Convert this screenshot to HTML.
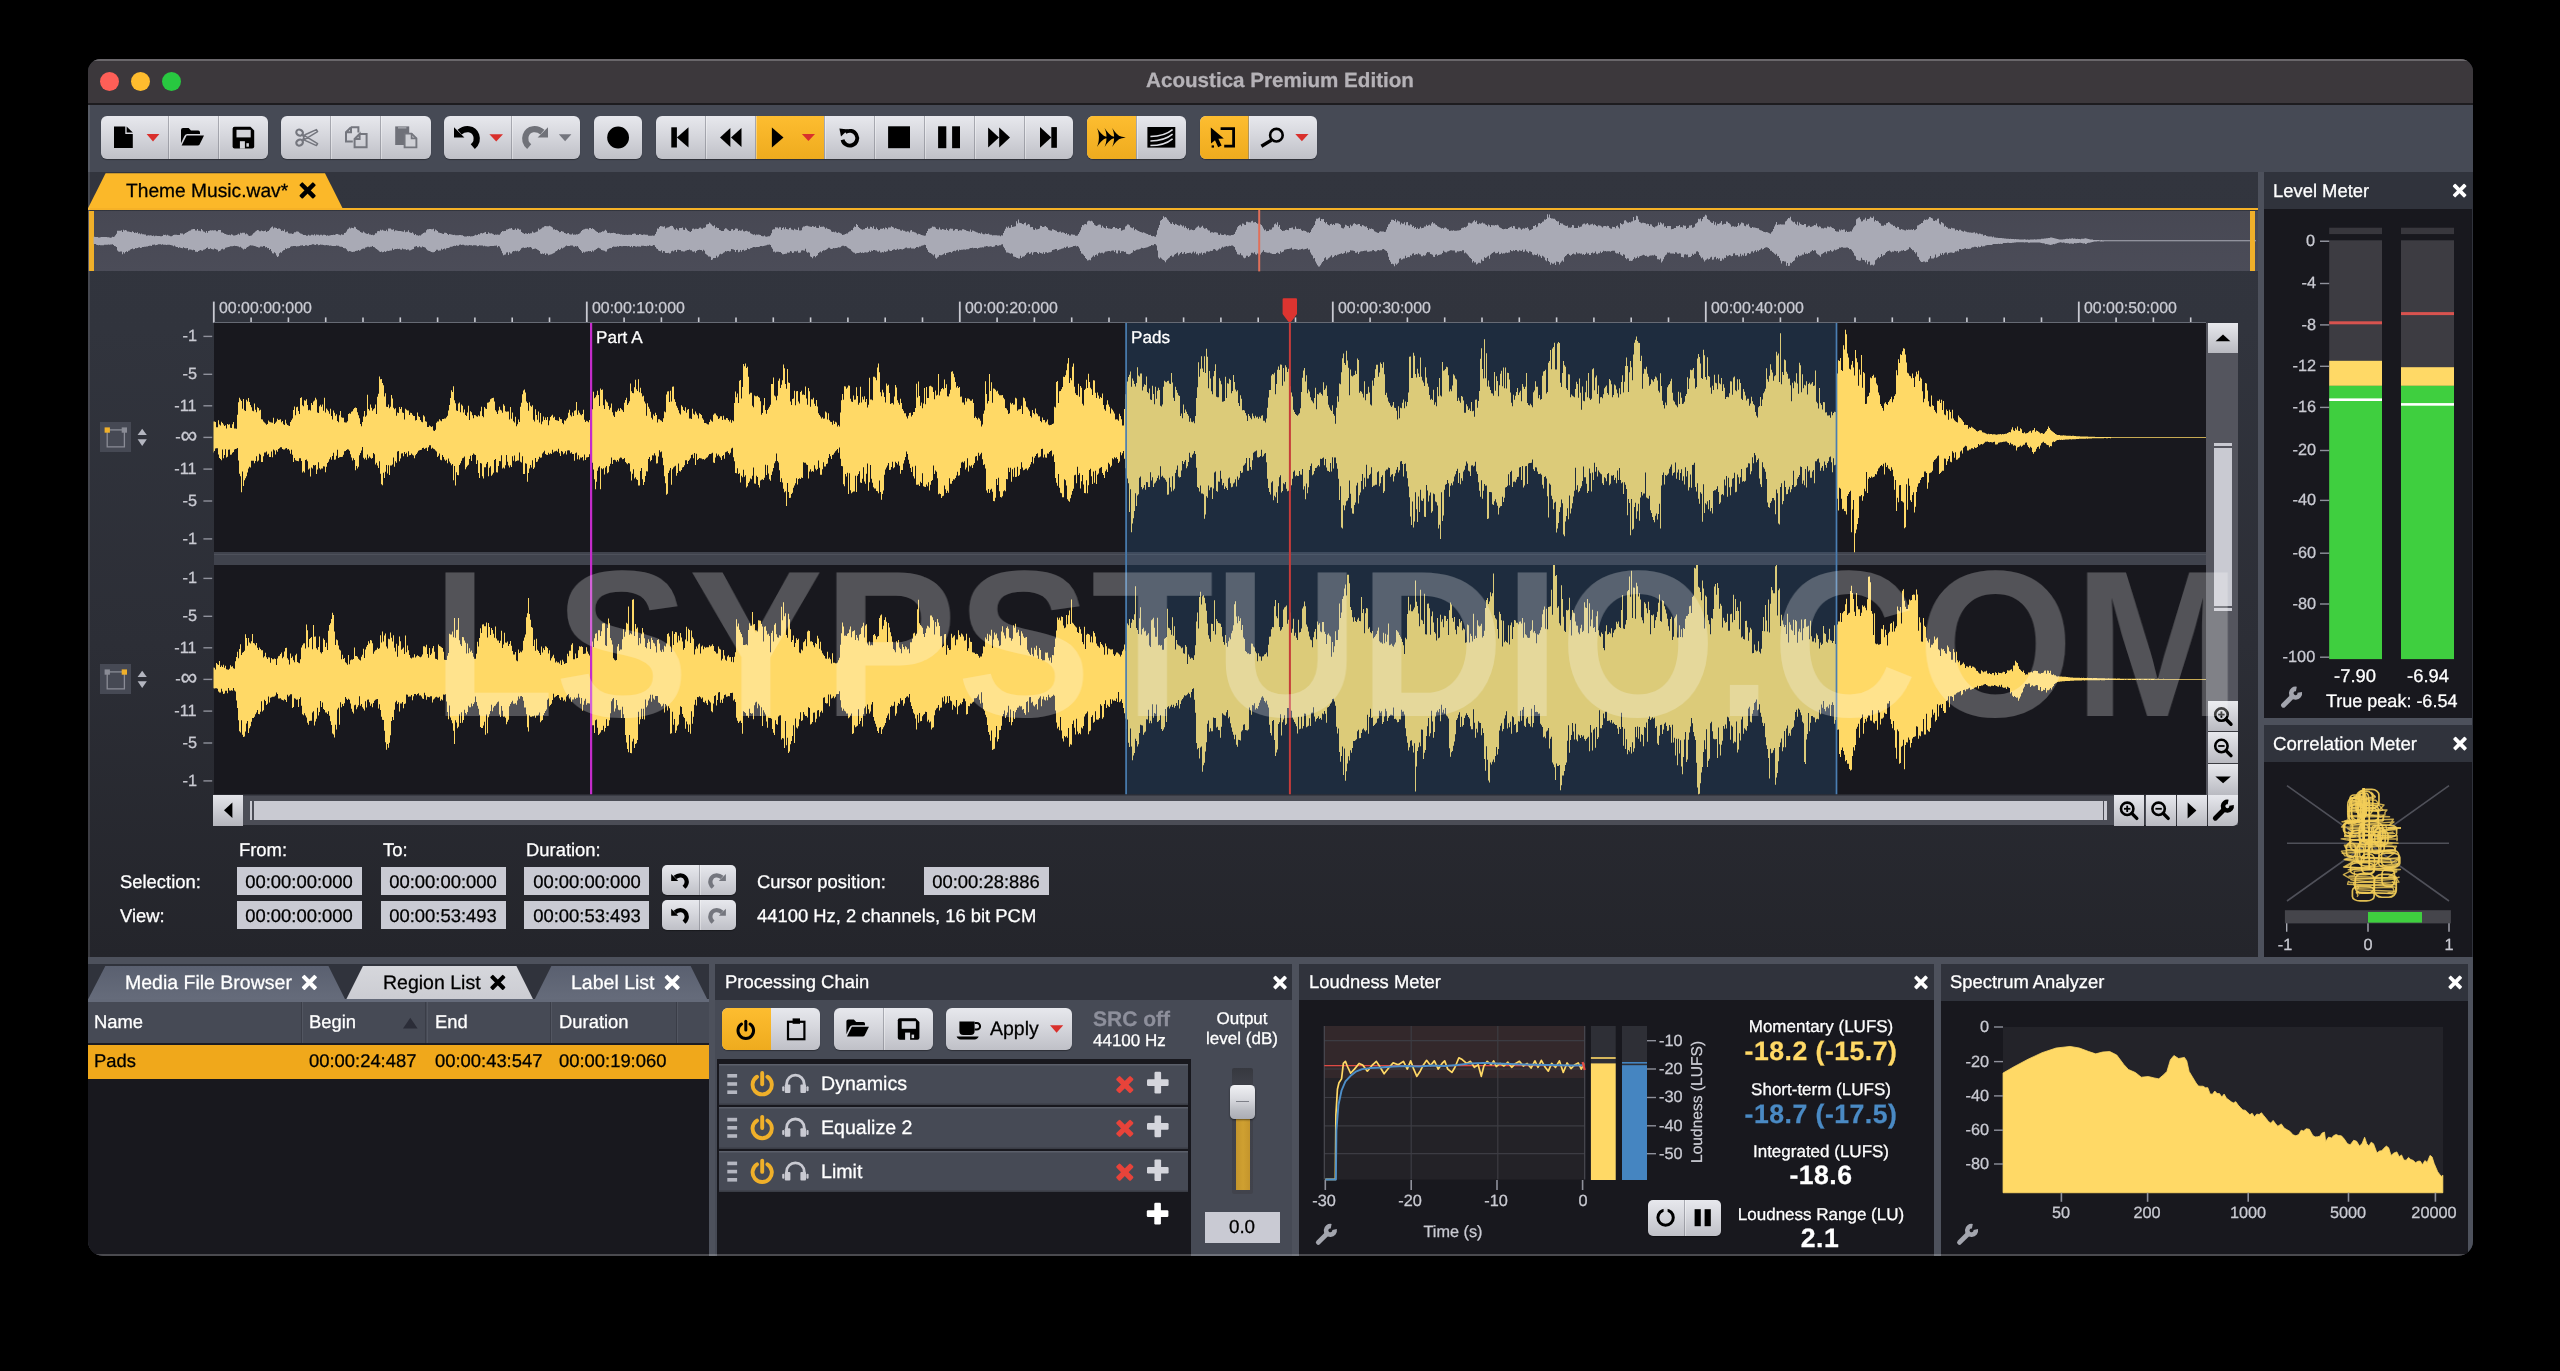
<!DOCTYPE html>
<html><head><meta charset="utf-8"><title>Acoustica Premium Edition</title>
<style>
html,body{margin:0;padding:0;background:#000;}
body{width:2560px;height:1371px;overflow:hidden;position:relative;font-family:"Liberation Sans",sans-serif;}
#win{position:absolute;left:87.8px;top:59.4px;width:2384.8px;height:1196.2px;border-radius:12.5px 12.5px 15px 15px;overflow:hidden;background:#30333c;}
#pg{position:absolute;left:-87.8px;top:-59.4px;width:2560px;height:1371px;}
#pg div{position:absolute;}
#la,#lc{left:0;top:0;width:2560px;height:1371px;}
#pg svg{position:absolute;left:0;top:0;}
.t{white-space:nowrap;-webkit-text-stroke:.55px currentColor;}
#wm{-webkit-text-stroke:0;}
body{text-rendering:geometricPrecision;}
#lc,#wm{will-change:transform;}

</style></head><body>
<div id="win"><div id="pg">
<div id="la">
<div style="left:87px;top:59px;width:2386px;height:44.5px;background:#3c383c;"></div>
<div style="left:87px;top:59.4px;width:2386px;height:1.5px;background:#6a676b;"></div>
<div style="left:87px;top:103px;width:2387px;height:1.5px;background:#1d1c1f;"></div>
<div style="left:87px;top:104.5px;width:2387px;height:67.5px;background:#464a55;"></div>
<div style="left:88px;top:172px;width:2170px;height:785px;background:linear-gradient(#32353e,#31343d 20%,#2c2e36 60%,#24252b);"></div>
<div style="left:88px;top:173.3px;width:255px;height:35px;background:#fbb829;clip-path:polygon(17.6px 0,237px 0,254.6px 100%,0 100%);"></div>
<div style="left:88px;top:207.6px;width:2170px;height:2.6px;background:#f5b127;"></div>
<div style="left:88px;top:210.5px;width:2170px;height:60.5px;background:linear-gradient(#474853,#4b4c58);"></div>
<div style="left:89px;top:211px;width:4.6px;height:60px;background:#f0b02a;"></div>
<div style="left:2250px;top:211px;width:4.6px;height:60px;background:#f0b02a;"></div>
<div style="left:2257.5px;top:172px;width:6px;height:785px;background:#4d515c;"></div>
<div style="left:88px;top:104.5px;width:1.6px;height:1150px;background:rgba(255,255,255,.10);"></div>
<div style="left:87px;top:1254.4px;width:2387px;height:1.4px;background:rgba(255,255,255,.22);z-index:3;"></div>
<div style="left:99.8px;top:71.5px;width:19.2px;height:19.2px;background:#fe5f57;border-radius:50%;"></div>
<div style="left:130.7px;top:71.5px;width:19.2px;height:19.2px;background:#febc2e;border-radius:50%;"></div>
<div style="left:161.8px;top:71.5px;width:19.2px;height:19.2px;background:#28c840;border-radius:50%;"></div>
<div style="left:100.5px;top:116px;width:167.5px;height:42.8px;background:linear-gradient(#e7e8ed,#d6d7dd 45%,#bfc0c7);border-radius:6px;box-shadow:0 1px 1px rgba(0,0,0,.35);overflow:hidden;"></div>
<div style="left:167.8px;top:116px;width:1px;height:42.8px;background:rgba(120,122,132,.55);"></div>
<div style="left:168.8px;top:116px;width:1px;height:42.8px;background:rgba(255,255,255,.35);"></div>
<div style="left:217.8px;top:116px;width:1px;height:42.8px;background:rgba(120,122,132,.55);"></div>
<div style="left:218.8px;top:116px;width:1px;height:42.8px;background:rgba(255,255,255,.35);"></div>
<div style="left:281.2px;top:116px;width:149.4px;height:42.8px;background:linear-gradient(#e7e8ed,#d6d7dd 45%,#bfc0c7);border-radius:6px;box-shadow:0 1px 1px rgba(0,0,0,.35);overflow:hidden;"></div>
<div style="left:330.3px;top:116px;width:1px;height:42.8px;background:rgba(120,122,132,.55);"></div>
<div style="left:331.3px;top:116px;width:1px;height:42.8px;background:rgba(255,255,255,.35);"></div>
<div style="left:380.1px;top:116px;width:1px;height:42.8px;background:rgba(120,122,132,.55);"></div>
<div style="left:381.1px;top:116px;width:1px;height:42.8px;background:rgba(255,255,255,.35);"></div>
<div style="left:443.8px;top:116px;width:136.5px;height:42.8px;background:linear-gradient(#e7e8ed,#d6d7dd 45%,#bfc0c7);border-radius:6px;box-shadow:0 1px 1px rgba(0,0,0,.35);overflow:hidden;"></div>
<div style="left:510.8px;top:116px;width:1px;height:42.8px;background:rgba(120,122,132,.55);"></div>
<div style="left:511.8px;top:116px;width:1px;height:42.8px;background:rgba(255,255,255,.35);"></div>
<div style="left:593.8px;top:116px;width:48.7px;height:42.8px;background:linear-gradient(#e7e8ed,#d6d7dd 45%,#bfc0c7);border-radius:6px;box-shadow:0 1px 1px rgba(0,0,0,.35);overflow:hidden;"></div>
<div style="left:656.2px;top:116px;width:416.9px;height:42.8px;background:linear-gradient(#e7e8ed,#d6d7dd 45%,#bfc0c7);border-radius:6px;box-shadow:0 1px 1px rgba(0,0,0,.35);overflow:hidden;"></div>
<div style="left:755.5px;top:116px;width:68.8px;height:42.8px;background:linear-gradient(#fdbd30,#f6b427 50%,#eeab1e);border-radius:0px 0px 0px 0px;"></div>
<div style="left:705.1px;top:116px;width:1px;height:42.8px;background:rgba(120,122,132,.55);"></div>
<div style="left:706.1px;top:116px;width:1px;height:42.8px;background:rgba(255,255,255,.35);"></div>
<div style="left:755px;top:116px;width:1px;height:42.8px;background:rgba(120,122,132,.55);"></div>
<div style="left:756px;top:116px;width:1px;height:42.8px;background:rgba(255,255,255,.35);"></div>
<div style="left:823.8px;top:116px;width:1px;height:42.8px;background:rgba(120,122,132,.55);"></div>
<div style="left:824.8px;top:116px;width:1px;height:42.8px;background:rgba(255,255,255,.35);"></div>
<div style="left:873.5px;top:116px;width:1px;height:42.8px;background:rgba(120,122,132,.55);"></div>
<div style="left:874.5px;top:116px;width:1px;height:42.8px;background:rgba(255,255,255,.35);"></div>
<div style="left:923.8px;top:116px;width:1px;height:42.8px;background:rgba(120,122,132,.55);"></div>
<div style="left:924.8px;top:116px;width:1px;height:42.8px;background:rgba(255,255,255,.35);"></div>
<div style="left:973.8px;top:116px;width:1px;height:42.8px;background:rgba(120,122,132,.55);"></div>
<div style="left:974.8px;top:116px;width:1px;height:42.8px;background:rgba(255,255,255,.35);"></div>
<div style="left:1023.8px;top:116px;width:1px;height:42.8px;background:rgba(120,122,132,.55);"></div>
<div style="left:1024.8px;top:116px;width:1px;height:42.8px;background:rgba(255,255,255,.35);"></div>
<div style="left:1086.8px;top:116px;width:99.2px;height:42.8px;background:linear-gradient(#e7e8ed,#d6d7dd 45%,#bfc0c7);border-radius:6px;box-shadow:0 1px 1px rgba(0,0,0,.35);overflow:hidden;"></div>
<div style="left:1086.8px;top:116px;width:49.5px;height:42.8px;background:linear-gradient(#fdbd30,#f6b427 50%,#eeab1e);border-radius:6px 0px 0px 6px;"></div>
<div style="left:1135.8px;top:116px;width:1px;height:42.8px;background:rgba(120,122,132,.55);"></div>
<div style="left:1136.8px;top:116px;width:1px;height:42.8px;background:rgba(255,255,255,.35);"></div>
<div style="left:1199.5px;top:116px;width:117.3px;height:42.8px;background:linear-gradient(#e7e8ed,#d6d7dd 45%,#bfc0c7);border-radius:6px;box-shadow:0 1px 1px rgba(0,0,0,.35);overflow:hidden;"></div>
<div style="left:1199.5px;top:116px;width:49.3px;height:42.8px;background:linear-gradient(#fdbd30,#f6b427 50%,#eeab1e);border-radius:6px 0px 0px 6px;"></div>
<div style="left:1248.3px;top:116px;width:1px;height:42.8px;background:rgba(120,122,132,.55);"></div>
<div style="left:1249.3px;top:116px;width:1px;height:42.8px;background:rgba(255,255,255,.35);"></div>
<div style="left:213.5px;top:323px;width:1992.5px;height:229.3px;background:#18181e;"></div>
<div style="left:213.5px;top:552.3px;width:1992.5px;height:12.7px;background:#40434d;"></div>
<div style="left:213.5px;top:553.5px;width:1992.5px;height:1.2px;background:#4e515b;"></div>
<div style="left:213.5px;top:565px;width:1992.5px;height:229.3px;background:#18181e;"></div>
<div style="left:2206px;top:323px;width:32.3px;height:472px;background:#54555e;"></div>
<div style="left:2208px;top:322.6px;width:30.3px;height:30px;background:linear-gradient(#e7e8ed,#b9bac1);"></div>
<div style="left:2213.6px;top:443px;width:18.6px;height:3.2px;background:#c9cad2;"></div>
<div style="left:2213.6px;top:447.6px;width:18.6px;height:158.6px;background:#c9cad2;"></div>
<div style="left:2213.6px;top:607.6px;width:18.6px;height:3.2px;background:#c9cad2;"></div>
<div style="left:2208px;top:700.8px;width:30.3px;height:30.6px;background:linear-gradient(#e7e8ed,#b9bac1);box-shadow:0 1px 0 rgba(0,0,0,.3);"></div>
<div style="left:2208px;top:732.4px;width:30.3px;height:30.6px;background:linear-gradient(#e7e8ed,#b9bac1);box-shadow:0 1px 0 rgba(0,0,0,.3);"></div>
<div style="left:2208px;top:764px;width:30.3px;height:30.6px;background:linear-gradient(#e7e8ed,#b9bac1);box-shadow:0 1px 0 rgba(0,0,0,.3);"></div>
<div style="left:213.5px;top:794.8px;width:2024.8px;height:30.6px;background:#4b4d56;"></div>
<div style="left:213.5px;top:794.8px;width:1992.5px;height:1.5px;background:#3a3c45;"></div>
<div style="left:213px;top:795.2px;width:30px;height:30.4px;background:linear-gradient(#e4e5ea,#b4b5bc);"></div>
<div style="left:249.8px;top:801px;width:2.6px;height:19px;background:#c9cad2;"></div>
<div style="left:253.6px;top:801px;width:1849.4px;height:19px;background:#c9cad2;"></div>
<div style="left:2104.2px;top:801px;width:2.6px;height:19px;background:#c9cad2;"></div>
<div style="left:2114px;top:795.2px;width:30.2px;height:30.4px;background:linear-gradient(#e7e8ed,#b9bac1);box-shadow:1px 0 0 rgba(0,0,0,.25);"></div>
<div style="left:2145.6px;top:795.2px;width:30.2px;height:30.4px;background:linear-gradient(#e7e8ed,#b9bac1);box-shadow:1px 0 0 rgba(0,0,0,.25);"></div>
<div style="left:2176.6px;top:795.2px;width:30.2px;height:30.4px;background:linear-gradient(#e7e8ed,#b9bac1);box-shadow:1px 0 0 rgba(0,0,0,.25);"></div>
<div style="left:2207.8px;top:795.2px;width:30.5px;height:30.4px;background:linear-gradient(#e7e8ed,#b9bac1);border-radius:0 0 5px 0;"></div>
<div style="left:100.3px;top:422.3px;width:31px;height:30px;background:#464954;"></div>
<div style="left:100.3px;top:664.3px;width:31px;height:30px;background:#464954;"></div>
<div style="left:237px;top:866.6px;width:125.2px;height:28.4px;background:#c9cad3;"></div>
<div style="left:380.9px;top:866.6px;width:125.2px;height:28.4px;background:#c9cad3;"></div>
<div style="left:524.2px;top:866.6px;width:125.2px;height:28.4px;background:#c9cad3;"></div>
<div style="left:923.7px;top:866.6px;width:125.2px;height:28.4px;background:#c9cad3;"></div>
<div style="left:237px;top:900.8px;width:125.2px;height:28.4px;background:#c9cad3;"></div>
<div style="left:380.9px;top:900.8px;width:125.2px;height:28.4px;background:#c9cad3;"></div>
<div style="left:524.2px;top:900.8px;width:125.2px;height:28.4px;background:#c9cad3;"></div>
<div style="left:662.4px;top:865px;width:74px;height:30.4px;background:linear-gradient(#e7e8ed,#d6d7dd 45%,#bfc0c7);border-radius:5px;box-shadow:0 1px 1px rgba(0,0,0,.35);overflow:hidden;"></div>
<div style="left:698.9px;top:865px;width:1px;height:30.4px;background:rgba(120,122,132,.55);"></div>
<div style="left:699.9px;top:865px;width:1px;height:30.4px;background:rgba(255,255,255,.35);"></div>
<div style="left:662.4px;top:900px;width:74px;height:30.4px;background:linear-gradient(#e7e8ed,#d6d7dd 45%,#bfc0c7);border-radius:5px;box-shadow:0 1px 1px rgba(0,0,0,.35);overflow:hidden;"></div>
<div style="left:698.9px;top:900px;width:1px;height:30.4px;background:rgba(120,122,132,.55);"></div>
<div style="left:699.9px;top:900px;width:1px;height:30.4px;background:rgba(255,255,255,.35);"></div>
<div style="left:87px;top:957px;width:2387px;height:6.8px;background:#4d515c;"></div>
<div style="left:88px;top:963.8px;width:621px;height:36px;background:#30333c;"></div>
<div style="left:88px;top:965.5px;width:257.2px;height:34px;background:linear-gradient(#5a6070,#666c7b);clip-path:polygon(17.6px 0,240.2px 0,257.2px 100%,0 100%);"></div>
<div style="left:346.2px;top:965.5px;width:187px;height:34px;background:linear-gradient(#d6d7dc,#cbccd2);clip-path:polygon(17px 0,170px 0,187px 100%,0 100%);"></div>
<div style="left:534.6px;top:965.5px;width:172.8px;height:34px;background:linear-gradient(#5a6070,#666c7b);clip-path:polygon(17px 0,155.8px 0,172.8px 100%,0 100%);"></div>
<div style="left:88px;top:999.2px;width:621px;height:2.4px;background:#646a79;"></div>
<div style="left:88px;top:1001.5px;width:621px;height:41.5px;background:#464a55;"></div>
<div style="left:300.9px;top:1001.5px;width:1.2px;height:41.5px;background:#3a3d47;"></div>
<div style="left:302.1px;top:1001.5px;width:1px;height:41.5px;background:#525661;"></div>
<div style="left:425.3px;top:1001.5px;width:1.2px;height:41.5px;background:#3a3d47;"></div>
<div style="left:426.5px;top:1001.5px;width:1px;height:41.5px;background:#525661;"></div>
<div style="left:550.2px;top:1001.5px;width:1.2px;height:41.5px;background:#3a3d47;"></div>
<div style="left:551.4px;top:1001.5px;width:1px;height:41.5px;background:#525661;"></div>
<div style="left:675.6px;top:1001.5px;width:1.2px;height:41.5px;background:#3a3d47;"></div>
<div style="left:676.8px;top:1001.5px;width:1px;height:41.5px;background:#525661;"></div>
<div style="left:88px;top:1043px;width:621px;height:1.6px;background:#1c1c22;"></div>
<div style="left:88px;top:1044.5px;width:621px;height:34.2px;background:#f0a81b;"></div>
<div style="left:88px;top:1078.7px;width:621px;height:178px;background:#18181e;"></div>
<div style="left:708.8px;top:963.8px;width:6.4px;height:293px;background:#4d515c;"></div>
<div style="left:1292.4px;top:963.8px;width:6.8px;height:293px;background:#4d515c;"></div>
<div style="left:1933.8px;top:963.8px;width:6.8px;height:293px;background:#4d515c;"></div>
<div style="left:2468px;top:963.8px;width:5px;height:293px;background:#4d515c;"></div>
<div style="left:715.2px;top:963.8px;width:577.2px;height:36.4px;background:#30333c;"></div>
<div style="left:715.2px;top:1000.2px;width:577.2px;height:256px;background:#464a55;"></div>
<div style="left:717px;top:1058.5px;width:473.8px;height:198px;background:#18181e;"></div>
<div style="left:721.6px;top:1007.6px;width:98.8px;height:42.8px;background:linear-gradient(#e7e8ed,#d6d7dd 45%,#bfc0c7);border-radius:6px;box-shadow:0 1px 1px rgba(0,0,0,.35);overflow:hidden;"></div>
<div style="left:721.6px;top:1007.6px;width:49.3px;height:42.8px;background:linear-gradient(#fdbd30,#f6b427 50%,#eeab1e);border-radius:6px 0px 0px 6px;"></div>
<div style="left:834px;top:1007.6px;width:99px;height:42.8px;background:linear-gradient(#e7e8ed,#d6d7dd 45%,#bfc0c7);border-radius:6px;box-shadow:0 1px 1px rgba(0,0,0,.35);overflow:hidden;"></div>
<div style="left:882.9px;top:1007.6px;width:1px;height:42.8px;background:rgba(120,122,132,.55);"></div>
<div style="left:883.9px;top:1007.6px;width:1px;height:42.8px;background:rgba(255,255,255,.35);"></div>
<div style="left:946.2px;top:1007.6px;width:125.7px;height:42.8px;background:linear-gradient(#e7e8ed,#d6d7dd 45%,#bfc0c7);border-radius:6px;box-shadow:0 1px 1px rgba(0,0,0,.35);overflow:hidden;"></div>
<div style="left:719.4px;top:1063.6px;width:468.6px;height:41.2px;background:#464a55;box-shadow:inset 0 1.5px 0 #5b5f6a, inset 0 -1.5px 0 #3a3d46;"></div>
<div style="left:719.4px;top:1107.4px;width:468.6px;height:41.2px;background:#464a55;box-shadow:inset 0 1.5px 0 #5b5f6a, inset 0 -1.5px 0 #3a3d46;"></div>
<div style="left:719.4px;top:1151.2px;width:468.6px;height:41.2px;background:#464a55;box-shadow:inset 0 1.5px 0 #5b5f6a, inset 0 -1.5px 0 #3a3d46;"></div>
<div style="left:1231.8px;top:1068.4px;width:21.4px;height:125.4px;background:linear-gradient(#36383f,#3e4048 12%,#41434c);border-radius:2px;"></div>
<div style="left:1235.6px;top:1112px;width:14px;height:78.2px;background:linear-gradient(90deg,#c4952c,#cfa031 50%,#c4952c);"></div>
<div style="left:1230.2px;top:1084.8px;width:24.8px;height:34.2px;background:linear-gradient(#f0f1f4,#d9dadf 40%,#b9bbc2 75%,#aaacb4);border-radius:4.5px;box-shadow:0 1px 2px rgba(0,0,0,.5);"></div>
<div style="left:1236.4px;top:1100.6px;width:12.4px;height:1.6px;background:#7d7f88;"></div>
<div style="left:1204.6px;top:1211.8px;width:75.6px;height:31.4px;background:#c9cad3;"></div>
<div style="left:1299.2px;top:963.8px;width:634.6px;height:36.4px;background:#30333c;"></div>
<div style="left:1299.2px;top:1000.2px;width:634.6px;height:256px;background:#18181e;"></div>
<div style="left:1647.6px;top:1199.6px;width:73.4px;height:36px;background:linear-gradient(#e7e8ed,#d6d7dd 45%,#bfc0c7);border-radius:5px;box-shadow:0 1px 1px rgba(0,0,0,.35);overflow:hidden;"></div>
<div style="left:1683.9px;top:1199.6px;width:1px;height:36px;background:rgba(120,122,132,.55);"></div>
<div style="left:1684.9px;top:1199.6px;width:1px;height:36px;background:rgba(255,255,255,.35);"></div>
<div style="left:1940.6px;top:963.8px;width:527.4px;height:36.8px;background:#30333c;"></div>
<div style="left:1940.6px;top:1000.6px;width:527.4px;height:256px;background:#18181e;"></div>
<div style="left:2003px;top:1026.6px;width:439.8px;height:166.2px;background:#232329;"></div>
<div style="left:2263.5px;top:172.7px;width:208.5px;height:36px;background:#30333c;"></div>
<div style="left:2263.5px;top:208.7px;width:208.5px;height:509.5px;background:#18181e;"></div>
<div style="left:2263.5px;top:718.2px;width:208.5px;height:6.8px;background:#4d515c;"></div>
<div style="left:2263.5px;top:725px;width:208.5px;height:37px;background:#30333c;"></div>
<div style="left:2263.5px;top:762px;width:208.5px;height:195px;background:#18181e;"></div>
</div>
<svg width="2560" height="1371" viewBox="0 0 2560 1371"><defs><clipPath id="c1"><rect x="213.5" y="323" width="1992.5" height="229.3"/></clipPath><clipPath id="c2"><rect x="213.5" y="565" width="1992.5" height="229.3"/></clipPath></defs>
<path d="M213,437.6V421.49H214V421.45H215V421.98H216V427.14H217V427.19H218V420.25H219V424.4H220V425.51H221V421.68H222V423.02H223V424.5H224V426.1H225V425.23H226V428.53H227V424.12H228V424.68H229V424.27H230V427.8H231V428.07H232V424.21H233V421.92H234V428.38H235V428.47H236V428.87H237V414.69H238V402.22H239V397.78H240V399.52H241V400.96H242V408.77H243V398.92H244V410.33H245V411.09H246V399.84H247V401.53H248V398.07H249V402.08H250V405H251V407.3H252V410.82H253V411.23H254V403.5H255V409.87H256V412.26H257V407.34H258V407.98H259V410.48H260V409.79H261V419.17H262V419.56H263V421.53H264V422.55H265V423.44H266V424.87H267V424.01H268V420.5H269V421.81H270V422.18H271V422.44H272V422.83H273V417.67H274V423.92H275V422.68H276V421.43H277V418.81H278V419.88H279V419.71H280V419.37H281V422.17H282V421.11H283V424.26H284V424.95H285V419.77H286V423.43H287V425.09H288V425.6H289V426.1H290V422.04H291V420.32H292V418.59H293V409.97H294V406.62H295V415.26H296V407.25H297V406.83H298V411.02H299V413.9H300V398.11H301V397.17H302V405.22H303V406.21H304V400.27H305V400.68H306V399.26H307V404.92H308V410.19H309V409.67H310V410.5H311V403.02H312V404.9H313V401.53H314V400.58H315V397.69H316V399.5H317V412.56H318V412.95H319V406.3H320V404.65H321V406.69H322V404.58H323V410.85H324V397.66H325V412.49H326V408.45H327V409.74H328V411.13H329V413.72H330V408.67H331V416.07H332V419.42H333V410.51H334V412.87H335V415.8H336V414.28H337V421.02H338V422.23H339V415.2H340V410.97H341V417.21H342V417.84H343V417.78H344V422.35H345V422.4H346V422.52H347V421.28H348V414.04H349V413.36H350V413.72H351V411.79H352V411.35H353V409.35H354V407.95H355V407.56H356V407.92H357V412.22H358V415.19H359V418.29H360V424.12H361V426.3H362V421.88H363V416.39H364V410.9H365V416.66H366V415.58H367V394.76H368V409.1H369V410.57H370V404.47H371V407.68H372V410.74H373V409.25H374V408.18H375V404.48H376V413.94H377V396.73H378V393.7H379V376.41H380V379.19H381V378.96H382V383.06H383V385.15H384V396.51H385V393.13H386V406.87H387V406.98H388V404.6H389V408.18H390V406.78H391V394.99H392V398.49H393V407.83H394V409.14H395V408.3H396V415.78H397V412.5H398V413.06H399V407.07H400V409.04H401V406.95H402V412.41H403V413.08H404V419.55H405V408.72H406V409.63H407V410.46H408V410.44H409V415.12H410V412.83H411V413.01H412V414.65H413V416.11H414V415.96H415V420.4H416V419.88H417V412.6H418V416.26H419V417.12H420V420.12H421V421.72H422V422.31H423V415.18H424V416.46H425V421.28H426V421.78H427V426.89H428V426.98H429V425.57H430V426.34H431V427.12H432V426.2H433V430.45H434V430.91H435V429.68H436V422.78H437V421.5H438V421.59H439V419.15H440V420.6H441V421.22H442V418.95H443V419.06H444V418.46H445V418.61H446V417.3H447V415.87H448V410.58H449V405H450V398.04H451V390.24H452V391.9H453V386.15H454V400.16H455V403.23H456V410.44H457V410.95H458V403.5H459V402.48H460V412.35H461V404.62H462V405.66H463V412.42H464V409.51H465V414.9H466V416.01H467V412.5H468V405.66H469V419.92H470V411.28H471V412.26H472V415.14H473V418.18H474V415.04H475V415.14H476V416.3H477V416.64H478V415.2H479V416.36H480V411.37H481V406.63H482V415.92H483V417.21H484V406.97H485V408.51H486V409.03H487V402.64H488V402.53H489V401.75H490V399.18H491V398.43H492V398.12H493V397.79H494V401.49H495V410.27H496V411.8H497V413.89H498V410.46H499V406.69H500V409.74H501V410.49H502V412.63H503V404.3H504V405.85H505V411.2H506V411.72H507V411.62H508V411.4H509V419.57H510V406.91H511V418.79H512V412.47H513V421.24H514V422.56H515V416.71H516V426.34H517V424.22H518V419.53H519V421.93H520V406.69H521V402.76H522V394.23H523V390.59H524V389.56H525V392.41H526V401.59H527V403.12H528V410.78H529V402.28H530V405.65H531V406.84H532V405.36H533V419.68H534V421.41H535V409.22H536V414.94H537V419.71H538V411.54H539V422.46H540V413H541V424.26H542V421.48H543V416.48H544V420.05H545V417.44H546V419.89H547V416.98H548V425.18H549V420.51H550V417.04H551V415.86H552V414.78H553V417.76H554V416.78H555V420.05H556V420.29H557V420.43H558V421.12H559V417.16H560V419.11H561V419.22H562V423.06H563V424.36H564V420.25H565V420.87H566V419.34H567V417.72H568V412.66H569V409.75H570V415.37H571V416.41H572V412.56H573V416.06H574V410.66H575V410.24H576V402.08H577V414.77H578V410.48H579V412.72H580V414.55H581V415.26H582V413.92H583V409.84H584V419.81H585V422.01H586V420.63H587V421.22H588V422.22H589V420.01H590V421.16H591V412.97H592V409.19H593V391.79H594V398.34H595V397.15H596V395.13H597V390.83H598V395.05H599V406.05H600V388.41H601V390.1H602V389.5H603V405.19H604V408.96H605V399.58H606V401.5H607V402.43H608V406.07H609V409.65H610V407.72H611V403.48H612V412.14H613V415.48H614V417.08H615V411.53H616V411.98H617V410.61H618V408.57H619V411.01H620V408.03H621V409.15H622V410.36H623V411.99H624V402.87H625V399.95H626V397.7H627V405.07H628V403.29H629V401.21H630V383.49H631V391.14H632V392.98H633V393.2H634V387.3H635V379.81H636V389.15H637V391.1H638V379.29H639V392.18H640V387.72H641V393.19H642V396.58H643V395.66H644V401.59H645V403.43H646V415.69H647V403.21H648V406.67H649V408.67H650V411.69H651V417.68H652V419.45H653V414.43H654V416.09H655V412.85H656V415.05H657V422.51H658V419.25H659V419.16H660V420.2H661V420.85H662V422.06H663V418.19H664V411.4H665V412.31H666V394.58H667V391.49H668V391.35H669V401.93H670V390.65H671V401.39H672V386.81H673V386.45H674V399.29H675V402.03H676V405.86H677V407.72H678V410.36H679V413.19H680V414.62H681V405.13H682V406.83H683V409.94H684V410.98H685V407.16H686V412.7H687V409.73H688V409.09H689V418.42H690V418.5H691V418.97H692V408.82H693V413.68H694V414.7H695V411.57H696V413.49H697V415.14H698V418.61H699V413.19H700V414.05H701V414.94H702V418.26H703V419.7H704V422.95H705V423.12H706V423.57H707V424.36H708V424.5H709V421.89H710V419.59H711V420.69H712V421.81H713V414.67H714V413.57H715V413.59H716V415.23H717V416.23H718V418.92H719V418.2H720V416.29H721V416.32H722V419.97H723V415.64H724V419.56H725V419.84H726V418.06H727V418.3H728V419.93H729V421.38H730V419.84H731V422.73H732V420.23H733V421.15H734V403.11H735V391.59H736V397.22H737V393.41H738V403.11H739V380.82H740V380.08H741V398.6H742V386.94H743V363.96H744V366.25H745V363.48H746V368.09H747V366.82H748V376.64H749V394.14H750V392.74H751V392.78H752V405.71H753V407.3H754V395.49H755V396.32H756V396.13H757V395.69H758V397.07H759V397.63H760V401.16H761V414.66H762V412.89H763V405.26H764V398.01H765V410.04H766V413.74H767V409.93H768V408.39H769V406.82H770V404.66H771V383.97H772V383.97H773V377.57H774V395.43H775V396.5H776V400.28H777V395.64H778V380.68H779V378.49H780V387.99H781V384.74H782V380.32H783V364.55H784V368.17H785V383.89H786V388.65H787V368.95H788V382.42H789V382.99H790V401.54H791V404.97H792V399.08H793V398.58H794V390.68H795V405.2H796V391.26H797V390.94H798V401.4H799V403.56H800V392.07H801V390.67H802V394.63H803V394.51H804V395.09H805V386.46H806V398.39H807V404.78H808V388.07H809V391.31H810V406.7H811V399.15H812V399.53H813V397.74H814V403.7H815V406.01H816V399.96H817V406.55H818V413.28H819V415.02H820V416.44H821V418.47H822V417.19H823V418.83H824V418.56H825V411.43H826V412.44H827V419.5H828V413.34H829V420.2H830V421.65H831V422.12H832V424.81H833V420.8H834V423.9H835V421.82H836V422.44H837V426.48H838V424.95H839V426.53H840V412.6H841V400.2H842V393.9H843V399.66H844V386.17H845V386.46H846V388.81H847V387.41H848V385.4H849V385.82H850V398.78H851V401.43H852V402.05H853V395.55H854V399.77H855V399.4H856V387.21H857V395.94H858V404.85H859V402.81H860V386.83H861V402.41H862V396.7H863V399.58H864V396.3H865V402.08H866V398.89H867V407.39H868V404.77H869V377.85H870V399.4H871V399.39H872V400.36H873V376.8H874V376.69H875V377.83H876V380.16H877V367.45H878V363.45H879V372.31H880V392.29H881V396.32H882V389.69H883V392.45H884V396.97H885V402.62H886V383.45H887V385.81H888V384.71H889V392.92H890V403.88H891V403.2H892V403.09H893V404.54H894V396.53H895V384.92H896V387.47H897V400.16H898V402.66H899V404.81H900V398.7H901V403.03H902V409.05H903V410.65H904V413.13H905V413.3H906V416.58H907V418.47H908V415.65H909V413.06H910V412.7H911V416.58H912V414.9H913V412.04H914V411.88H915V408.05H916V383.8H917V397.38H918V381.43H919V396.12H920V405.76H921V402.38H922V408.19H923V403.48H924V387.99H925V404.21H926V386.88H927V398.1H928V398.02H929V386.18H930V385.71H931V386.51H932V387.27H933V392.02H934V399.35H935V390.58H936V395.44H937V394.72H938V374.04H939V395.41H940V391.46H941V388.9H942V387.97H943V389.24H944V379.41H945V387.89H946V384.28H947V396.29H948V396.61H949V393.69H950V389.86H951V371.65H952V371.31H953V373.71H954V377.16H955V381.96H956V387.38H957V386.11H958V388.08H959V386.98H960V396.86H961V396.4H962V402.55H963V402.39H964V404.78H965V398.09H966V401.57H967V398.51H968V398.51H969V399.24H970V400.73H971V400.7H972V399.24H973V402.99H974V417.98H975V416.52H976V418.07H977V419.59H978V417.87H979V418.82H980V420.72H981V426.47H982V424.62H983V413.72H984V410.58H985V381.33H986V394.03H987V403.58H988V401.07H989V373.89H990V391.09H991V382.3H992V402.76H993V388.47H994V388.64H995V389.72H996V391.44H997V390.67H998V393.77H999V395.28H1000V395.37H1001V395.2H1002V395.07H1003V397.65H1004V399.3H1005V408.09H1006V408.41H1007V410.29H1008V413.96H1009V413.28H1010V402.74H1011V404.36H1012V402.88H1013V404.8H1014V404.39H1015V397.72H1016V398.46H1017V410.75H1018V409.59H1019V409.32H1020V408.99H1021V405.63H1022V413.96H1023V397.4H1024V398.27H1025V401.19H1026V406.75H1027V407.46H1028V409.47H1029V411.14H1030V416.07H1031V417.53H1032V409.93H1033V412.97H1034V414.21H1035V408.42H1036V413.17H1037V414.22H1038V416.26H1039V416.37H1040V420.95H1041V422.32H1042V417.39H1043V419.97H1044V420.09H1045V422.51H1046V421.39H1047V419.56H1048V424.46H1049V425.23H1050V424.9H1051V424.75H1052V424.12H1053V423.51H1054V406.69H1055V407.39H1056V382.11H1057V381H1058V403.08H1059V391.32H1060V391.08H1061V389.16H1062V387.04H1063V376.67H1064V377.09H1065V375.27H1066V370.13H1067V363.51H1068V357.89H1069V383.02H1070V377.95H1071V380.31H1072V366.75H1073V363.46H1074V386.65H1075V393.25H1076V394.93H1077V395.35H1078V383.69H1079V396.64H1080V386.01H1081V387.65H1082V403.83H1083V405.4H1084V390.04H1085V388.87H1086V379.83H1087V388.08H1088V373.63H1089V381.99H1090V387.69H1091V389.15H1092V395.03H1093V380.24H1094V380.53H1095V392.84H1096V397.88H1097V392.59H1098V395.54H1099V398.64H1100V397.03H1101V398.02H1102V393.48H1103V404.97H1104V409.29H1105V410.73H1106V404.66H1107V400.21H1108V404.48H1109V406.87H1110V413.62H1111V408.42H1112V409.86H1113V411.58H1114V413.46H1115V419.62H1116V419.28H1117V419.42H1118V420.73H1119V413.73H1120V415.88H1121V419.19H1122V425.46H1123V425.39H1124V409.09H1125V394.33H1126V385.61H1127V381.58H1128V377.06H1129V374.85H1130V371.44H1131V386.7H1132V378.44H1133V380.7H1134V383.89H1135V386.41H1136V383.02H1137V367.23H1138V375.51H1139V376.51H1140V373.6H1141V373.45H1142V390.45H1143V386.87H1144V384.26H1145V385.03H1146V376.59H1147V391.88H1148V393.17H1149V388.48H1150V399.61H1151V399.88H1152V385.68H1153V393.94H1154V404.17H1155V386.71H1156V398.76H1157V390.86H1158V387.77H1159V389.88H1160V405.82H1161V406.45H1162V404.46H1163V386.78H1164V380.87H1165V381.65H1166V382.23H1167V380.97H1168V380.86H1169V383.59H1170V383.94H1171V372.94H1172V382.57H1173V397.81H1174V400.9H1175V386.77H1176V390.06H1177V392.64H1178V395.17H1179V396.04H1180V416.1H1181V413.58H1182V418.27H1183V404.56H1184V412.89H1185V409.39H1186V411.75H1187V413.89H1188V415.81H1189V421.84H1190V418.35H1191V421.8H1192V422.32H1193V421.13H1194V423.37H1195V415.93H1196V398.02H1197V387.37H1198V362.32H1199V376.7H1200V368.77H1201V356.29H1202V368.4H1203V371.96H1204V356.15H1205V372.92H1206V348.65H1207V356.81H1208V388.37H1209V370.9H1210V378.48H1211V391.23H1212V394.34H1213V376.17H1214V370.98H1215V364.26H1216V396.66H1217V397.36H1218V397.36H1219V378.13H1220V380.67H1221V384.37H1222V401.72H1223V401.5H1224V401.08H1225V376.67H1226V397.93H1227V383.17H1228V383.77H1229V378.73H1230V380.12H1231V393.16H1232V390.97H1233V374.95H1234V382.06H1235V389.5H1236V391.49H1237V390.15H1238V403.11H1239V406.06H1240V395.2H1241V398.68H1242V410.24H1243V409.96H1244V410.56H1245V412.92H1246V415.44H1247V420.88H1248V413.91H1249V415.97H1250V417.65H1251V419.22H1252V413.43H1253V416.2H1254V418.36H1255V415.84H1256V417.44H1257V416.64H1258V418.84H1259V416.75H1260V418.28H1261V415.81H1262V415.26H1263V420.68H1264V420.87H1265V422.51H1266V418.56H1267V407.84H1268V397.44H1269V390.1H1270V389.99H1271V375.47H1272V373.96H1273V374.42H1274V372.71H1275V394.16H1276V384.02H1277V369.73H1278V366.57H1279V370.03H1280V364.56H1281V364.63H1282V385.78H1283V368.12H1284V381.53H1285V365.21H1286V367.29H1287V372.11H1288V368.63H1289V382.91H1290V386.34H1291V392.54H1292V396.45H1293V409.84H1294V412.07H1295V414.02H1296V415.01H1297V415.83H1298V414.55H1299V413.19H1300V408.33H1301V392.08H1302V377.67H1303V370.61H1304V367.91H1305V381.54H1306V375.19H1307V393.31H1308V389.44H1309V391.59H1310V397.34H1311V400.13H1312V401.58H1313V403.33H1314V397.95H1315V387.86H1316V409.19H1317V394.08H1318V394.48H1319V392.81H1320V392.6H1321V393.88H1322V395.6H1323V382.26H1324V389.96H1325V388.49H1326V385.59H1327V395.88H1328V404.86H1329V407.42H1330V409.82H1331V410.98H1332V405.2H1333V414.1H1334V415.8H1335V423.63H1336V407.86H1337V396.33H1338V401.86H1339V383.4H1340V384.13H1341V372.24H1342V358.3H1343V353.39H1344V362.88H1345V364.9H1346V350.76H1347V360.47H1348V367.84H1349V395.13H1350V369.43H1351V375.75H1352V376.61H1353V375.59H1354V375.12H1355V370.69H1356V373.96H1357V358.42H1358V359.93H1359V392.83H1360V391.05H1361V391.81H1362V393.71H1363V397.56H1364V381.26H1365V400.23H1366V394.03H1367V393.75H1368V386.82H1369V392.56H1370V404.59H1371V405.47H1372V380.58H1373V385.85H1374V378.04H1375V369.23H1376V364.75H1377V364.71H1378V376.8H1379V372.54H1380V362.5H1381V363.95H1382V367.84H1383V362.3H1384V374.26H1385V395.05H1386V392.77H1387V397.49H1388V401.46H1389V402.93H1390V405.52H1391V407.1H1392V405.54H1393V402.04H1394V407.86H1395V408.08H1396V410.85H1397V419.47H1398V406.24H1399V418.22H1400V407.86H1401V408.17H1402V402.85H1403V399.54H1404V408.28H1405V401.42H1406V406.29H1407V401.96H1408V392.44H1409V356.82H1410V356.57H1411V378.1H1412V377.89H1413V352.76H1414V355.69H1415V374.11H1416V377.42H1417V368.63H1418V373.59H1419V377.02H1420V357.59H1421V376.87H1422V380.49H1423V382.5H1424V385.91H1425V367.22H1426V377.42H1427V383.58H1428V386.87H1429V394.88H1430V399.77H1431V398.81H1432V399.88H1433V389.63H1434V404.63H1435V402.15H1436V406.37H1437V387.11H1438V396.21H1439V378.05H1440V395.49H1441V396.62H1442V361.95H1443V370.64H1444V370.18H1445V368.95H1446V366.84H1447V367.16H1448V375.26H1449V391.48H1450V389.19H1451V391.23H1452V385.57H1453V374.29H1454V375.47H1455V378.58H1456V379.48H1457V401.02H1458V397.84H1459V400.79H1460V402.81H1461V396.01H1462V396.74H1463V400.46H1464V412.81H1465V412.66H1466V404.32H1467V406.14H1468V409.92H1469V408.44H1470V411.07H1471V401.99H1472V411.2H1473V410.82H1474V416.81H1475V399.78H1476V399.47H1477V407.8H1478V401.04H1479V391.02H1480V358.64H1481V348.22H1482V368.96H1483V378.58H1484V339.35H1485V378.17H1486V353.29H1487V386.59H1488V380.55H1489V386.87H1490V390.05H1491V393.14H1492V393.6H1493V395.73H1494V372.12H1495V390.73H1496V376.19H1497V381.01H1498V396.31H1499V385.28H1500V373.71H1501V370.67H1502V386.25H1503V367.56H1504V388.19H1505V367.42H1506V388.54H1507V372.76H1508V372.89H1509V379.53H1510V392.41H1511V402.86H1512V406.14H1513V394.8H1514V399.65H1515V395.66H1516V391.94H1517V388.08H1518V395.03H1519V392.51H1520V390.75H1521V401.29H1522V384.06H1523V386.64H1524V388.93H1525V386.72H1526V372.95H1527V403.09H1528V405.09H1529V405.55H1530V403.78H1531V405.23H1532V407.24H1533V392.24H1534V390.44H1535V381.3H1536V386.81H1537V386.65H1538V398.3H1539V394.95H1540V399.78H1541V399.07H1542V375.67H1543V371.42H1544V371.04H1545V369.75H1546V393.39H1547V392.01H1548V362.69H1549V361.03H1550V349.89H1551V369.24H1552V348.38H1553V346.99H1554V342.86H1555V369.48H1556V369.46H1557V343.53H1558V341.91H1559V342.97H1560V382.65H1561V387.05H1562V373.09H1563V360.93H1564V365.14H1565V366.66H1566V388.32H1567V390.03H1568V374.22H1569V374.38H1570V397.22H1571V394.44H1572V395.76H1573V396.59H1574V397.21H1575V389H1576V381.64H1577V384H1578V397.79H1579V378.47H1580V392.79H1581V409.72H1582V386.38H1583V400.84H1584V401.3H1585V392.37H1586V380.78H1587V397.24H1588V373.12H1589V398.32H1590V400.11H1591V398.82H1592V369.35H1593V368.35H1594V390.23H1595V377.61H1596V375.46H1597V393.91H1598V385.42H1599V403.4H1600V397.3H1601V397.03H1602V398.33H1603V394.31H1604V388.14H1605V386.69H1606V385.48H1607V393.02H1608V394.86H1609V379.12H1610V380.45H1611V384.22H1612V397.16H1613V394.88H1614V384.42H1615V385.51H1616V389.47H1617V393.32H1618V397.46H1619V388.24H1620V394.23H1621V382.1H1622V375.26H1623V392.51H1624V381.71H1625V366.11H1626V357.38H1627V365.9H1628V391.88H1629V372.26H1630V361.06H1631V367.29H1632V380.15H1633V354.42H1634V342.69H1635V339.7H1636V336.6H1637V341.07H1638V342.86H1639V343.12H1640V361.08H1641V355.78H1642V388.67H1643V373.67H1644V368.71H1645V369.35H1646V366.63H1647V373.83H1648V376.85H1649V385.78H1650V384.25H1651V379.26H1652V380.29H1653V381.66H1654V379.12H1655V376.42H1656V377.55H1657V380.52H1658V390.71H1659V392.52H1660V373.18H1661V385.92H1662V400.67H1663V405H1664V408.61H1665V402.45H1666V405.33H1667V387.34H1668V385.32H1669V384.01H1670V381.36H1671V378.87H1672V392.8H1673V400.58H1674V401.7H1675V404.52H1676V405.51H1677V407.36H1678V391.82H1679V404.07H1680V392.41H1681V397.65H1682V403.9H1683V403.54H1684V401.87H1685V396.08H1686V393.96H1687V377.25H1688V388.89H1689V378.59H1690V369.78H1691V370.23H1692V369.73H1693V367.93H1694V378.61H1695V388.48H1696V386.92H1697V358.62H1698V353.9H1699V356.88H1700V363.46H1701V378.11H1702V378.94H1703V349.67H1704V355.3H1705V376.91H1706V379.76H1707V357.18H1708V376.03H1709V376.79H1710V387.39H1711V393.63H1712V385.81H1713V389.97H1714V374.69H1715V382.81H1716V383.3H1717V389.34H1718V374.56H1719V383.37H1720V384.21H1721V378H1722V391H1723V384.13H1724V387.84H1725V399H1726V396.93H1727V396.74H1728V397.19H1729V393.29H1730V381.33H1731V381.54H1732V394.64H1733V377.48H1734V376.53H1735V390.18H1736V391.26H1737V379.29H1738V389.73H1739V379.24H1740V382.91H1741V398.73H1742V399.98H1743V388.97H1744V391.84H1745V395.59H1746V400.56H1747V398.85H1748V398.82H1749V405.83H1750V403.56H1751V396.67H1752V401.21H1753V403.88H1754V405.2H1755V411.98H1756V415.75H1757V417.42H1758V407.35H1759V406.07H1760V396.96H1761V405.92H1762V399.58H1763V393.37H1764V391.47H1765V388.86H1766V368.21H1767V379.17H1768V381.69H1769V375.75H1770V364.33H1771V369.83H1772V372.44H1773V380.86H1774V376.2H1775V375.27H1776V351.77H1777V355.43H1778V353.53H1779V381.98H1780V333.16H1781V384.16H1782V371.99H1783V375.1H1784V359.57H1785V360.32H1786V371.79H1787V373.67H1788V378.79H1789V378.39H1790V385.17H1791V401.28H1792V382.8H1793V388.21H1794V381.35H1795V382.44H1796V373.29H1797V383.49H1798V393.77H1799V362.76H1800V365.13H1801V392.31H1802V374.27H1803V388.16H1804V384.71H1805V385.4H1806V381.31H1807V394.56H1808V383.91H1809V382.83H1810V384.45H1811V383.44H1812V382.11H1813V385.88H1814V385.4H1815V370.46H1816V401.81H1817V403.22H1818V408.57H1819V387.91H1820V403.25H1821V405.09H1822V409.58H1823V402.11H1824V402.23H1825V412.53H1826V412.3H1827V415.56H1828V415.62H1829V415.14H1830V417.66H1831V411.76H1832V415.13H1833V412.93H1834V411.74H1835V412.08H1836V396.37H1837V373.56H1838V360.24H1839V361.03H1840V358.07H1841V370.06H1842V370.98H1843V345.14H1844V349.6H1845V329.8H1846V334.19H1847V353.44H1848V357.4H1849V368.8H1850V369.61H1851V364.8H1852V361.02H1853V367.54H1854V375.43H1855V350.06H1856V358.25H1857V362.36H1858V385.66H1859V369.5H1860V374.71H1861V354.99H1862V387.74H1863V371.88H1864V373.22H1865V404.02H1866V403.72H1867V396.8H1868V395.93H1869V392.69H1870V377.55H1871V378.35H1872V376.03H1873V374.84H1874V377.75H1875V377.48H1876V383.46H1877V385.14H1878V392.39H1879V395.13H1880V403.98H1881V406.04H1882V407.88H1883V410.77H1884V403.39H1885V402.29H1886V404H1887V404.94H1888V402.02H1889V400.58H1890V399.03H1891V396.7H1892V402.35H1893V399.33H1894V396H1895V394.14H1896V370.14H1897V375.15H1898V359.32H1899V362.92H1900V354.19H1901V354.9H1902V351.26H1903V348.2H1904V348.82H1905V354.44H1906V362.6H1907V372.77H1908V373.5H1909V375.85H1910V376.33H1911V378.16H1912V373.45H1913V377.94H1914V387.06H1915V376.51H1916V371.7H1917V374.33H1918V370.74H1919V381.01H1920V377.38H1921V378.7H1922V391.28H1923V402.22H1924V398.74H1925V383.05H1926V383.58H1927V390.43H1928V401.34H1929V406.13H1930V406.67H1931V395.41H1932V405.34H1933V405.89H1934V409.9H1935V411.82H1936V413.22H1937V400.67H1938V401.08H1939V399.44H1940V403.12H1941V399.8H1942V410.03H1943V401.1H1944V414.56H1945V415.3H1946V409.42H1947V411.07H1948V419.77H1949V409.71H1950V412.09H1951V418.56H1952V409.79H1953V418.6H1954V420.19H1955V421.18H1956V421.96H1957V422.52H1958V415.58H1959V417.37H1960V417.97H1961V419.35H1962V420.54H1963V422.11H1964V424.91H1965V424.63H1966V424.96H1967V425.06H1968V428.77H1969V427.25H1970V427.9H1971V426.72H1972V427.58H1973V428.13H1974V428.98H1975V429.78H1976V431.09H1977V431.62H1978V431.06H1979V430.24H1980V430.19H1981V430.38H1982V432.14H1983V432.41H1984V432.76H1985V433.13H1986V433.84H1987V434.18H1988V433.64H1989V434.27H1990V434.02H1991V434.04H1992V434.48H1993V434.22H1994V434.29H1995V434.58H1996V434.83H1997V434.49H1998V434.35H1999V434.22H2000V434.12H2001V434.59H2002V434.01H2003V434.23H2004V433.88H2005V433.75H2006V433.65H2007V433.04H2008V432.6H2009V432.04H2010V432.29H2011V429.46H2012V427.36H2013V430.37H2014V431.12H2015V428.16H2016V429.7H2017V426.59H2018V430.67H2019V431.12H2020V428.35H2021V429.22H2022V432.96H2023V433.19H2024V432.33H2025V433.49H2026V433.29H2027V432.92H2028V432.37H2029V431.18H2030V430.68H2031V432.83H2032V430.44H2033V429.97H2034V428.04H2035V431.69H2036V430.48H2037V431.01H2038V431.7H2039V432.38H2040V433.44H2041V432.98H2042V433.21H2043V433.9H2044V433.14H2045V431.64H2046V430.81H2047V429.02H2048V426.57H2049V428.07H2050V429.76H2051V430.67H2052V431.62H2053V432.31H2054V433.09H2055V434H2056V434.57H2057V434.89H2058V435H2059V435.08H2060V435.49H2061V435.47H2062V435.54H2063V435.26H2064V435.62H2065V435.46H2066V435.7H2067V435.72H2068V435.71H2069V435.64H2070V435.86H2071V435.93H2072V435.72H2073V435.86H2074V435.98H2075V436.12H2076V436.18H2077V436.24H2078V436.3H2079V436.33H2080V436.38H2081V436.44H2082V436.46H2083V436.49H2084V436.53H2085V436.48H2086V436.51H2087V436.56H2088V436.72H2089V436.67H2090V436.65H2091V436.69H2092V436.81H2093V436.84H2094V436.87H2095V436.88H2096V436.91H2097V436.94H2098V436.94H2099V437H2100V437.01H2101V436.99H2102V437H2103V437.04H2104V437.05H2105V437.03H2106V437.07H2107V437.06H2108V437.09H2109V437.07H2110V437.11H2111V437.13H2112V437.13H2113V437.13H2114V437.17H2115V437.18H2116V437.2H2117V437.18H2118V437.17H2119V437.2H2120V437.21H2121V437.2H2122V437.22H2123V437.25H2124V437.25H2125V437.25H2126V437.25H2127V437.24H2128V437.22H2129V437.25H2130V437.25H2131V437.25H2132V437.25H2133V437.25H2134V437.25H2135V437.25H2136V437.25H2137V437.25H2138V437.25H2139V437.24H2140V437.23H2141V437.24H2142V437.25H2143V437.25H2144V437.24H2145V437.23H2146V437.23H2147V437.23H2148V437.24H2149V437.25H2150V437.25H2151V437.25H2152V437.25H2153V437.25H2154V437.25H2155V437.24H2156V437.25H2157V437.25H2158V437.25H2159V437.25H2160V437.25H2161V437.24H2162V437.25H2163V437.25H2164V437.25H2165V437.25H2166V437.23H2167V437.23H2168V437.25H2169V437.23H2170V437.22H2171V437.25H2172V437.25H2173V437.25H2174V437.25H2175V437.24H2176V437.24H2177V437.24H2178V437.24H2179V437.23H2180V437.23H2181V437.25H2182V437.25H2183V437.24H2184V437.22H2185V437.25H2186V437.25H2187V437.25H2188V437.25H2189V437.23H2190V437.25H2191V437.25H2192V437.24H2193V437.24H2194V437.25H2195V437.24H2196V437.23H2197V437.23H2198V437.24H2199V437.25H2200V437.25H2201V437.23H2202V437.25H2203V437.25H2204V437.25H2205V437.22H2206V437.24H2207V437.6V437.95H2206V437.95H2205V437.96H2204V437.96H2203V437.96H2202V437.95H2201V437.97H2200V437.96H2199V437.95H2198V437.95H2197V437.95H2196V437.95H2195V437.95H2194V437.96H2193V437.97H2192V437.97H2191V437.95H2190V437.95H2189V437.96H2188V437.95H2187V437.95H2186V437.95H2185V437.95H2184V437.95H2183V437.95H2182V437.95H2181V437.95H2180V437.95H2179V437.97H2178V437.96H2177V437.97H2176V437.97H2175V437.96H2174V437.96H2173V437.95H2172V437.95H2171V437.95H2170V437.95H2169V437.97H2168V437.97H2167V437.96H2166V437.99H2165V437.99H2164V437.97H2163V437.95H2162V437.95H2161V437.95H2160V437.95H2159V437.95H2158V437.97H2157V437.97H2156V437.97H2155V437.95H2154V437.95H2153V437.95H2152V437.96H2151V437.95H2150V437.95H2149V437.97H2148V437.95H2147V437.97H2146V437.96H2145V437.95H2144V437.95H2143V437.95H2142V437.95H2141V437.99H2140V437.95H2139V437.95H2138V437.95H2137V437.98H2136V437.95H2135V437.95H2134V437.95H2133V437.97H2132V437.95H2131V437.95H2130V437.95H2129V437.95H2128V437.95H2127V437.95H2126V437.95H2125V437.96H2124V437.95H2123V437.99H2122V438H2121V437.97H2120V437.98H2119V438.03H2118V437.99H2117V438.01H2116V438.08H2115V438.08H2114V438.08H2113V438.09H2112V438.1H2111V438.15H2110V438.07H2109V438.08H2108V438.13H2107V438.13H2106V438.12H2105V438.12H2104V438.14H2103V438.22H2102V438.17H2101V438.25H2100V438.22H2099V438.23H2098V438.29H2097V438.3H2096V438.24H2095V438.32H2094V438.32H2093V438.37H2092V438.39H2091V438.48H2090V438.45H2089V438.55H2088V438.63H2087V438.6H2086V438.78H2085V438.65H2084V438.82H2083V438.87H2082V438.81H2081V438.84H2080V438.87H2079V439H2078V439.05H2077V439.1H2076V439.16H2075V439.17H2074V439.31H2073V439.13H2072V439.5H2071V439.29H2070V439.33H2069V439.39H2068V439.4H2067V439.45H2066V439.58H2065V439.85H2064V439.71H2063V439.97H2062V439.8H2061V440.02H2060V439.86H2059V439.9H2058V439.96H2057V440.54H2056V441.3H2055V442.1H2054V441.43H2053V442.21H2052V446.22H2051V445.92H2050V447.27H2049V445.32H2048V445H2047V444.5H2046V443.36H2045V442.97H2044V441.83H2043V442.6H2042V443.25H2041V445.58H2040V448.63H2039V446.41H2038V446.97H2037V448.65H2036V451.41H2035V451.89H2034V453.65H2033V452.06H2032V447.75H2031V446.84H2030V448.19H2029V446.91H2028V445.26H2027V442.39H2026V442.67H2025V444.71H2024V444.78H2023V445.81H2022V446.71H2021V445.53H2020V446.38H2019V446.97H2018V447.59H2017V450.38H2016V445.69H2015V445.28H2014V445.85H2013V444.19H2012V444.37H2011V442.84H2010V444.78H2009V443.03H2008V442.47H2007V441.58H2006V441.5H2005V441.65H2004V441.85H2003V442.1H2002V442.13H2001V442.33H2000V442.57H1999V442.65H1998V444.15H1997V444.54H1996V444.38H1995V441.75H1994V442.1H1993V442.4H1992V442.26H1991V442.11H1990V442.19H1989V442.01H1988V441.59H1987V441.72H1986V441.83H1985V442.66H1984V443.76H1983V444.58H1982V443.95H1981V444.62H1980V445.24H1979V443.99H1978V446.97H1977V447.66H1976V448.04H1975V447.29H1974V449.04H1973V448.26H1972V448.36H1971V449.49H1970V449.41H1969V450.6H1968V450.59H1967V446.19H1966V445.68H1965V446.7H1964V447.87H1963V453.53H1962V450.5H1961V451.45H1960V457.54H1959V458.15H1958V459.41H1957V459.76H1956V452.15H1955V457.7H1954V452.66H1953V451.35H1952V462.23H1951V461.83H1950V456.01H1949V458.89H1948V461.28H1947V464.91H1946V458.65H1945V458.43H1944V470.75H1943V470.68H1942V471.82H1941V473H1940V473.99H1939V455.42H1938V456.24H1937V458.16H1936V459.33H1935V459.94H1934V461.65H1933V470.77H1932V472.13H1931V472.7H1930V473.22H1929V482.61H1928V488.72H1927V473.11H1926V471.38H1925V471.6H1924V477.03H1923V476.96H1922V477.82H1921V480.03H1920V483.06H1919V483.4H1918V486.72H1917V491.96H1916V506.85H1915V512.62H1914V492.17H1913V495.01H1912V501.97H1911V500.27H1910V485.76H1909V478.49H1908V509.71H1907V484.18H1906V527.37H1905V528.33H1904V502.43H1903V501.49H1902V501.1H1901V485.05H1900V485.24H1899V502.24H1898V497.73H1897V511.08H1896V479.91H1895V489.68H1894V476.14H1893V469.68H1892V467.27H1891V471.12H1890V469.33H1889V468.42H1888V465.36H1887V466.97H1886V462.79H1885V474.55H1884V463.83H1883V466.36H1882V464.99H1881V465.93H1880V467.49H1879V468.49H1878V471.26H1877V474.48H1876V473.99H1875V476.61H1874V477.05H1873V477.52H1872V476.58H1871V477.99H1870V477.01H1869V478.85H1868V492.89H1867V471.93H1866V491.21H1865V488.63H1864V496.29H1863V500.64H1862V494.89H1861V496.14H1860V496.33H1859V517.97H1858V523.98H1857V529.48H1856V533.15H1855V557.26H1854V499.94H1853V509.59H1852V532.21H1851V490.87H1850V492.11H1849V493.93H1848V495.99H1847V514.62H1846V511.34H1845V510.95H1844V508.7H1843V509.29H1842V498.65H1841V488.81H1840V487.72H1839V510.62H1838V498.86H1837V483.77H1836V464.69H1835V465.3H1834V458.2H1833V472.35H1832V462.14H1831V456.57H1830V457.14H1829V461.36H1828V463.05H1827V467.72H1826V465.09H1825V461.44H1824V470.72H1823V465.88H1822V467.74H1821V470.74H1820V462.38H1819V458.38H1818V459.28H1817V461.21H1816V461.33H1815V483.23H1814V470.11H1813V471.46H1812V477.63H1811V477.83H1810V470.25H1809V471.55H1808V466.15H1807V487.41H1806V469.07H1805V485.3H1804V480.6H1803V483.75H1802V466.93H1801V466.6H1800V475.09H1799V476.93H1798V478.66H1797V485.16H1796V486.48H1795V486.91H1794V470.76H1793V485.07H1792V489.15H1791V492.21H1790V486.68H1789V489.58H1788V493.88H1787V494.22H1786V486.9H1785V480.84H1784V500.99H1783V504.31H1782V483.35H1781V487H1780V524.42H1779V523.45H1778V493.26H1777V489.42H1776V514.19H1775V500.34H1774V497.99H1773V497.96H1772V501.13H1771V503.07H1770V507.83H1769V506.88H1768V502.46H1767V478.97H1766V471.81H1765V468.85H1764V467.31H1763V462.18H1762V487.1H1761V484.2H1760V478.41H1759V458.51H1758V460.09H1757V462.31H1756V455.22H1755V452.91H1754V463.15H1753V457.25H1752V471.24H1751V474.14H1750V463.51H1749V463.22H1748V467.31H1747V467.71H1746V480.65H1745V481.66H1744V481.1H1743V481.83H1742V468.98H1741V477.35H1740V483.75H1739V477.21H1738V474.61H1737V491.66H1736V492.26H1735V472.86H1734V478.07H1733V478.75H1732V486.86H1731V495.23H1730V487.19H1729V477.82H1728V496.8H1727V475.97H1726V485.42H1725V479.44H1724V495.14H1723V493.99H1722V494.76H1721V502.43H1720V503.9H1719V492.04H1718V486.34H1717V489H1716V490.16H1715V490.36H1714V490.99H1713V513.49H1712V508.02H1711V511.21H1710V500.06H1709V509.26H1708V501.14H1707V504.58H1706V503.25H1705V512.92H1704V484.27H1703V521.74H1702V493.69H1701V492.16H1700V503.69H1699V498.72H1698V483.13H1697V491.47H1696V487.09H1695V462.63H1694V464.7H1693V465.07H1692V487.79H1691V474.5H1690V487.24H1689V490.55H1688V471.04H1687V476.43H1686V467.35H1685V484.5H1684V476.35H1683V480.63H1682V469.37H1681V473.06H1680V479.94H1679V469.49H1678V472.4H1677V478.74H1676V462.55H1675V472.23H1674V473.09H1673V475.41H1672V464.57H1671V466.65H1670V468.76H1669V473.41H1668V474.85H1667V475.84H1666V475.06H1665V484.49H1664V472.57H1663V474.97H1662V485.58H1661V528.43H1660V503.79H1659V513.94H1658V519.54H1657V513.59H1656V515.74H1655V522.37H1654V519.88H1653V517.06H1652V513.02H1651V510.26H1650V495.65H1649V498.76H1648V498.27H1647V497.49H1646V472.4H1645V493.53H1644V493.43H1643V495.38H1642V491.98H1641V497.6H1640V520.67H1639V503.84H1638V511.3H1637V518.68H1636V502.73H1635V506.94H1634V528.84H1633V529.71H1632V499.04H1631V535.23H1630V502.94H1629V498.89H1628V515.18H1627V489.06H1626V484.75H1625V482.25H1624V494.12H1623V482.14H1622V483.32H1621V479.9H1620V467.95H1619V479.9H1618V470.47H1617V483.33H1616V477.81H1615V480.03H1614V474.9H1613V475.64H1612V475.58H1611V483.8H1610V485.13H1609V472.93H1608V473.99H1607V481.35H1606V478.19H1605V477.28H1604V485.01H1603V483.17H1602V474.23H1601V473.44H1600V472.35H1599V470.38H1598V476.44H1597V467.06H1596V471.8H1595V462.76H1594V480.1H1593V472.39H1592V491.6H1591V473.18H1590V468.44H1589V490.89H1588V493.06H1587V483.7H1586V477.2H1585V477.31H1584V466.59H1583V480.94H1582V486.3H1581V488.24H1580V491.05H1579V492.15H1578V485.2H1577V489.7H1576V467.63H1575V490.78H1574V496.57H1573V503.22H1572V508.4H1571V513.47H1570V495.5H1569V519.24H1568V508.29H1567V516.08H1566V521.53H1565V536.13H1564V534.58H1563V503.31H1562V499.39H1561V507.24H1560V511.98H1559V523.08H1558V528.43H1557V532.47H1556V501.72H1555V502.67H1554V509.32H1553V499.31H1552V495.79H1551V484.82H1550V483.49H1549V517.52H1548V496.29H1547V478.39H1546V476.26H1545V476.92H1544V488.41H1543V484.85H1542V474.69H1541V473.38H1540V473.98H1539V474.06H1538V471.55H1537V467.52H1536V467.22H1535V471.01H1534V469.31H1533V459.47H1532V462.83H1531V462.95H1530V463.06H1529V463.53H1528V483.93H1527V465.91H1526V466.14H1525V485.47H1524V487.59H1523V466.04H1522V479.89H1521V466.88H1520V467.4H1519V476.69H1518V477.01H1517V479.54H1516V482.13H1515V481.56H1514V481.65H1513V487.05H1512V470.7H1511V472.03H1510V485.28H1509V474.26H1508V485.87H1507V487.11H1506V487.42H1505V497.84H1504V502.03H1503V496.81H1502V506.1H1501V506.26H1500V507.78H1499V514.59H1498V505.68H1497V502.38H1496V499.21H1495V501.36H1494V505.04H1493V504.13H1492V492.18H1491V491.96H1490V491.96H1489V518.51H1488V518.88H1487V485.38H1486V485.81H1485V484.03H1484V490.82H1483V498.73H1482V480.27H1481V496.79H1480V490.69H1479V482.19H1478V473.97H1477V471.46H1476V461.85H1475V465.65H1474V466.39H1473V465.33H1472V465.49H1471V475.91H1470V471.41H1469V470.66H1468V463.43H1467V461.54H1466V465.68H1465V469.7H1464V471.42H1463V480.75H1462V478.2H1461V484.29H1460V473.05H1459V482.92H1458V468.85H1457V470.93H1456V474.34H1455V476.61H1454V481.41H1453V485.18H1452V483.36H1451V485.77H1450V496.73H1449V483.37H1448V480.11H1447V483.92H1446V484.67H1445V489.68H1444V515.38H1443V520.98H1442V492.23H1441V538.96H1440V524.72H1439V528.4H1438V505.54H1437V502.26H1436V501.48H1435V494.26H1434V493.49H1433V511.18H1432V512.82H1431V492.59H1430V495.61H1429V501.61H1428V490.43H1427V484.9H1426V517.11H1425V516.64H1424V498.41H1423V501.12H1422V500.38H1421V489.67H1420V511.93H1419V496.4H1418V521.9H1417V509.33H1416V492.2H1415V521.59H1414V527.46H1413V501.55H1412V525.05H1411V516.53H1410V497.31H1409V486.47H1408V478.32H1407V471.25H1406V463.54H1405V464.04H1404V476.4H1403V463.97H1402V461.08H1401V461.45H1400V470.37H1399V472.52H1398V467.11H1397V469.85H1396V473.14H1395V476.17H1394V481.52H1393V474.07H1392V474.78H1391V476.77H1390V468.03H1389V467.45H1388V469.44H1387V469.4H1386V470.65H1385V491.36H1384V493.11H1383V475.23H1382V477.06H1381V483.33H1380V486.16H1379V471.19H1378V472.3H1377V484.84H1376V484.76H1375V485.4H1374V485.75H1373V486.95H1372V467.27H1371V473.71H1370V474.94H1369V478.48H1368V478.6H1367V464.78H1366V486.63H1365V477.86H1364V489.31H1363V474.08H1362V480.98H1361V492.58H1360V495.16H1359V503.6H1358V482.72H1357V485.51H1356V502.46H1355V504.96H1354V513.83H1353V513.41H1352V508.26H1351V493.79H1350V480.38H1349V497.97H1348V500.44H1347V501.18H1346V505.55H1345V510.29H1344V505.19H1343V528.42H1342V527.59H1341V486.13H1340V499.9H1339V478.76H1338V468.71H1337V463.34H1336V457.4H1335V457.44H1334V468.61H1333V457.33H1332V471.46H1331V462.88H1330V471.98H1329V471.03H1328V470.73H1327V467.54H1326V458.94H1325V465.2H1324V457.48H1323V458.27H1322V459.12H1321V458.79H1320V466.38H1319V465.05H1318V466.33H1317V467.75H1316V467.97H1315V471.12H1314V474.3H1313V475.29H1312V463.47H1311V465.89H1310V470.06H1309V487.31H1308V493.17H1307V483.39H1306V499.29H1305V486.27H1304V489.52H1303V468.94H1302V474.84H1301V474.56H1300V471.12H1299V476.02H1298V476H1297V475.15H1296V476.28H1295V470.38H1294V471.79H1293V478.64H1292V485.28H1291V490.86H1290V488.72H1289V490.74H1288V491.13H1287V488.79H1286V482.08H1285V484.27H1284V483.34H1283V491.1H1282V492.49H1281V475.29H1280V477.36H1279V486.27H1278V503.09H1277V492.26H1276V497.25H1275V495.8H1274V500.37H1273V481.37H1272V482.59H1271V494.54H1270V492.1H1269V487.9H1268V478.77H1267V462.33H1266V453.12H1265V453.84H1264V455.85H1263V456.66H1262V449.84H1261V456.12H1260V456.9H1259V457.4H1258V457.18H1257V450.55H1256V451.3H1255V451.68H1254V452.73H1253V460.17H1252V469.8H1251V467.02H1250V457.92H1249V470.76H1248V470.87H1247V458.09H1246V463.35H1245V464.78H1244V465.84H1243V472.41H1242V472.93H1241V471H1240V477.81H1239V479.63H1238V476.53H1237V486.6H1236V479.14H1235V482.45H1234V483.4H1233V486.69H1232V487.16H1231V483.34H1230V477.4H1229V478.62H1228V490.12H1227V488.01H1226V486.49H1225V489.12H1224V483H1223V485.14H1222V478.63H1221V470.74H1220V481.76H1219V481.4H1218V491.87H1217V491.06H1216V471.56H1215V472.52H1214V488.53H1213V499.06H1212V487.32H1211V487.47H1210V490.22H1209V485.52H1208V497.77H1207V496.29H1206V514.5H1205V518.76H1204V494.31H1203V493.45H1202V493.45H1201V485.56H1200V491.47H1199V488.08H1198V486.92H1197V467.81H1196V453.92H1195V451.01H1194V453.46H1193V454.71H1192V457.84H1191V457.3H1190V452.71H1189V462.12H1188V466.27H1187V468.22H1186V459.98H1185V461.8H1184V463.97H1183V461.08H1182V470.48H1181V477.09H1180V477.42H1179V476.44H1178V465.58H1177V469.66H1176V472.9H1175V488.82H1174V490.58H1173V476.2H1172V491.46H1171V487.2H1170V477.76H1169V494.56H1168V494.69H1167V481.67H1166V479.66H1165V478.34H1164V477.54H1163V475.71H1162V476.84H1161V466.13H1160V479.4H1159V475.6H1158V477.99H1157V480.81H1156V482.55H1155V483.41H1154V486.92H1153V477.19H1152V480.55H1151V472.32H1150V487.01H1149V487H1148V482.33H1147V481.89H1146V489.67H1145V484.99H1144V487.8H1143V489.29H1142V487.04H1141V476.47H1140V477.78H1139V494.28H1138V495.6H1137V506.08H1136V493.17H1135V511.11H1134V518.33H1133V523.61H1132V532.16H1131V489.16H1130V512.04H1129V483.25H1128V478.42H1127V475.65H1126V468.17H1125V458.67H1124V451.07H1123V453.36H1122V455.22H1121V452.23H1120V461.4H1119V463.09H1118V459.09H1117V457.35H1116V458.14H1115V457.27H1114V459.28H1113V458.17H1112V465.73H1111V467.3H1110V464.2H1109V462.71H1108V472.07H1107V469.43H1106V471.2H1105V478.04H1104V474.93H1103V472.95H1102V466.88H1101V467.8H1100V468.5H1099V473.42H1098V474.83H1097V484.02H1096V470.79H1095V482.66H1094V471.54H1093V483.96H1092V476.26H1091V468.85H1090V470H1089V485.29H1088V493.27H1087V480.36H1086V493.2H1085V492.94H1084V484.54H1083V475.07H1082V481.35H1081V488.52H1080V473.23H1079V475.08H1078V466.66H1077V483.31H1076V474.63H1075V475.2H1074V488.71H1073V491.02H1072V494.71H1071V498.31H1070V501.82H1069V500.69H1068V499.26H1067V485.39H1066V480.23H1065V479.15H1064V497.18H1063V497.31H1062V493.37H1061V492.63H1060V487.76H1059V474.02H1058V485.85H1057V482.78H1056V478.12H1055V462.1H1054V454.54H1053V456.27H1052V450.62H1051V451.01H1050V451.98H1049V453.87H1048V453.56H1047V457.79H1046V457.57H1045V454.4H1044V457.38H1043V448.75H1042V449.11H1041V456.51H1040V457.33H1039V457.54H1038V453.28H1037V454.08H1036V456.08H1035V457.67H1034V463.43H1033V456.75H1032V462.04H1031V464.45H1030V466.95H1029V468.46H1028V470.18H1027V468.58H1026V468.8H1025V469.73H1024V470.25H1023V467.44H1022V462.25H1021V468.95H1020V474.84H1019V476.02H1018V466.76H1017V476.65H1016V477.11H1015V467.76H1014V476.68H1013V469.33H1012V481.64H1011V467.87H1010V471.98H1009V467.86H1008V479.23H1007V479.11H1006V491.17H1005V490.25H1004V491.32H1003V496.2H1002V497.42H1001V497.02H1000V491.2H999V477.76H998V485.04H997V478.91H996V497.74H995V501.14H994V501.07H993V491.8H992V488.71H991V489.87H990V493H989V489.02H988V492.67H987V490.47H986V468.47H985V464.24H984V465.06H983V459.32H982V452.82H981V454.35H980V455.69H979V452.75H978V460.46H977V456.05H976V456.38H975V463.02H974V464.79H973V467.89H972V465.34H971V466.4H970V465.44H969V471.6H968V458.14H967V467.59H966V469.39H965V461.18H964V462.77H963V461.79H962V462.55H961V468.08H960V475.25H959V475.86H958V471.72H957V475.43H956V478.11H955V479.51H954V479.21H953V481.09H952V483.63H951V483.77H950V478.33H949V492.82H948V490.74H947V492.91H946V489.18H945V485.44H944V495.66H943V496.17H942V498.11H941V493.88H940V493.54H939V494.29H938V478.27H937V471.65H936V470.45H935V474.03H934V465.44H933V480.11H932V481.12H931V484.82H930V490.42H929V482.26H928V486.14H927V484.56H926V486.97H925V486.85H924V486.22H923V473.24H922V482.94H921V481.74H920V485.92H919V484.51H918V484.81H917V484.86H916V465.77H915V478.58H914V476.23H913V466.79H912V472.09H911V468.05H910V463.73H909V459.68H908V454.03H907V451.56H906V457.06H905V460.19H904V463.51H903V470.04H902V469.95H901V473.65H900V465.78H899V461.54H898V464.57H897V463.07H896V461.81H895V467.32H894V468.13H893V461.7H892V466.9H891V469.83H890V469.94H889V462.93H888V465.52H887V467.62H886V469.4H885V474.8H884V490.52H883V494.03H882V499.67H881V492.12H880V480.62H879V493.19H878V491.23H877V491.07H876V488.62H875V488.51H874V487.27H873V482.7H872V478.78H871V464.9H870V482.34H869V490.8H868V463.61H867V473.74H866V483.73H865V481.6H864V467.15H863V478.69H862V483.07H861V482.57H860V471.36H859V473.98H858V475.72H857V491.89H856V475.8H855V491.43H854V491.54H853V492.28H852V493.16H851V490.3H850V473.3H849V493.95H848V472.81H847V476.48H846V474.01H845V486.21H844V484.25H843V466.16H842V465.88H841V458.65H840V447.61H839V452.86H838V448.98H837V450.21H836V451.24H835V452.87H834V454.56H833V454.89H832V458.99H831V456.31H830V453.98H829V457.9H828V463.53H827V464.09H826V466.45H825V466.43H824V462.34H823V469.28H822V474.81H821V474.64H820V467.79H819V460.52H818V469.04H817V470.33H816V468.77H815V465.33H814V471.65H813V471H812V471.71H811V469.37H810V471.6H809V478.42H808V465.08H807V464.62H806V462.83H805V462.69H804V462.19H803V478.12H802V477.4H801V478.91H800V478.21H799V479.1H798V484.52H797V478.2H796V483.35H795V485.44H794V487.73H793V492.64H792V493.93H791V497.79H790V497.92H789V491.9H788V482.9H787V506.02H786V491.13H785V492.13H784V488.79H783V482.48H782V478.2H781V481.92H780V470.31H779V462.6H778V461.11H777V453.4H776V461.22H775V463.37H774V468H773V471.43H772V475.01H771V480.63H770V479.17H769V473.47H768V465.21H767V474.88H766V464.68H765V477.66H764V479.88H763V479.18H762V479.77H761V480.42H760V487.41H759V485H758V476.97H757V475.8H756V483.74H755V483.4H754V467.42H753V475.82H752V479.37H751V478.56H750V481.47H749V482.95H748V486.19H747V487.55H746V475.34H745V476.82H744V469.81H743V477.2H742V475.76H741V482.56H740V473.22H739V474.03H738V468.33H737V473.37H736V472.94H735V461.24H734V457.23H733V447.71H732V448.42H731V452.84H730V454.59H729V453.06H728V451.19H727V451.85H726V452.17H725V458.77H724V455.03H723V456.06H722V460.05H721V457.53H720V456.16H719V454.41H718V455.81H717V453.59H716V457.43H715V462.95H714V462.53H713V452.7H712V453.61H711V454.06H710V453.91H709V455.56H708V457.21H707V457.79H706V458.82H705V459.67H704V458.99H703V459.36H702V458.6H701V458.15H700V458.1H699V459H698V459.96H697V453.65H696V464.91H695V453.08H694V458.2H693V454.45H692V454.97H691V458.28H690V459.65H689V460.96H688V464.09H687V460.25H686V460.31H685V465.18H684V466.88H683V467.44H682V469.97H681V471.62H680V471.02H679V463.46H678V473.03H677V475.82H676V465.63H675V466.49H674V467.55H673V469.19H672V484.74H671V468.09H670V470.46H669V473.08H668V493.74H667V494.71H666V483.19H665V476.15H664V465.3H663V457.67H662V451.59H661V452.23H660V450.29H659V456.41H658V463.14H657V463.61H656V455.49H655V453.22H654V455.58H653V455.23H652V460.11H651V461.35H650V457.07H649V459.02H648V471.47H647V471.18H646V476.04H645V481.93H644V484.88H643V479.23H642V467.92H641V470.97H640V485.51H639V485.47H638V479.93H637V479.16H636V477.27H635V478.38H634V469.32H633V473.65H632V480.49H631V471.41H630V463.44H629V462.92H628V464.27H627V463.24H626V461.98H625V457.98H624V458.92H623V459.36H622V457.76H621V457.4H620V458.39H619V461.51H618V459.99H617V461.63H616V460.15H615V459.67H614V460.08H613V463.97H612V457.43H611V463.65H610V466.17H609V472.35H608V473.15H607V465.91H606V467.45H605V474.52H604V468.35H603V469.35H602V468.34H601V489.32H600V466.26H599V467.56H598V470.68H597V481.67H596V489.27H595V479.3H594V469.49H593V462.71H592V457.95H591V458.39H590V454.2H589V456.99H588V457.16H587V457.4H586V460.02H585V454.59H584V460.44H583V456.91H582V457.75H581V457.51H580V459.38H579V455.16H578V459.19H577V452.58H576V453.17H575V460.65H574V454.06H573V453.99H572V452.26H571V453.16H570V450.4H569V450.19H568V450.49H567V454.42H566V451.32H565V453.14H564V454.21H563V451.7H562V450.88H561V456.05H560V453.27H559V448.76H558V451.63H557V450.78H556V451.13H555V451.58H554V452.61H553V449.84H552V454.09H551V453.36H550V454.37H549V452.72H548V455.09H547V454.78H546V453.99H545V450.76H544V452.28H543V453.49H542V457.43H541V457.85H540V456.73H539V459.35H538V461.43H537V461.95H536V457.92H535V467.54H534V469.01H533V460.33H532V467.52H531V464.93H530V468.56H529V473.01H528V481.87H527V463.75H526V463.29H525V474H524V473.95H523V456.33H522V462.47H521V461.71H520V452.48H519V460.52H518V460.55H517V461.06H516V461.38H515V455.56H514V460.87H513V456.32H512V466.93H511V465.18H510V467.54H509V465.55H508V461.71H507V454.97H506V465.29H505V468.49H504V467.6H503V468.6H502V455.25H501V461.2H500V461.01H499V466.02H498V472.54H497V472.28H496V459.12H495V459.93H494V472.7H493V474.58H492V475.65H491V466.28H490V467.75H489V476.33H488V462.1H487V463.64H486V467.21H485V467.33H484V478.49H483V476.13H482V463.47H481V463.05H480V477.99H479V473.02H478V460.32H477V463.96H476V455.01H475V454.43H474V453.41H473V455.1H472V461.09H471V455.72H470V459.1H469V464.87H468V465.8H467V467.34H466V469.24H465V456.6H464V457.66H463V458.24H462V460.82H461V463.3H460V464.93H459V475.31H458V475.1H457V472.24H456V485.38H455V465.91H454V480.29H453V464.01H452V465.3H451V463.2H450V461.38H449V458.55H448V463.13H447V459.71H446V460.86H445V459.54H444V457.06H443V455H442V460.29H441V459.67H440V453.53H439V455.79H438V456.88H437V451.62H436V450.57H435V449.25H434V448.66H433V447.78H432V448.64H431V445.31H430V445.24H429V447.17H428V451.08H427V447.78H426V448.2H425V448.92H424V447.85H423V447.98H422V449.73H421V449.9H420V450.13H419V450.8H418V452.61H417V453.99H416V455.35H415V458.19H414V455.62H413V454.8H412V453.44H411V454.99H410V455.26H409V451.35H408V456.64H407V452.7H406V453.88H405V451.89H404V456.19H403V453.35H402V453.38H401V458.6H400V461.21H399V450.96H398V451.38H397V462.8H396V461.24H395V466.85H394V457.41H393V464.49H392V465.47H391V465.56H390V474.9H389V465.24H388V473.59H387V465.02H386V471.66H385V478.11H384V472.68H383V485.34H382V484.27H381V473.68H380V461.17H379V468.03H378V465.55H377V462.74H376V464.39H375V454.35H374V452.97H373V457.89H372V458.79H371V457.68H370V456.45H369V458.22H368V454.6H367V459.68H366V457.76H365V459.3H364V457.83H363V447.03H362V450.56H361V453.01H360V455.34H359V466.76H358V468.55H357V466.08H356V470.3H355V460.08H354V458.36H353V460.5H352V457.52H351V454.27H350V450.74H349V449.51H348V449.28H347V450.06H346V450.98H345V451.2H344V454.69H343V456.65H342V456.91H341V456.97H340V457.34H339V457.91H338V449.64H337V455.67H336V459.47H335V459.65H334V452.86H333V456.12H332V459.67H331V457.31H330V459.27H329V461.81H328V463.12H327V466.82H326V472.32H325V466.41H324V466.15H323V468.42H322V468.58H321V469.46H320V468.3H319V462.31H318V469.59H317V473.93H316V464.91H315V465.38H314V464.96H313V468.5H312V467.59H311V476.48H310V468.4H309V469.55H308V461.26H307V459.4H306V460.06H305V472.4H304V471.27H303V472.41H302V460.88H301V458.31H300V458.24H299V461.13H298V460.98H297V460.74H296V460.31H295V458.02H294V461.97H293V454.69H292V449.69H291V453.69H290V450.61H289V448.91H288V449.54H287V448.07H286V448.49H285V449.41H284V449.53H283V449.02H282V447.27H281V447.28H280V448.28H279V449.1H278V451.84H277V450.15H276V454.39H275V450.46H274V449.44H273V457.3H272V451.55H271V457.03H270V456.91H269V453.67H268V454.81H267V451.61H266V452.38H265V452.45H264V456.35H263V461.97H262V461.91H261V454.66H260V453.77H259V460.47H258V461.42H257V456.27H256V461.07H255V463.13H254V460.84H253V460.77H252V460.79H251V467.53H250V466.77H249V468.52H248V472.53H247V476.3H246V478.35H245V480.23H244V485.92H243V471.45H242V492.3H241V476.24H240V473.77H239V460.47H238V448.12H237V448.8H236V449.08H235V449.53H234V452.11H233V452.71H232V454.52H231V454.81H230V449.52H229V449.8H228V456.82H227V457.46H226V449.27H225V455.03H224V458.35H223V449.55H222V460.23H221V459.1H220V458.09H219V454.55H218V448.23H217V448.21H216V448.48H215V450.9H214V452.53H213Z" fill="#ffd966" clip-path="url(#c1)"/>
<path d="M213,679.4V667.53H214V667.77H215V669.58H216V663.03H217V664.2H218V664.91H219V661.1H220V667.09H221V665.53H222V667.11H223V664.85H224V667.81H225V665.8H226V669.22H227V669.58H228V669.76H229V668.79H230V665.3H231V666.65H232V666.23H233V668.23H234V668.75H235V661.29H236V656.96H237V651.73H238V658.13H239V648.91H240V644.17H241V654.94H242V652.78H243V651.94H244V650.79H245V634.36H246V637.99H247V645.71H248V637.88H249V642.47H250V643.38H251V641.28H252V634.08H253V643.04H254V643.38H255V645.14H256V643H257V647.69H258V650.01H259V647.45H260V648.93H261V650.18H262V650.28H263V657.51H264V656.22H265V652.75H266V657.29H267V659.1H268V657.19H269V657.61H270V662.76H271V657.9H272V659.22H273V659.21H274V658.47H275V659.08H276V664.9H277V658.61H278V656.2H279V655.68H280V654.03H281V652.57H282V658.17H283V656.63H284V651.58H285V647.97H286V647.86H287V658.2H288V659.81H289V664.47H290V653.47H291V657.98H292V656.41H293V660.24H294V662.28H295V655.2H296V653.7H297V662H298V662.73H299V663.32H300V659.35H301V647.54H302V645.29H303V643.45H304V643.29H305V648.48H306V624.46H307V630.25H308V647.22H309V639.1H310V638.08H311V637.11H312V649.17H313V625.04H314V636.69H315V636.5H316V648.16H317V649.86H318V647.01H319V636.45H320V652.22H321V653.42H322V652.1H323V638.57H324V640.01H325V647.05H326V642.63H327V650.08H328V630.78H329V624.95H330V623.21H331V619.01H332V612.74H333V614.91H334V631.52H335V644.89H336V639.55H337V640.35H338V645.47H339V649.44H340V650.61H341V659.16H342V654.7H343V658.93H344V657.96H345V662.37H346V663.26H347V664.84H348V654.98H349V664.16H350V660.22H351V659.4H352V659.65H353V659.07H354V647.5H355V656.06H356V656.12H357V656.64H358V658.72H359V659.85H360V660.46H361V656.86H362V654.78H363V648.86H364V657.88H365V649.5H366V646.74H367V644.94H368V641.19H369V643.51H370V639.94H371V640.46H372V643.21H373V653.72H374V651.5H375V650.31H376V649.65H377V647.72H378V648.98H379V648.15H380V635.21H381V642.42H382V631.45H383V641.59H384V635.49H385V633.6H386V646.55H387V648.59H388V638.83H389V639.15H390V632.56H391V637.85H392V641.51H393V635.16H394V647.82H395V651.44H396V643.76H397V656.87H398V645.74H399V636.61H400V641.2H401V649.64H402V648.68H403V647.44H404V654H405V635.39H406V652.17H407V645.58H408V650.13H409V654.91H410V657.8H411V658.46H412V657.6H413V657.51H414V654.26H415V657.5H416V656.34H417V655.36H418V656.02H419V656.71H420V657.25H421V656.47H422V654.38H423V646.27H424V646.28H425V647.14H426V644.87H427V653.88H428V657.67H429V648.1H430V655H431V653.56H432V648.16H433V646.11H434V651.8H435V658.79H436V658.89H437V659.7H438V644.5H439V645.95H440V646.54H441V647.22H442V647.88H443V651.76H444V659.82H445V660H446V659.88H447V655.72H448V652.93H449V633.7H450V634.57H451V634.56H452V631.55H453V637.17H454V617.88H455V637.7H456V630.09H457V629.74H458V617.99H459V640.29H460V644.22H461V645.94H462V637H463V637.34H464V640.44H465V642.71H466V653.48H467V643.56H468V653.16H469V648.21H470V651.79H471V650.43H472V652.92H473V656.73H474V658.82H475V658.64H476V653.87H477V641.68H478V646.38H479V638H480V628.37H481V632.99H482V624.42H483V624.21H484V626.16H485V626.2H486V622.45H487V637.44H488V623.04H489V626.92H490V635.1H491V627.99H492V630.12H493V633.63H494V637.82H495V626.55H496V638.61H497V640.59H498V640.48H499V643.1H500V640.69H501V630.67H502V647.99H503V644.53H504V632.83H505V642.56H506V642.85H507V641.49H508V646.09H509V644.09H510V641.11H511V645.87H512V651.05H513V654.44H514V654.42H515V652.1H516V660.5H517V661.2H518V649.5H519V653H520V651.6H521V652.26H522V650.43H523V640.8H524V637.48H525V634.55H526V617.17H527V613.17H528V598.1H529V613.93H530V619.75H531V627.05H532V627.76H533V645.99H534V639.86H535V650.76H536V638.7H537V649.75H538V650.9H539V652.97H540V654.88H541V646.54H542V652.55H543V648.16H544V650.1H545V646.16H546V646.73H547V648.12H548V653.55H549V650.33H550V660.53H551V658.18H552V656.49H553V654.84H554V658.24H555V662.58H556V661.25H557V662.4H558V662.35H559V663.38H560V660.43H561V665.1H562V659.67H563V661.59H564V663.92H565V663.14H566V663.12H567V653.82H568V656.28H569V650.84H570V650.75H571V644.86H572V643.37H573V659.19H574V659.29H575V653.42H576V658.18H577V657.88H578V650.22H579V646.29H580V646.83H581V646.21H582V646.92H583V653.89H584V653.77H585V653.45H586V647.18H587V651.56H588V653.8H589V655.55H590V657.13H591V639.84H592V641.52H593V646.95H594V638.27H595V633.69H596V633.35H597V640.78H598V630.17H599V630.15H600V636.11H601V631.26H602V623.59H603V623.21H604V623.36H605V645.28H606V645.95H607V628.12H608V618.4H609V623.28H610V638.1H611V640.24H612V644.39H613V658.15H614V659.66H615V660.48H616V659.93H617V646.53H618V643.98H619V650.82H620V649.56H621V649.4H622V639.32H623V629.23H624V636.69H625V631.85H626V622.72H627V623.76H628V606.51H629V634.66H630V633.26H631V634.16H632V599.79H633V599.17H634V635.89H635V623.92H636V628.85H637V627.45H638V645.28H639V638H640V643.55H641V634.35H642V627.92H643V632.54H644V638.15H645V647.08H646V648.2H647V643.02H648V639.2H649V641.68H650V649.08H651V637.85H652V640.1H653V642.63H654V643.39H655V646.25H656V652.53H657V640.1H658V639.16H659V643.41H660V650.58H661V652.03H662V649.4H663V651.64H664V645.75H665V646.53H666V643.52H667V634.08H668V633.21H669V636.61H670V646.43H671V651.9H672V631.14H673V645.01H674V634.05H675V631.93H676V632.24H677V642.6H678V635.86H679V640.47H680V633.01H681V637.56H682V641.39H683V649.72H684V647.95H685V639.38H686V626.68H687V641.34H688V628.67H689V629.97H690V643.09H691V630.47H692V637.29H693V638.66H694V654.56H695V649.17H696V646.4H697V648.47H698V644.45H699V643.59H700V653.45H701V646.51H702V645.47H703V649.36H704V646.75H705V647.79H706V647.13H707V647.14H708V647.37H709V645.27H710V646.4H711V645.87H712V644.32H713V646.04H714V651.03H715V651.67H716V653.62H717V653.5H718V646.45H719V648.63H720V649.58H721V660.38H722V658.74H723V649.92H724V655.53H725V659.85H726V660.76H727V656.48H728V655.18H729V657.28H730V657.08H731V661.86H732V657.05H733V662.19H734V656.83H735V652.32H736V619.17H737V626.52H738V623.49H739V629.67H740V632.37H741V634.09H742V637.19H743V644.97H744V644.92H745V644.72H746V644.27H747V645.18H748V629.96H749V623.14H750V625.76H751V625.74H752V611.88H753V624.62H754V624.09H755V630.17H756V630.39H757V631.52H758V620.22H759V620.54H760V620.86H761V624.03H762V626.48H763V641.39H764V626.81H765V626.28H766V630.71H767V634.45H768V633.64H769V635.91H770V652.13H771V632.94H772V630.82H773V641.58H774V624.64H775V623.28H776V634.2H777V637.37H778V637.64H779V635.25H780V635.78H781V606.77H782V620.35H783V602.27H784V616.29H785V613.26H786V634.93H787V637.77H788V613.81H789V619.17H790V629.37H791V641.91H792V640.04H793V635.6H794V647.09H795V642.94H796V638.24H797V640.1H798V638.66H799V652.48H800V653.3H801V649.54H802V650.43H803V642.17H804V641.23H805V639.21H806V646.19H807V631.45H808V630.47H809V631H810V641.48H811V641.14H812V641.91H813V645.2H814V647.13H815V642.91H816V643.91H817V635.85H818V638.4H819V648.77H820V641.76H821V650.48H822V653.24H823V654.72H824V656.11H825V658.42H826V658.78H827V651.83H828V658.71H829V657.61H830V659.16H831V663.53H832V653.25H833V662.65H834V662.81H835V663.16H836V663.22H837V662.53H838V660.16H839V657.65H840V644.67H841V633.32H842V622.5H843V626.58H844V635.66H845V635.56H846V635.96H847V633.76H848V632.95H849V629.6H850V626.52H851V637.28H852V631.61H853V631.01H854V630.35H855V640.11H856V635.05H857V637.65H858V640.43H859V634.77H860V633.9H861V627.73H862V626.35H863V622.69H864V637.55H865V625.38H866V624.23H867V643.38H868V645.2H869V641.53H870V645.58H871V644.66H872V645.25H873V635.08H874V634.05H875V635.77H876V639.33H877V636.87H878V636.03H879V618.06H880V615.52H881V614.45H882V629.18H883V625.65H884V620.12H885V617.18H886V621.74H887V642.04H888V622.98H889V627.61H890V632.28H891V636.16H892V641.69H893V648.93H894V650.14H895V652.26H896V641.31H897V642.84H898V639.94H899V647.56H900V648.89H901V653.17H902V644.3H903V647.04H904V649.2H905V646.2H906V647.16H907V649.62H908V648.81H909V653.19H910V642.31H911V642.18H912V638.63H913V633.59H914V632.84H915V635.87H916V633.68H917V609.33H918V599.65H919V623.23H920V625.1H921V626.31H922V627.79H923V633.9H924V636.95H925V633.09H926V628.6H927V625.85H928V626.56H929V627.81H930V615.52H931V615.53H932V617.15H933V620.31H934V634.56H935V621.98H936V626.39H937V619.05H938V622.55H939V626.01H940V636.23H941V635.96H942V647.16H943V646.09H944V634.18H945V634.05H946V654.77H947V645.15H948V647.98H949V649.96H950V649.67H951V633.83H952V637.82H953V636.4H954V635.13H955V645.23H956V639.48H957V639.47H958V630.34H959V634.92H960V636.7H961V633.46H962V634.5H963V636.43H964V640.81H965V640.2H966V633.7H967V651.01H968V648.19H969V637.79H970V641.63H971V641.9H972V652.27H973V652.41H974V652.65H975V653.92H976V653.63H977V653.96H978V655.82H979V657.66H980V656.59H981V656.48H982V653.44H983V646.23H984V646.83H985V637.38H986V639.27H987V633.83H988V640.99H989V634.49H990V635.84H991V629.63H992V648.02H993V639.48H994V632.57H995V634.8H996V633.56H997V638.33H998V640.48H999V645.98H1000V645.34H1001V631.49H1002V626.31H1003V632.51H1004V635.59H1005V638.59H1006V627.91H1007V626.46H1008V628.74H1009V637.4H1010V638.01H1011V640.8H1012V638.84H1013V625.35H1014V627.72H1015V623.75H1016V632.86H1017V632.14H1018V629.71H1019V635.89H1020V645.21H1021V631.26H1022V633.52H1023V636.56H1024V638.08H1025V637.55H1026V637.06H1027V649.79H1028V651.68H1029V653.52H1030V654.95H1031V647.71H1032V654.34H1033V656.32H1034V647.64H1035V649.75H1036V645.87H1037V655.46H1038V658.64H1039V648.06H1040V649.95H1041V659.12H1042V660.29H1043V660.28H1044V660.21H1045V652.61H1046V652.85H1047V652.4H1048V657.78H1049V660.44H1050V657.49H1051V662.64H1052V654.91H1053V655.15H1054V646.95H1055V638.59H1056V630.58H1057V617.55H1058V619.85H1059V617.81H1060V620.4H1061V616.61H1062V616.88H1063V625.46H1064V628.3H1065V627.45H1066V615.11H1067V624.27H1068V615.35H1069V610.58H1070V624.08H1071V599.42H1072V622.77H1073V623.84H1074V625.36H1075V626.47H1076V627.39H1077V632.12H1078V632.88H1079V626.73H1080V629.31H1081V633.77H1082V641.92H1083V644.14H1084V626.68H1085V649.02H1086V634.65H1087V633.74H1088V634.04H1089V634.81H1090V642.18H1091V636.56H1092V642.51H1093V631.14H1094V632.88H1095V636.45H1096V643.55H1097V645.84H1098V646.58H1099V647.86H1100V642.09H1101V644.05H1102V645.25H1103V647.2H1104V654.64H1105V643.54H1106V646.17H1107V654.61H1108V648.5H1109V648.85H1110V649.46H1111V649.45H1112V649.21H1113V654.32H1114V655.94H1115V654.61H1116V652.6H1117V652.54H1118V653.45H1119V654.44H1120V656.56H1121V654.81H1122V651.13H1123V649.48H1124V644.49H1125V650.82H1126V648.24H1127V623.5H1128V625.34H1129V619.12H1130V627.98H1131V622.8H1132V619.02H1133V619.91H1134V614.21H1135V586.28H1136V628.06H1137V629.95H1138V633.91H1139V618.19H1140V607.17H1141V634.42H1142V628.96H1143V627.72H1144V631.38H1145V630.74H1146V635.85H1147V634.68H1148V633.33H1149V645.48H1150V646.99H1151V620.37H1152V619.2H1153V617.81H1154V627.7H1155V636.75H1156V636.79H1157V617.83H1158V645.22H1159V644.64H1160V645.77H1161V644.95H1162V649.86H1163V649.86H1164V638.63H1165V637.9H1166V636.89H1167V608.8H1168V627.78H1169V628.25H1170V629.94H1171V634.81H1172V617.23H1173V635.7H1174V626.21H1175V649.53H1176V640.09H1177V644.17H1178V645.32H1179V645.85H1180V646.58H1181V648.15H1182V647.39H1183V653.13H1184V653.65H1185V645.05H1186V646.64H1187V664.05H1188V654.43H1189V656.81H1190V658.65H1191V657.77H1192V658.34H1193V660.12H1194V655.36H1195V645.2H1196V621.5H1197V612.38H1198V628.49H1199V596.98H1200V591.69H1201V604.41H1202V596.33H1203V595.29H1204V597.78H1205V603.14H1206V610.67H1207V623.49H1208V635.31H1209V638.82H1210V641.74H1211V623.65H1212V624.06H1213V631.11H1214V600.21H1215V634.41H1216V618.97H1217V621.17H1218V623.04H1219V623.37H1220V623.7H1221V627.12H1222V636.59H1223V641.97H1224V644.8H1225V635.01H1226V643.08H1227V646.77H1228V641.3H1229V637.55H1230V639.33H1231V633.24H1232V630.69H1233V625.32H1234V604.22H1235V601.13H1236V616.51H1237V623.3H1238V616.18H1239V620.88H1240V618.29H1241V630.11H1242V625.1H1243V637.39H1244V639H1245V650.98H1246V651.91H1247V653.53H1248V653.2H1249V654.2H1250V654.01H1251V643.62H1252V643.74H1253V646.61H1254V647.54H1255V651.59H1256V653.31H1257V661.28H1258V653.14H1259V656.23H1260V656.55H1261V660.84H1262V656.59H1263V656.23H1264V654.39H1265V653.9H1266V652.59H1267V656.57H1268V644.64H1269V636.87H1270V636.47H1271V629.33H1272V626.89H1273V627.37H1274V606.14H1275V599.97H1276V616.14H1277V618.27H1278V603.06H1279V626.92H1280V630.64H1281V629.47H1282V626.96H1283V609.46H1284V607.55H1285V606.63H1286V605.54H1287V623.65H1288V619.77H1289V622.94H1290V612.62H1291V632.84H1292V628.79H1293V618.66H1294V635.65H1295V632.73H1296V637.68H1297V639.95H1298V619.82H1299V632.39H1300V631.98H1301V628.51H1302V608.44H1303V606.49H1304V601.49H1305V606.29H1306V624.51H1307V626.69H1308V631.51H1309V636.46H1310V639.55H1311V640.21H1312V647.2H1313V637.34H1314V631.79H1315V629.08H1316V639.31H1317V621.53H1318V624.75H1319V623.36H1320V631.39H1321V632.22H1322V622.05H1323V622.02H1324V631.87H1325V633.95H1326V644.07H1327V634.82H1328V633.61H1329V635.53H1330V636.52H1331V656.72H1332V641.9H1333V652.29H1334V646.33H1335V631.37H1336V640.01H1337V640.06H1338V629.72H1339V603.38H1340V617.88H1341V612.45H1342V598.89H1343V596.31H1344V588.61H1345V584.59H1346V595.54H1347V574.68H1348V574.7H1349V583.36H1350V607.11H1351V609.93H1352V617.26H1353V621.81H1354V617.29H1355V621.12H1356V621.9H1357V619.61H1358V617.83H1359V621.01H1360V621.17H1361V596.94H1362V612.92H1363V608.89H1364V633.33H1365V613.3H1366V607.89H1367V608.59H1368V628.73H1369V627.17H1370V632.23H1371V633.26H1372V631.08H1373V638.25H1374V637.06H1375V635.55H1376V633.99H1377V630.74H1378V627.56H1379V641.3H1380V642.51H1381V642.56H1382V643.78H1383V632.74H1384V643.13H1385V633.76H1386V641.63H1387V634.64H1388V623.62H1389V645.13H1390V644.77H1391V643.86H1392V645.74H1393V646.71H1394V644.48H1395V642.39H1396V629.91H1397V631.16H1398V632.45H1399V635.05H1400V636.81H1401V638.67H1402V642.07H1403V645.21H1404V654.07H1405V637.68H1406V639.36H1407V614.12H1408V596.63H1409V610.5H1410V604.47H1411V611.21H1412V611.23H1413V609.5H1414V607.4H1415V580.62H1416V601.83H1417V606.09H1418V613.59H1419V626.2H1420V589.65H1421V619.82H1422V620.5H1423V624.05H1424V593.8H1425V634.37H1426V634.38H1427V603.84H1428V603.5H1429V608.36H1430V634.72H1431V616.31H1432V611.6H1433V622.61H1434V632.08H1435V633.57H1436V640.55H1437V617.97H1438V638.21H1439V637.47H1440V614.7H1441V621.63H1442V619.28H1443V627.24H1444V615.7H1445V616.07H1446V621.11H1447V619.04H1448V635.06H1449V610.25H1450V602.51H1451V604.54H1452V618.06H1453V621.69H1454V617.1H1455V629.68H1456V634.27H1457V625.98H1458V626.79H1459V619.09H1460V622.39H1461V621H1462V630.25H1463V628.44H1464V629.55H1465V642.7H1466V642.37H1467V624.39H1468V625.32H1469V642.48H1470V633.72H1471V635.93H1472V641.55H1473V613.71H1474V638.88H1475V635.66H1476V637.93H1477V620.37H1478V625.48H1479V626.42H1480V625.87H1481V623.83H1482V637.44H1483V635.98H1484V630.73H1485V607.89H1486V600.08H1487V598.01H1488V604.01H1489V601.4H1490V592.22H1491V596.24H1492V593.34H1493V573.45H1494V615.17H1495V618.27H1496V619.5H1497V628.94H1498V638.56H1499V611.83H1500V614.09H1501V620.3H1502V646.41H1503V620.79H1504V642.36H1505V640.8H1506V642.01H1507V642.73H1508V625.14H1509V644.55H1510V625.26H1511V622.49H1512V639.12H1513V627.01H1514V620.05H1515V620.5H1516V622.67H1517V622.77H1518V624.37H1519V621.83H1520V621.42H1521V623.53H1522V617.9H1523V637.72H1524V622.51H1525V634.21H1526V635.28H1527V637.4H1528V637.97H1529V637.73H1530V631.11H1531V629.69H1532V620.33H1533V632.56H1534V631.1H1535V633.18H1536V643.36H1537V634.25H1538V634.74H1539V633.26H1540V630.37H1541V627.29H1542V614.14H1543V609.63H1544V606.58H1545V628.73H1546V608.81H1547V629.21H1548V606.93H1549V606.82H1550V606.37H1551V589.74H1552V614.83H1553V557.71H1554V556.37H1555V575.95H1556V574.97H1557V607.81H1558V606.27H1559V623.17H1560V625.47H1561V585.35H1562V598.92H1563V616.67H1564V630.64H1565V632.04H1566V609.97H1567V610.62H1568V609.69H1569V597.78H1570V619.93H1571V635.48H1572V609.93H1573V612.74H1574V613.18H1575V621.58H1576V625.53H1577V625.73H1578V632.62H1579V634.28H1580V628.19H1581V624.65H1582V632.05H1583V630.75H1584V602.28H1585V607.57H1586V607.97H1587V599.07H1588V633.14H1589V603.13H1590V626.27H1591V619.51H1592V609.71H1593V628.09H1594V626.88H1595V632.12H1596V616.37H1597V611.22H1598V630.3H1599V635.53H1600V636.86H1601V632.48H1602V633.97H1603V647.88H1604V650.29H1605V631.19H1606V625.28H1607V634.54H1608V633.94H1609V632.13H1610V633.51H1611V628.29H1612V637.22H1613V632.67H1614V630.17H1615V629.16H1616V621.82H1617V623.64H1618V621.45H1619V627.03H1620V628.02H1621V610.11H1622V595.05H1623V628.54H1624V629.01H1625V624.62H1626V620.1H1627V591.32H1628V590.07H1629V576.41H1630V596.69H1631V570.68H1632V617.89H1633V587.48H1634V587.65H1635V618.73H1636V582.69H1637V586.26H1638V596.61H1639V593.23H1640V599.45H1641V617.31H1642V620.34H1643V623.2H1644V602.36H1645V603.8H1646V608.22H1647V613.36H1648V601.8H1649V610.04H1650V634.15H1651V614.95H1652V615.39H1653V614.38H1654V628.03H1655V620.2H1656V616.97H1657V611.76H1658V602.77H1659V594.6H1660V620.89H1661V621.78H1662V600.16H1663V600.97H1664V606.36H1665V609.4H1666V613.61H1667V618.64H1668V626.14H1669V630.79H1670V618.89H1671V616.81H1672V640.09H1673V636.78H1674V618.29H1675V616.43H1676V614.58H1677V637.54H1678V637.56H1679V625.35H1680V637.11H1681V629.17H1682V637.37H1683V627.99H1684V628.98H1685V618.75H1686V616.06H1687V615.65H1688V613.91H1689V606.25H1690V605.65H1691V612.89H1692V596.91H1693V595.81H1694V567.77H1695V568.55H1696V562.69H1697V553.37H1698V586.71H1699V587.82H1700V591.94H1701V600.34H1702V580.62H1703V588.58H1704V628.52H1705V595.53H1706V596.87H1707V614.7H1708V620.31H1709V624.34H1710V634.3H1711V617.89H1712V618.7H1713V609.11H1714V586.48H1715V584.03H1716V594.87H1717V582.88H1718V587.94H1719V608.73H1720V603.64H1721V605.63H1722V627.57H1723V617.85H1724V620.76H1725V622.79H1726V621.96H1727V613.8H1728V630.83H1729V630.86H1730V614.27H1731V613.78H1732V622.13H1733V594.65H1734V620.12H1735V598.93H1736V610.97H1737V607.17H1738V611.03H1739V629.14H1740V601.57H1741V637.43H1742V636.56H1743V638.88H1744V639.44H1745V620.96H1746V620.67H1747V627.25H1748V640.74H1749V632.56H1750V627.74H1751V629.53H1752V653.26H1753V653.09H1754V644.51H1755V650.15H1756V651.54H1757V650.81H1758V641.2H1759V651.79H1760V653.53H1761V648.84H1762V631.07H1763V617H1764V631.13H1765V605.07H1766V620.39H1767V631.61H1768V599.45H1769V632.6H1770V603.74H1771V586.99H1772V590.35H1773V593.34H1774V593.15H1775V566.23H1776V564.59H1777V615.49H1778V590.28H1779V588.42H1780V626.01H1781V614.67H1782V620.4H1783V624.59H1784V626.99H1785V624.91H1786V634.01H1787V613.65H1788V642.53H1789V622.19H1790V624.66H1791V629.8H1792V630.67H1793V619.76H1794V634.94H1795V620.07H1796V621.23H1797V642.76H1798V631.42H1799V628.76H1800V632.31H1801V619.59H1802V640.36H1803V628.2H1804V619.55H1805V619.11H1806V626.84H1807V626.54H1808V625.71H1809V639.32H1810V620.67H1811V636.28H1812V641.43H1813V641.59H1814V638.18H1815V642.42H1816V633.41H1817V635.28H1818V638.99H1819V648.44H1820V642.45H1821V645.06H1822V643.63H1823V626.07H1824V633.22H1825V634.03H1826V641.74H1827V642.71H1828V639.43H1829V628.72H1830V640.29H1831V640.73H1832V642.89H1833V640.91H1834V625.29H1835V644.06H1836V644.05H1837V624.44H1838V621.39H1839V621.49H1840V612.95H1841V621.92H1842V613.21H1843V611.64H1844V610.94H1845V604.14H1846V598.71H1847V614.98H1848V613.53H1849V612.81H1850V590.92H1851V585.66H1852V593.05H1853V599.07H1854V611.87H1855V616.01H1856V593.02H1857V606.18H1858V609.15H1859V609.13H1860V615.92H1861V612.73H1862V605.25H1863V606.64H1864V605.64H1865V607.83H1866V610.14H1867V599.17H1868V576.77H1869V576.6H1870V582.35H1871V611.06H1872V613.74H1873V635.06H1874V613.16H1875V643.48H1876V644.17H1877V643.8H1878V644.75H1879V644.56H1880V643.99H1881V628.8H1882V629.32H1883V625H1884V637.23H1885V629.73H1886V635H1887V645.59H1888V633.2H1889V631.69H1890V623.67H1891V623.09H1892V631.79H1893V621.58H1894V631.53H1895V628.16H1896V626.34H1897V606.52H1898V610.23H1899V611.22H1900V607.05H1901V623.55H1902V590.8H1903V589.32H1904V600.76H1905V606.86H1906V609.07H1907V609.1H1908V604.7H1909V599.47H1910V600.51H1911V599.97H1912V595.03H1913V594.5H1914V594.86H1915V600.13H1916V589.53H1917V594.62H1918V630.65H1919V617.2H1920V622.4H1921V641.51H1922V641.7H1923V618.06H1924V625.68H1925V626.91H1926V637.85H1927V640.67H1928V642.38H1929V639.34H1930V647.46H1931V644.87H1932V644.86H1933V643.15H1934V636.57H1935V639.82H1936V638.59H1937V637.5H1938V649.13H1939V650.34H1940V656.04H1941V648.51H1942V649.56H1943V648.98H1944V650.98H1945V653.15H1946V653.66H1947V645.52H1948V647.17H1949V651.15H1950V651.98H1951V659.73H1952V659.71H1953V649H1954V652.15H1955V662.6H1956V651.81H1957V660.29H1958V662.25H1959V660.72H1960V665.17H1961V664.81H1962V663.76H1963V662.57H1964V664.21H1965V668.05H1966V666.27H1967V666.38H1968V667.31H1969V665.78H1970V665.82H1971V667.95H1972V666.42H1973V666.67H1974V667.54H1975V668.49H1976V670.79H1977V670.88H1978V672.5H1979V673.45H1980V673.64H1981V670.22H1982V671.26H1983V672.15H1984V671.62H1985V671.41H1986V670.73H1987V673.52H1988V673.78H1989V673.01H1990V673.93H1991V674.25H1992V673.1H1993V673.07H1994V675.23H1995V672.31H1996V672.93H1997V674.96H1998V672.41H1999V673.02H2000V672.92H2001V673.15H2002V672.51H2003V671.8H2004V671.89H2005V674.02H2006V673.01H2007V670.13H2008V670.46H2009V670.62H2010V669.85H2011V669.34H2012V671.34H2013V665.53H2014V665.5H2015V660.71H2016V662.16H2017V662.93H2018V666.17H2019V668.92H2020V669.63H2021V671H2022V671.88H2023V670.47H2024V672.97H2025V674.83H2026V674.18H2027V674.62H2028V672.58H2029V672.42H2030V672.14H2031V671.82H2032V672.53H2033V670.92H2034V670.84H2035V670.67H2036V671.03H2037V671.08H2038V673.26H2039V673.57H2040V673.79H2041V673.05H2042V673H2043V672.53H2044V670.78H2045V670.62H2046V673.65H2047V670.61H2048V670.72H2049V673.1H2050V670.63H2051V674.6H2052V674.93H2053V674.36H2054V675.16H2055V675.22H2056V676.2H2057V676.58H2058V676.28H2059V676.57H2060V676.43H2061V676.5H2062V676.7H2063V676.75H2064V676.73H2065V676.85H2066V676.97H2067V677.05H2068V677.31H2069V677.36H2070V677.44H2071V677.46H2072V677.52H2073V677.64H2074V677.74H2075V677.66H2076V677.84H2077V677.75H2078V677.63H2079V677.84H2080V677.93H2081V677.81H2082V678H2083V677.85H2084V678.01H2085V677.97H2086V677.99H2087V677.84H2088V677.98H2089V677.97H2090V678.03H2091V678.05H2092V678.19H2093V678.08H2094V678.07H2095V678.08H2096V678.12H2097V678.14H2098V678.29H2099V678.3H2100V678.22H2101V678.23H2102V678.27H2103V678.27H2104V678.36H2105V678.4H2106V678.4H2107V678.43H2108V678.37H2109V678.38H2110V678.45H2111V678.52H2112V678.51H2113V678.47H2114V678.48H2115V678.62H2116V678.64H2117V678.62H2118V678.58H2119V678.55H2120V678.65H2121V678.67H2122V678.65H2123V678.67H2124V678.71H2125V678.71H2126V678.79H2127V678.76H2128V678.76H2129V678.71H2130V678.7H2131V678.72H2132V678.73H2133V678.8H2134V678.72H2135V678.69H2136V678.77H2137V678.74H2138V678.78H2139V678.75H2140V678.79H2141V678.8H2142V678.77H2143V678.84H2144V678.81H2145V678.78H2146V678.79H2147V678.78H2148V678.79H2149V678.79H2150V678.8H2151V678.82H2152V678.82H2153V678.84H2154V678.87H2155V678.88H2156V678.89H2157V678.84H2158V678.87H2159V678.89H2160V678.9H2161V678.9H2162V678.9H2163V678.85H2164V678.9H2165V678.88H2166V678.91H2167V678.88H2168V678.89H2169V678.94H2170V678.94H2171V678.94H2172V678.92H2173V678.9H2174V678.94H2175V678.95H2176V678.93H2177V678.96H2178V678.92H2179V678.92H2180V678.92H2181V678.91H2182V678.97H2183V678.99H2184V678.92H2185V678.96H2186V678.98H2187V678.98H2188V678.96H2189V678.95H2190V678.95H2191V679.02H2192V679.02H2193V679H2194V679H2195V679.04H2196V679.05H2197V679.01H2198V679.03H2199V679.04H2200V679.05H2201V679H2202V679.05H2203V679.01H2204V679.02H2205V679.02H2206V679.01H2207V679.4V679.75H2206V679.75H2205V679.77H2204V679.75H2203V679.77H2202V679.77H2201V679.77H2200V679.78H2199V679.75H2198V679.76H2197V679.76H2196V679.75H2195V679.75H2194V679.75H2193V679.75H2192V679.77H2191V679.78H2190V679.79H2189V679.79H2188V679.76H2187V679.76H2186V679.8H2185V679.79H2184V679.76H2183V679.76H2182V679.8H2181V679.79H2180V679.79H2179V679.78H2178V679.79H2177V679.79H2176V679.8H2175V679.86H2174V679.85H2173V679.83H2172V679.77H2171V679.77H2170V679.77H2169V679.78H2168V679.81H2167V679.8H2166V679.85H2165V679.85H2164V679.81H2163V679.86H2162V679.85H2161V679.87H2160V679.83H2159V679.85H2158V679.83H2157V679.85H2156V679.86H2155V679.87H2154V679.88H2153V679.9H2152V679.88H2151V679.85H2150V679.89H2149V679.87H2148V679.87H2147V679.91H2146V679.91H2145V679.9H2144V679.84H2143V679.85H2142V679.86H2141V679.88H2140V679.89H2139V679.87H2138V679.92H2137V679.87H2136V679.92H2135V679.89H2134V679.9H2133V679.91H2132V679.86H2131V679.89H2130V679.91H2129V679.92H2128V679.87H2127V679.87H2126V679.93H2125V679.86H2124V679.89H2123V679.89H2122V679.91H2121V679.97H2120V680.01H2119V680.02H2118V680.04H2117V679.97H2116V679.98H2115V680H2114V680.04H2113V680.03H2112V680.03H2111V679.99H2110V680.02H2109V680.01H2108V680.02H2107V680.06H2106V680.07H2105V680.14H2104V680.19H2103V680.19H2102V680.14H2101V680.09H2100V680.17H2099V680.2H2098V680.17H2097V680.22H2096V680.21H2095V680.17H2094V680.18H2093V680.19H2092V680.23H2091V680.15H2090V680.23H2089V680.29H2088V680.27H2087V680.27H2086V680.35H2085V680.39H2084V680.36H2083V680.37H2082V680.4H2081V680.42H2080V680.52H2079V680.51H2078V680.56H2077V680.47H2076V680.57H2075V680.54H2074V680.63H2073V680.68H2072V680.73H2071V680.79H2070V681.05H2069V681.12H2068V680.88H2067V680.96H2066V681.09H2065V681.19H2064V681.28H2063V681.3H2062V681.62H2061V681.6H2060V681.74H2059V681.79H2058V681.88H2057V682.78H2056V683.26H2055V684.09H2054V686.05H2053V687.35H2052V689.57H2051V688H2050V689.48H2049V690.23H2048V690.15H2047V692.51H2046V687.99H2045V689.91H2044V689.67H2043V690.91H2042V691.15H2041V687.11H2040V690.37H2039V689.94H2038V685.2H2037V685.04H2036V685.59H2035V686.28H2034V686.21H2033V685.14H2032V685.65H2031V686.88H2030V683.61H2029V683.53H2028V684.16H2027V683.89H2026V683.93H2025V686.63H2024V688.41H2023V692.27H2022V693.57H2021V696.55H2020V698.53H2019V700.69H2018V697.46H2017V697.65H2016V697.02H2015V696.03H2014V696.92H2013V695.66H2012V692.36H2011V693.39H2010V687.92H2009V687.4H2008V686.64H2007V688.99H2006V687.44H2005V687.68H2004V687.71H2003V687.36H2002V684.7H2001V686.85H2000V685.15H1999V686.8H1998V686.47H1997V685.92H1996V685.42H1995V684.96H1994V686.08H1993V685.77H1992V685.71H1991V686.38H1990V686.18H1989V686.17H1988V685.45H1987V684.99H1986V684.1H1985V684.33H1984V684.76H1983V685.42H1982V685.59H1981V686.06H1980V686.01H1979V688.59H1978V685.78H1977V687.34H1976V687.31H1975V687.84H1974V688.67H1973V688.98H1972V689.59H1971V689.64H1970V687.69H1969V688.45H1968V689.32H1967V689.19H1966V691.13H1965V689.66H1964V690H1963V694.16H1962V695.35H1961V691.04H1960V691.73H1959V692.26H1958V692.6H1957V693.29H1956V694.44H1955V694.65H1954V700.8H1953V696.94H1952V696.15H1951V696.35H1950V707.28H1949V696.2H1948V700.24H1947V700.92H1946V712.71H1945V712.94H1944V711.03H1943V704.1H1942V707.97H1941V704.46H1940V705.34H1939V716.59H1938V704.19H1937V719.92H1936V721.39H1935V712.76H1934V714.71H1933V709.49H1932V717.48H1931V727.98H1930V731.74H1929V731.3H1928V729.71H1927V713.73H1926V734.48H1925V734.52H1924V719.1H1923V731.48H1922V731.27H1921V736.22H1920V735.38H1919V738.82H1918V726.85H1917V726.25H1916V736.2H1915V736.65H1914V736.93H1913V738.4H1912V742.94H1911V747.58H1910V739.65H1909V737.55H1908V742.41H1907V742.2H1906V745.06H1905V769.37H1904V739.79H1903V745.87H1902V746.73H1901V762.93H1900V763.76H1899V731.25H1898V729.46H1897V758.71H1896V747.84H1895V730.33H1894V721.01H1893V728.24H1892V724.05H1891V719.28H1890V701.07H1889V703.58H1888V703.58H1887V714.04H1886V713.76H1885V712.72H1884V717.5H1883V718.43H1882V718.68H1881V724.38H1880V712.43H1879V710.22H1878V729.73H1877V720.76H1876V721.08H1875V723.58H1874V722.59H1873V710.24H1872V720.85H1871V720.57H1870V715.62H1869V715.15H1868V717.65H1867V721.43H1866V718.94H1865V723.01H1864V733.66H1863V714.53H1862V718.12H1861V719.36H1860V737.78H1859V723.81H1858V726.79H1857V728.87H1856V744.93H1855V750.6H1854V747.34H1853V755.89H1852V769.74H1851V770.62H1850V769.04H1849V763.67H1848V763.8H1847V759.91H1846V761.18H1845V754.82H1844V751.11H1843V747.53H1842V750.07H1841V757.01H1840V754.08H1839V729.43H1838V729.69H1837V725.31H1836V720.03H1835V723.64H1834V704.93H1833V702.22H1832V705.03H1831V715.99H1830V704.39H1829V708.27H1828V706.59H1827V707.34H1826V711.26H1825V709.08H1824V701.1H1823V707.83H1822V704.43H1821V714.13H1820V709.64H1819V719.13H1818V718.7H1817V719.28H1816V722.19H1815V717.51H1814V717.22H1813V715.99H1812V716.09H1811V722.82H1810V731.36H1809V713.01H1808V734.05H1807V739.55H1806V764.02H1805V761.99H1804V723.18H1803V721.87H1802V715.32H1801V712.4H1800V709.86H1799V708.5H1798V716.77H1797V709.83H1796V712.05H1795V720.34H1794V726.68H1793V727.94H1792V729.46H1791V735.87H1790V733.36H1789V735.68H1788V725.56H1787V728.42H1786V747.24H1785V731.01H1784V747.27H1783V751.35H1782V738.45H1781V742.47H1780V747.12H1779V761.13H1778V773.04H1777V777.43H1776V784.78H1775V747.9H1774V750.17H1773V752.83H1772V753.35H1771V748.68H1770V778.5H1769V758.05H1768V749.1H1767V745.2H1766V737.33H1765V723.35H1764V726.11H1763V722.64H1762V716.85H1761V712.76H1760V704.33H1759V709.44H1758V710.27H1757V699.54H1756V701.67H1755V703.07H1754V710.01H1753V713.67H1752V722.45H1751V721.81H1750V706.7H1749V708.39H1748V725.92H1747V730.85H1746V729.56H1745V728.26H1744V733.77H1743V716.78H1742V719.54H1741V740.61H1740V733.33H1739V749.48H1738V752.61H1737V721.42H1736V742.3H1735V741.49H1734V743.15H1733V726.66H1732V725.4H1731V739.65H1730V721.15H1729V717.42H1728V716.87H1727V728.59H1726V724.53H1725V728.71H1724V726.02H1723V740.63H1722V744.64H1721V755.38H1720V744.13H1719V727.62H1718V757.91H1717V739.04H1716V739.27H1715V739.21H1714V738.73H1713V731.3H1712V721.8H1711V723.32H1710V758.71H1709V760.75H1708V766.99H1707V729.36H1706V749.16H1705V740.15H1704V751.98H1703V767.06H1702V772.38H1701V783.14H1700V793.7H1699V798.54H1698V787.58H1697V762.74H1696V740.11H1695V736.24H1694V732.06H1693V723.14H1692V717.97H1691V726.43H1690V732.39H1689V739.72H1688V759.49H1687V762.12H1686V732.04H1685V739.5H1684V756.93H1683V774.18H1682V766.38H1681V740.31H1680V753.41H1679V738.71H1678V765.19H1677V738.72H1676V755.48H1675V737.86H1674V742.5H1673V724.64H1672V742.68H1671V727.32H1670V724.91H1669V730.42H1668V730.91H1667V725.9H1666V722.56H1665V723.76H1664V729.54H1663V733.9H1662V724.68H1661V724.92H1660V735.71H1659V744.97H1658V743.41H1657V726.18H1656V728.08H1655V717.86H1654V718.63H1653V717.37H1652V718.48H1651V720.07H1650V716.32H1649V719.03H1648V741.63H1647V722.44H1646V727.71H1645V727.01H1644V746.17H1643V734.93H1642V734.31H1641V741.64H1640V726.89H1639V738.72H1638V726.5H1637V737.35H1636V727H1635V748.28H1634V751.72H1633V742.29H1632V753.44H1631V746.97H1630V751.38H1629V749.95H1628V754.37H1627V739.33H1626V748.93H1625V728.74H1624V745.68H1623V727.11H1622V712.78H1621V728.89H1620V726.9H1619V733.97H1618V728.41H1617V725.1H1616V724.95H1615V724.06H1614V722.57H1613V723.54H1612V719.99H1611V722.44H1610V720.52H1609V720.86H1608V721.03H1607V711.67H1606V711.65H1605V718.17H1604V713.48H1603V724.89H1602V728.21H1601V728.35H1600V710.35H1599V737.25H1598V738.96H1597V727.06H1596V747.83H1595V728.5H1594V729.65H1593V750.4H1592V732.48H1591V724.99H1590V751.31H1589V736.67H1588V737.65H1587V739.11H1586V740.8H1585V739.05H1584V735.49H1583V736.81H1582V735.07H1581V737.95H1580V735.45H1579V734.38H1578V741.26H1577V739.54H1576V723.87H1575V739.52H1574V731.55H1573V723.01H1572V735.08H1571V739.97H1570V752.86H1569V725.35H1568V740.7H1567V762.39H1566V765.1H1565V770.89H1564V775.4H1563V775.58H1562V785.14H1561V790.14H1560V765.03H1559V765.97H1558V765.9H1557V763.62H1556V779.88H1555V767.33H1554V764.62H1553V762.47H1552V736.73H1551V738.67H1550V748.52H1549V728.04H1548V730.59H1547V731.4H1546V738.24H1545V736.59H1544V737.28H1543V727.12H1542V725.29H1541V723.74H1540V713.57H1539V713.86H1538V712.05H1537V711.8H1536V711.88H1535V704.9H1534V722.92H1533V727.18H1532V708.77H1531V726.59H1530V723.95H1529V723.24H1528V717.08H1527V718.41H1526V726.98H1525V725.86H1524V706.9H1523V709.8H1522V720.79H1521V710.83H1520V721.85H1519V721.13H1518V732.03H1517V732.42H1516V723.97H1515V725.06H1514V717.15H1513V716.33H1512V733.64H1511V721.74H1510V727.28H1509V723.2H1508V728.6H1507V711.23H1506V715.32H1505V718.48H1504V728.98H1503V731.17H1502V723.18H1501V725.64H1500V730.53H1499V748.98H1498V754.5H1497V747.11H1496V755.96H1495V762.28H1494V759.52H1493V761.75H1492V764.61H1491V762.54H1490V782.51H1489V780.43H1488V759.69H1487V746.26H1486V770.66H1485V758.92H1484V733H1483V728.2H1482V735.15H1481V723.07H1480V722.76H1479V721.37H1478V732.57H1477V728.64H1476V737.7H1475V722.76H1474V709.26H1473V729.18H1472V729.3H1471V726.18H1470V718.38H1469V716.91H1468V715.09H1467V713.23H1466V715.59H1465V718.08H1464V724.99H1463V726.54H1462V716.87H1461V726.9H1460V712.18H1459V714.76H1458V718.14H1457V720H1456V734.29H1455V741.51H1454V745.65H1453V750.9H1452V752.26H1451V756.67H1450V748.29H1449V718.52H1448V716.43H1447V715.53H1446V707.93H1445V713.4H1444V709.71H1443V712.61H1442V704.68H1441V721.25H1440V709.05H1439V712.28H1438V710.62H1437V712.29H1436V716.58H1435V732.02H1434V737.65H1433V721.41H1432V710.86H1431V733.17H1430V736.36H1429V718.12H1428V726.22H1427V736.05H1426V750.03H1425V752.69H1424V759.09H1423V729.76H1422V729.51H1421V746.21H1420V742.53H1419V747.29H1418V750.98H1417V766.55H1416V791.41H1415V743.35H1414V752.46H1413V745.84H1412V740.37H1411V740.73H1410V747.33H1409V750.42H1408V742.75H1407V736.18H1406V728.18H1405V714.6H1404V711.62H1403V711.75H1402V709.8H1401V719.49H1400V719.37H1399V721.96H1398V722.26H1397V719.69H1396V718.66H1395V718.94H1394V707.43H1393V715.35H1392V714.77H1391V714.79H1390V716.12H1389V717.78H1388V721.05H1387V711.27H1386V708.69H1385V716.41H1384V722.12H1383V723.99H1382V711.19H1381V712.77H1380V710.83H1379V718.22H1378V718.64H1377V722.67H1376V723.73H1375V725.1H1374V726.04H1373V717.41H1372V717.9H1371V708.78H1370V717.01H1369V733.8H1368V714.82H1367V730.32H1366V731.54H1365V730.33H1364V728.54H1363V729.62H1362V733.06H1361V738.01H1360V738.3H1359V729.84H1358V731.18H1357V739.19H1356V740.2H1355V740.99H1354V740.92H1353V748.03H1352V752.82H1351V750.32H1350V760.51H1349V756.27H1348V763.58H1347V771.27H1346V780.83H1345V748.38H1344V775.06H1343V746.56H1342V756.08H1341V761.85H1340V751.88H1339V728.61H1338V733.58H1337V726.64H1336V705.74H1335V701.59H1334V698.76H1333V699.11H1332V702.52H1331V703.63H1330V705.67H1329V707.09H1328V707.48H1327V722.86H1326V713.8H1325V711.1H1324V714.16H1323V713.41H1322V719.71H1321V718.12H1320V718.99H1319V716.28H1318V717.93H1317V718.96H1316V721.5H1315V716.38H1314V707.26H1313V712.41H1312V712.77H1311V725.96H1310V718.27H1309V725.79H1308V726.46H1307V727.18H1306V713.76H1305V713.41H1304V725.99H1303V728.55H1302V716.63H1301V728.83H1300V729.32H1299V716.64H1298V733.49H1297V726.24H1296V723.63H1295V721.96H1294V719.38H1293V717.59H1292V710.84H1291V709.96H1290V706.24H1289V708.09H1288V708.02H1287V723.84H1286V724.91H1285V715.2H1284V719.54H1283V722.24H1282V735.39H1281V714.26H1280V722.29H1279V724.01H1278V749.38H1277V752.59H1276V756.04H1275V739.91H1274V720.07H1273V721.05H1272V735.4H1271V733.09H1270V724.83H1269V707.62H1268V704.59H1267V700.71H1266V702.6H1265V700.88H1264V697.63H1263V696.2H1262V697.38H1261V700.35H1260V702.77H1259V705.9H1258V708.7H1257V708.02H1256V709.53H1255V703.23H1254V705.52H1253V705.1H1252V714.87H1251V710.19H1250V707.51H1249V729.46H1248V730.58H1247V730.2H1246V729.9H1245V724.31H1244V724.78H1243V730.16H1242V731.5H1241V740.59H1240V740.06H1239V739.87H1238V746.81H1237V744.81H1236V734.79H1235V739.26H1234V734.78H1233V731.73H1232V727.62H1231V723.35H1230V716.7H1229V718.22H1228V709.94H1227V712.23H1226V715.85H1225V715.15H1224V714.56H1223V713.24H1222V726.75H1221V737.87H1220V730.19H1219V729.98H1218V726.64H1217V727.46H1216V718.03H1215V718.08H1214V717.48H1213V731.22H1212V731.29H1211V728.27H1210V731.87H1209V720.42H1208V723.67H1207V742.31H1206V751.41H1205V762.74H1204V765.36H1203V771.66H1202V746.47H1201V747.46H1200V758.62H1199V747.9H1198V749.37H1197V742.97H1196V712.8H1195V699.8H1194V688.28H1193V688.95H1192V691.96H1191V697.47H1190V693.89H1189V692.79H1188V694.32H1187V695.29H1186V695.85H1185V695.29H1184V697.48H1183V698.9H1182V700.58H1181V704.12H1180V708.55H1179V700.11H1178V705.4H1177V702.95H1176V705.99H1175V707.73H1174V704.69H1173V706.93H1172V704.83H1171V706.59H1170V708.39H1169V706.15H1168V707.37H1167V721.92H1166V708.9H1165V727.36H1164V729.44H1163V731.08H1162V729.01H1161V715.08H1160V720.08H1159V721.27H1158V721.93H1157V704.48H1156V713.85H1155V712.89H1154V717.76H1153V704.35H1152V723.14H1151V720.84H1150V723.24H1149V709.76H1148V719.62H1147V719.22H1146V731.48H1145V732.57H1144V734.66H1143V725.44H1142V725.13H1141V724.81H1140V732.92H1139V744.36H1138V746.61H1137V740.98H1136V738.73H1135V753.04H1134V755.58H1133V760.26H1132V746.38H1131V728.42H1130V747.11H1129V742.63H1128V719.52H1127V728.89H1126V718.52H1125V713.21H1124V707.88H1123V702.94H1122V699.33H1121V701.32H1120V702.14H1119V692.1H1118V702.1H1117V698.43H1116V701.07H1115V700.56H1114V700.76H1113V699.39H1112V703.85H1111V699.24H1110V707.06H1109V706.28H1108V704.68H1107V708.01H1106V700.29H1105V703.89H1104V717.25H1103V718.65H1102V705.79H1101V704.24H1100V717.93H1099V719.52H1098V719.65H1097V719.42H1096V711.18H1095V721.65H1094V722.65H1093V715.23H1092V716.9H1091V730.4H1090V731.24H1089V734.28H1088V711.41H1087V713.33H1086V714.15H1085V716.46H1084V726H1083V728.61H1082V727.61H1081V734.2H1080V733.04H1079V734.35H1078V731.39H1077V718.82H1076V734.57H1075V727.73H1074V720.51H1073V724.01H1072V744.64H1071V744.16H1070V746.75H1069V727.92H1068V737.68H1067V736.24H1066V737.26H1065V735.9H1064V741.41H1063V738.61H1062V730.41H1061V716.99H1060V730.25H1059V726.85H1058V728.38H1057V722.49H1056V710.6H1055V695.63H1054V694.87H1053V695.89H1052V696.79H1051V697.79H1050V697.34H1049V694.77H1048V700.24H1047V697.01H1046V700.56H1045V699.85H1044V696.39H1043V699.37H1042V706.3H1041V696.18H1040V697.71H1039V699.23H1038V709.44H1037V703.97H1036V704.63H1035V706.39H1034V705.54H1033V701.67H1032V702.87H1031V696.97H1030V697.15H1029V712.15H1028V701.24H1027V701.98H1026V714.78H1025V712.92H1024V708.99H1023V709.66H1022V706.34H1021V706.47H1020V705.83H1019V707.38H1018V707.78H1017V710.06H1016V712.29H1015V719.05H1014V711H1013V722.07H1012V725.17H1011V709.59H1010V721.99H1009V705.87H1008V712.43H1007V715.3H1006V718.04H1005V710.38H1004V713.94H1003V716.13H1002V725.71H1001V730.02H1000V730.37H999V739.04H998V741.39H997V725.97H996V737.27H995V748.68H994V749.22H993V750.12H992V730.54H991V740.79H990V734.75H989V732.12H988V725.06H987V717.26H986V714.86H985V710.66H984V709.35H983V702.63H982V692.21H981V703.43H980V699.72H979V694.5H978V696.57H977V697.91H976V698.16H975V698.21H974V701.84H973V702.46H972V703.83H971V703.43H970V706.2H969V705.91H968V713.99H967V714.44H966V701.23H965V698.77H964V698.61H963V701.93H962V704.32H961V703.23H960V705.17H959V706.18H958V714.25H957V699.91H956V707.14H955V705.97H954V704.84H953V709.67H952V701.25H951V700.46H950V696.09H949V702.98H948V696.35H947V702.61H946V703.83H945V696.33H944V701.49H943V697.43H942V707.5H941V707.63H940V710.48H939V705H938V707.76H937V708.54H936V710.31H935V715.16H934V727.15H933V727.8H932V729.53H931V721.62H930V722.43H929V719.63H928V721.42H927V711.99H926V711.76H925V714.11H924V714.64H923V716.18H922V721.08H921V721.28H920V712.95H919V722.86H918V714.66H917V729.54H916V718.38H915V714.2H914V712.85H913V709.05H912V706.11H911V702.25H910V693.91H909V697.4H908V696.36H907V696.78H906V698.04H905V703.54H904V705.7H903V699.96H902V700.49H901V698.14H900V704H899V703.05H898V705.78H897V713.42H896V715.74H895V701.82H894V705.67H893V706.22H892V705.51H891V706.96H890V719.79H889V713.42H888V715.6H887V718.12H886V722.93H885V725.39H884V727.27H883V729.34H882V733.91H881V727.1H880V727.86H879V733.1H878V731.09H877V726.78H876V723.73H875V720.7H874V717.07H873V701.91H872V704.4H871V711.62H870V713.43H869V709.18H868V704.61H867V713.68H866V706.59H865V708.37H864V714.17H863V726.57H862V718.05H861V721.11H860V723.89H859V709.32H858V725.79H857V726.4H856V727.19H855V725.28H854V733.15H853V733.91H852V713.59H851V715.53H850V717.32H849V718.17H848V713.39H847V713.59H846V711.51H845V710.85H844V708.68H843V710.64H842V707.54H841V700.24H840V691.22H839V693.89H838V693.91H837V694.26H836V696.83H835V698.17H834V696.37H833V697.73H832V698.49H831V694.62H830V706.19H829V694.56H828V703.37H827V703.41H826V703.07H825V697.28H824V697.7H823V712.82H822V710.82H821V712.33H820V716.54H819V710.08H818V710.42H817V718.63H816V722.29H815V712.41H814V712.79H813V722.02H812V723.8H811V724.41H810V708.11H809V707.25H808V717.47H807V716.06H806V716.03H805V714.56H804V712H803V720.19H802V721.12H801V712.34H800V719.24H799V726.14H798V728.56H797V727.61H796V718.56H795V742.96H794V725.3H793V735.99H792V740.89H791V744.24H790V751.44H789V752.96H788V737.72H787V745.32H786V720.95H785V747.96H784V738.56H783V738.1H782V739.56H781V715.27H780V715.62H779V716.38H778V724.85H777V723.89H776V720.24H775V734.88H774V732.85H773V728.94H772V718.8H771V718.11H770V717.92H769V717.81H768V727.64H767V721.39H766V714.4H765V712.48H764V710.18H763V725.94H762V707.31H761V716.06H760V705.41H759V703.79H758V708.16H757V701.64H756V702.47H755V705.26H754V719.32H753V713.23H752V713.78H751V712.97H750V708.67H749V717.69H748V715.69H747V715.83H746V712.93H745V712.02H744V711.33H743V733.81H742V722.99H741V720.75H740V721.4H739V722.93H738V720.71H737V717.67H736V701.94H735V699.17H734V700.47H733V692.79H732V693.02H731V693.03H730V696.25H729V695.92H728V696.43H727V696.72H726V694.57H725V694.95H724V698.42H723V703.11H722V699.65H721V702.77H720V692.05H719V692.38H718V699.89H717V705.57H716V695.33H715V695.99H714V703.47H713V712.16H712V711.16H711V702.6H710V701.22H709V699.8H708V705.02H707V703.24H706V700.69H705V702.41H704V701.95H703V697.57H702V698.76H701V697.36H700V696.34H699V697.15H698V696.95H697V705.47H696V699.66H695V704.65H694V716.79H693V723.75H692V711.16H691V733.76H690V724.53H689V732.12H688V724.28H687V721.61H686V728.68H685V717.96H684V716.76H683V714.12H682V706.9H681V706.31H680V714.81H679V724.5H678V725.81H677V730.4H676V732.95H675V719.08H674V724.66H673V711.85H672V733.14H671V733.76H670V708.31H669V706.25H668V710.55H667V705.52H666V703.91H665V712.42H664V703.77H663V705.71H662V706.49H661V704.19H660V703.08H659V702.48H658V695.98H657V696.05H656V696.07H655V699.82H654V698.53H653V694.72H652V701.78H651V694.66H650V698.54H649V700.57H648V705.44H647V707.16H646V699.59H645V719.38H644V708.7H643V719.09H642V708.71H641V719.3H640V724.15H639V711.72H638V740.09H637V743.35H636V744.02H635V747.92H634V738.77H633V741.43H632V753.16H631V753.05H630V735.02H629V752.17H628V749.12H627V742.58H626V734.96H625V718.12H624V714.23H623V706.76H622V718.08H621V709.77H620V710.37H619V709.73H618V705.36H617V699.88H616V708.62H615V711.59H614V697.89H613V699.22H612V701.31H611V713.31H610V720.25H609V725.78H608V725.92H607V719.19H606V727.97H605V731.5H604V725.69H603V730.08H602V730.28H601V732.5H600V733.65H599V734.89H598V727.67H597V719.55H596V720.33H595V733.08H594V725.22H593V725.22H592V710.93H591V707.64H590V703.51H589V703.34H588V703.13H587V704.8H586V698.7H585V700.63H584V704.63H583V710.8H582V697.91H581V703.78H580V697.5H579V693.76H578V697.79H577V697.76H576V698.93H575V697.39H574V699.56H573V699.39H572V701.73H571V697.25H570V698.45H569V693.95H568V695.08H567V696.49H566V701.56H565V699.65H564V700.75H563V697.49H562V697.33H561V699.9H560V698.22H559V695.08H558V694.9H557V696.05H556V696.66H555V697.38H554V693.83H553V700.01H552V703.76H551V705.11H550V706.29H549V698.45H548V699.72H547V709.59H546V710.96H545V713.04H544V715.12H543V720.1H542V720.65H541V722.17H540V712.62H539V714.85H538V715.54H537V715.39H536V717.77H535V715.5H534V716.29H533V716.29H532V716.63H531V716.73H530V715.21H529V731.48H528V727.25H527V714.13H526V707.57H525V707.52H524V700.77H523V697.07H522V696.04H521V696.21H520V698.64H519V696.6H518V700.42H517V704.85H516V703.17H515V703.87H514V703.74H513V700.75H512V702.36H511V703.95H510V706.27H509V719.68H508V721.79H507V724.2H506V717.84H505V716.46H504V716.75H503V710.68H502V706H501V716.9H500V714.57H499V701.56H498V702.16H497V703.86H496V705.48H495V706.02H494V707.39H493V711.21H492V704.85H491V711.02H490V714.13H489V717.16H488V733.2H487V714.48H486V734.68H485V721.87H484V725.4H483V728.12H482V728.11H481V727.04H480V714.73H479V708.64H478V705.74H477V701.9H476V696.59H475V702.23H474V704.12H473V706.29H472V703.54H471V707.31H470V707.3H469V705.86H468V711.91H467V714.58H466V713.11H465V709.76H464V720.09H463V722.7H462V712.37H461V723.12H460V714.37H459V726.75H458V728.29H457V722.58H456V720.23H455V743.9H454V730.86H453V723.37H452V720.22H451V717.59H450V705.58H449V719.13H448V711.95H447V701.58H446V694.27H445V694.72H444V694.56H443V700.2H442V699.26H441V700.63H440V696.84H439V697.83H438V697.45H437V696.87H436V697.31H435V698.48H434V699.44H433V702.38H432V696.3H431V696.33H430V697.28H429V696.97H428V696.84H427V699.78H426V695.21H425V692.78H424V698.98H423V698.61H422V696.61H421V695.32H420V695.62H419V693.2H418V694.03H417V695.14H416V694.1H415V694.04H414V696.31H413V700.35H412V695.04H411V696.39H410V696.41H409V696.67H408V694.74H407V694.54H406V703.39H405V703.89H404V708.22H403V702.06H402V703.43H401V703.52H400V711.58H399V702.27H398V704.09H397V700.82H396V702.28H395V709.79H394V720.03H393V717.09H392V720.94H391V735.25H390V742.71H389V747.85H388V743.94H387V749.71H386V742.16H385V730.78H384V720.04H383V719.68H382V716.83H381V710.1H380V704.22H379V708.53H378V698.96H377V699.13H376V699.79H375V700.76H374V702.97H373V707.27H372V703.82H371V705.72H370V702.17H369V699.49H368V699.82H367V707.38H366V701.16H365V710.38H364V708.72H363V707.34H362V703.93H361V705.73H360V696.25H359V705.2H358V707.2H357V709.32H356V704.69H355V705.13H354V713.61H353V711.83H352V708.67H351V703.62H350V699.72H349V698.8H348V699.92H347V698.87H346V696.98H345V703.37H344V705.88H343V704.05H342V707.33H341V702.17H340V724.84H339V707.69H338V709.54H337V729.48H336V724.64H335V737.5H334V734.61H333V733.43H332V724.91H331V721.24H330V715.74H329V711.19H328V714.12H327V712.57H326V712.54H325V710.06H324V708.92H323V702.61H322V706.95H321V700.91H320V712.05H319V715.4H318V707.69H317V718.8H316V721.55H315V725.52H314V711.22H313V712.47H312V720.84H311V720.83H310V720.9H309V724.69H308V722.86H307V717.46H306V715.56H305V713.15H304V715.16H303V714.33H302V705.74H301V697.27H300V698.89H299V706.91H298V699.47H297V699.84H296V698.68H295V698.33H294V706.9H293V708.02H292V694.22H291V694.23H290V695.61H289V696.42H288V694.78H287V701.89H286V700.09H285V699.37H284V700.56H283V699.96H282V699.42H281V698.28H280V698.46H279V698.48H278V694.07H277V692.57H276V695.45H275V696.39H274V696.66H273V696.81H272V697.34H271V697.76H270V702.44H269V696.56H268V703.71H267V704.98H266V701.02H265V699.7H264V710.36H263V711.59H262V701.23H261V711.84H260V714.36H259V714.05H258V710.09H257V712.61H256V714.19H255V716.83H254V717.9H253V717.99H252V721.81H251V726.33H250V728.27H249V733.11H248V720.91H247V723.59H246V731.54H245V736.51H244V736.92H243V734.78H242V720.32H241V732.44H240V731.22H239V720.23H238V708.03H237V700.4H236V691.49H235V690.41H234V688.04H233V690.73H232V690.28H231V690.76H230V690.54H229V688.11H228V693.35H227V690.75H226V690.81H225V693.54H224V694.08H223V691.57H222V688.64H221V692.49H220V692.48H219V691.53H218V688.86H217V688.3H216V688.17H215V688.41H214V688.23H213Z" fill="#ffd966" clip-path="url(#c2)"/>
<path d="M89,240.8V236.15H90V236.46H91V236.62H92V236.69H93V236.71H94V236.87H95V236.93H96V236.99H97V237.03H98V237.56H99V237.4H100V237.28H101V237.06H102V237.05H103V237H104V237.06H105V237.12H106V237.05H107V237.19H108V237.25H109V237.5H110V237.74H111V237.49H112V236.82H113V236.99H114V236.56H115V235.22H116V233.72H117V230.67H118V230.77H119V230.84H120V230.75H121V230.29H122V231.88H123V229.63H124V230.39H125V229.96H126V230.59H127V231.49H128V231.48H129V231.75H130V232.03H131V232.23H132V231.16H133V231.95H134V232.98H135V232.54H136V232.91H137V232.28H138V233.64H139V233.27H140V234.35H141V233.43H142V234.13H143V234.33H144V234.42H145V234.57H146V235.76H147V235.56H148V235.33H149V235.53H150V235.26H151V235.48H152V235.93H153V235.47H154V236.16H155V235.71H156V235.83H157V236.08H158V236.03H159V235.88H160V236.13H161V236.24H162V236.12H163V234.87H164V234.92H165V234.85H166V235.44H167V234.83H168V235.38H169V235.63H170V236.19H171V236.13H172V235.64H173V235.1H174V234.64H175V234.8H176V234.63H177V234.91H178V234.9H179V234.9H180V233.17H181V233.39H182V233.58H183V234.41H184V233.81H185V233.05H186V232.45H187V232.03H188V231.24H189V230.77H190V230.51H191V229.5H192V229.18H193V229.06H194V229.01H195V230.45H196V230.43H197V229.07H198V230.63H199V230.68H200V231.29H201V229.12H202V230.15H203V231.39H204V231.68H205V232.68H206V231.04H207V232.87H208V230.88H209V230.71H210V230.16H211V230.52H212V230.35H213V230.43H214V230.27H215V230.25H216V231.19H217V231.21H218V230.12H219V230.03H220V229.95H221V232.42H222V232.49H223V233.12H224V233.69H225V234.05H226V234.43H227V234.7H228V234.88H229V234.72H230V235.17H231V234.25H232V234.78H233V235.54H234V235.48H235V235.34H236V235.12H237V234.57H238V233.73H239V234.65H240V232.86H241V233.26H242V232.84H243V232.63H244V232.75H245V234.18H246V233.52H247V234.34H248V235.38H249V235.9H250V235.7H251V235.46H252V234.38H253V233.34H254V232.58H255V231.56H256V230.66H257V230.11H258V230.26H259V231.37H260V231.32H261V230.56H262V230.89H263V231.2H264V230.96H265V230.53H266V231.91H267V231.22H268V231H269V229.83H270V228.23H271V227.23H272V226.46H273V228.56H274V227.5H275V227.68H276V227.97H277V228.93H278V228.38H279V228.52H280V229.33H281V230.93H282V230.55H283V230.9H284V229.49H285V232.21H286V231.87H287V231.51H288V233.26H289V233.61H290V233.48H291V233.53H292V233.91H293V233.43H294V232.27H295V232.36H296V231.55H297V231.48H298V231.84H299V232.73H300V233.39H301V233.72H302V234.33H303V234.93H304V235.08H305V235.07H306V235.72H307V235.74H308V234.78H309V235.41H310V235.45H311V234.86H312V234.69H313V235.13H314V234.27H315V235.38H316V234.59H317V234.82H318V234.87H319V235.45H320V234.65H321V234.86H322V235.52H323V234.78H324V234.83H325V235.05H326V235.67H327V235.37H328V235.73H329V235.57H330V235.19H331V234.9H332V234.9H333V234.71H334V235.09H335V234.45H336V233.93H337V234.01H338V234.62H339V234.69H340V235.37H341V234.32H342V234.82H343V234.71H344V232.93H345V232.71H346V231.46H347V229.51H348V228.63H349V227.57H350V228.6H351V227.69H352V228.04H353V228.15H354V226.65H355V227.26H356V228.92H357V229.78H358V230.25H359V230.81H360V231.98H361V232.44H362V232.77H363V231.56H364V232.45H365V233.24H366V233.66H367V233.96H368V233.15H369V234.48H370V234.49H371V234.99H372V234.72H373V235.14H374V234.82H375V233.36H376V233.25H377V231.36H378V231H379V231.36H380V229.8H381V230.48H382V229.86H383V230.42H384V230.66H385V230.9H386V229.8H387V231.34H388V228.59H389V228.48H390V228.49H391V229.5H392V229.83H393V229.37H394V231.27H395V230.34H396V230.47H397V230.69H398V230.9H399V230.98H400V231H401V231.29H402V231.38H403V231.67H404V230.34H405V232.3H406V231.72H407V231.73H408V230.24H409V232.16H410V232.81H411V233.01H412V232.37H413V233.59H414V234.97H415V233.89H416V235.13H417V235.25H418V235.75H419V235.24H420V235.38H421V234.59H422V233.75H423V233.11H424V232.52H425V232.52H426V230.21H427V229.26H428V229.34H429V229.11H430V228.97H431V229.35H432V229.13H433V228.79H434V231.2H435V229.4H436V230.18H437V231.09H438V232.59H439V232.73H440V233.12H441V233.29H442V233.81H443V233.92H444V232.83H445V232.87H446V233.11H447V234.03H448V234.89H449V233.93H450V234.3H451V234.42H452V234.69H453V235.05H454V234.66H455V235.27H456V235.34H457V235.28H458V235.28H459V234.98H460V234.97H461V235.14H462V235.29H463V236.04H464V236.49H465V236.54H466V236.56H467V236.12H468V236.25H469V235.97H470V236.46H471V236.2H472V236.26H473V236.11H474V235.54H475V234.67H476V235.21H477V235.04H478V233.94H479V234.51H480V233.34H481V233.08H482V233.58H483V232.89H484V232.57H485V232.09H486V233.97H487V233.99H488V232.22H489V233.3H490V233.46H491V233.18H492V233.72H493V234.29H494V234.96H495V234.55H496V234.84H497V234.61H498V234.72H499V234.84H500V233.4H501V232.04H502V230.96H503V231.26H504V231.03H505V230.95H506V229.52H507V229.46H508V229.1H509V228.49H510V228.45H511V228.12H512V229.59H513V229.92H514V229.84H515V228.52H516V230.06H517V228.42H518V228.66H519V229.69H520V229.6H521V232.1H522V232.72H523V233.36H524V234.11H525V233.32H526V233.49H527V233.89H528V233.04H529V233.66H530V233.32H531V233.19H532V231.54H533V232.47H534V232.63H535V232.31H536V231.84H537V231.4H538V228.41H539V229.81H540V229.18H541V228.38H542V227.51H543V227.33H544V226.22H545V226.03H546V226.19H547V226.27H548V226.33H549V225.69H550V226.22H551V226.66H552V227.58H553V229.49H554V229.24H555V229.92H556V229.75H557V230.22H558V231.04H559V232.15H560V231.93H561V231.08H562V231.61H563V231.65H564V232.96H565V233.25H566V234.12H567V233.2H568V233.09H569V234.27H570V234.47H571V234.55H572V233.57H573V234.77H574V234.43H575V234.63H576V234.36H577V234.39H578V234.03H579V233.4H580V232.47H581V230.88H582V229.96H583V229.51H584V229.27H585V228.81H586V228.66H587V228.67H588V229.58H589V228.01H590V227.91H591V228.91H592V228.28H593V229.11H594V229.74H595V230.68H596V231.5H597V232.09H598V232.94H599V232.54H600V232.43H601V232H602V231.2H603V231.41H604V230.64H605V229.68H606V230.83H607V232.71H608V233.01H609V232.79H610V233.26H611V233.12H612V233.09H613V232.79H614V233.1H615V233.32H616V234.12H617V233.72H618V233.75H619V234.03H620V234.42H621V234.34H622V234.84H623V234.82H624V234.98H625V234.86H626V234.84H627V235.07H628V234.66H629V234.81H630V234.85H631V234.9H632V234.02H633V233.83H634V233.38H635V233.66H636V235.09H637V234.74H638V234.95H639V233.93H640V234.16H641V234.86H642V234.88H643V234.39H644V234.43H645V234.67H646V234.81H647V234.85H648V235.78H649V235.85H650V235.65H651V235.84H652V235.5H653V235.76H654V235.59H655V233.89H656V231.76H657V228.58H658V228.83H659V226.97H660V226.12H661V226.32H662V226.57H663V226.76H664V226.25H665V228.45H666V227.77H667V227.48H668V227.25H669V226.85H670V225.98H671V225.82H672V225.91H673V227.41H674V229.28H675V229.64H676V228.34H677V229.61H678V230.46H679V228.03H680V228.05H681V228.08H682V227.53H683V229.76H684V230.11H685V227.71H686V228.66H687V230.33H688V230.91H689V231.45H690V231.95H691V231H692V228.77H693V228.61H694V229.32H695V228.78H696V228.7H697V228.89H698V228.82H699V227.65H700V227.45H701V228.56H702V228.82H703V227.77H704V227.79H705V227.2H706V224.6H707V224.18H708V224.07H709V222.55H710V223.4H711V224.49H712V225.76H713V226.26H714V225.35H715V228.33H716V227.28H717V228.12H718V227.91H719V229.88H720V230.28H721V230.97H722V231.05H723V231H724V229.17H725V228.21H726V228.5H727V229.49H728V230.24H729V230.9H730V230.89H731V229.32H732V229.1H733V230.51H734V230.09H735V228.53H736V228.43H737V228.69H738V230.94H739V230.3H740V230.79H741V230.48H742V229.44H743V231.22H744V231.44H745V231.12H746V230.74H747V231.23H748V231.75H749V231.42H750V233.26H751V233.68H752V234.25H753V234.67H754V234.33H755V235.14H756V234.39H757V234.68H758V234.53H759V234.79H760V234.9H761V235.88H762V236.16H763V236.25H764V235.62H765V236.54H766V236.68H767V236.42H768V236.13H769V236.21H770V235.26H771V233.36H772V229.82H773V229.29H774V229.17H775V227.34H776V227.4H777V227.38H778V228.56H779V227.16H780V227.31H781V230.04H782V227.9H783V227.14H784V229.19H785V227.22H786V229.01H787V229.18H788V229.42H789V227.97H790V227.78H791V229.48H792V229.84H793V230.15H794V228.73H795V229.5H796V229.8H797V230H798V227.57H799V230.54H800V230.48H801V230.15H802V227.6H803V226.51H804V226.55H805V225.89H806V225.87H807V225.69H808V226.33H809V226.59H810V226.8H811V226.97H812V225.98H813V226.38H814V226.97H815V226.36H816V227.75H817V227.98H818V228.08H819V225.53H820V226.91H821V226.79H822V226.73H823V226.46H824V227.14H825V228.87H826V227.86H827V228.67H828V229H829V229.36H830V229.78H831V231.62H832V232H833V231.67H834V232.18H835V231.53H836V232.49H837V233.09H838V232.33H839V232.63H840V233.24H841V233.67H842V234.91H843V234.75H844V234.61H845V234.11H846V233.41H847V233.58H848V232.22H849V231.38H850V231.36H851V229.92H852V230.33H853V227.65H854V226.51H855V226.99H856V224.11H857V225.1H858V227.12H859V228.09H860V228.64H861V229.27H862V229.85H863V229.35H864V229.24H865V227.89H866V228.01H867V226.82H868V228.66H869V228.63H870V226.79H871V226.99H872V228.33H873V226.35H874V228.91H875V229.36H876V227.47H877V228.96H878V230.21H879V230.01H880V228.68H881V228.77H882V228.87H883V228.1H884V229.37H885V227.61H886V227.89H887V229.34H888V227.62H889V227.58H890V227.48H891V226.13H892V227.01H893V227.42H894V228.75H895V228.07H896V228.48H897V228.99H898V229.27H899V229.17H900V230.39H901V230.65H902V229.86H903V230.66H904V230.69H905V231.48H906V231.63H907V231.36H908V231.55H909V232.4H910V230.42H911V230.1H912V231.8H913V231.66H914V232.17H915V232.51H916V233.21H917V234.53H918V233.84H919V234.12H920V234.41H921V235.04H922V235.28H923V235.39H924V235.73H925V235.43H926V233.06H927V230.94H928V228.71H929V228.72H930V228.16H931V227.65H932V226.56H933V226.78H934V226.67H935V227.48H936V229.03H937V229.26H938V229.52H939V227.44H940V229.49H941V229.64H942V228.94H943V229.29H944V229.64H945V230.02H946V228.62H947V229.91H948V230.72H949V229.21H950V228.57H951V228.73H952V228.76H953V230.78H954V230.19H955V228.96H956V229.02H957V229.27H958V231.04H959V230.28H960V230.31H961V230.41H962V229.25H963V229.18H964V229.82H965V229.97H966V230.72H967V231.11H968V231.17H969V231.39H970V229.41H971V231.94H972V230.44H973V230.87H974V231.22H975V231.67H976V232.37H977V232.45H978V233.22H979V233H980V233.74H981V232.42H982V233.82H983V234.17H984V234.23H985V233.58H986V233.92H987V234H988V233.56H989V234.44H990V234.64H991V234.73H992V235.49H993V235.15H994V235.2H995V235.2H996V235.28H997V235.45H998V235.45H999V235.42H1000V236.19H1001V235.37H1002V235.54H1003V233.04H1004V230.8H1005V228.67H1006V226.84H1007V227.75H1008V226.46H1009V228.04H1010V227.76H1011V225.07H1012V227.11H1013V226.68H1014V226.46H1015V226.25H1016V221.18H1017V223.61H1018V219.49H1019V222.86H1020V222.89H1021V223.2H1022V223.89H1023V224.26H1024V222.97H1025V222.61H1026V225.52H1027V224.7H1028V223.97H1029V224.54H1030V227.16H1031V227.03H1032V226.9H1033V229.43H1034V230.05H1035V228.35H1036V229.45H1037V229.17H1038V228.89H1039V228.41H1040V225.71H1041V225.95H1042V226.88H1043V226.89H1044V226.61H1045V225.95H1046V227.03H1047V227.86H1048V229.74H1049V230.37H1050V230.56H1051V230.87H1052V229.15H1053V229.61H1054V229.97H1055V230.56H1056V230.85H1057V232.12H1058V232.15H1059V231.79H1060V231.61H1061V232.8H1062V232.27H1063V232.6H1064V233.05H1065V233.9H1066V232.98H1067V234.83H1068V234.01H1069V235.42H1070V235.6H1071V234.32H1072V234.44H1073V234.65H1074V234.82H1075V235.69H1076V235.77H1077V235.48H1078V234.01H1079V232.36H1080V230.14H1081V227.37H1082V224.97H1083V225.16H1084V224.32H1085V224.11H1086V224.44H1087V221.4H1088V220.87H1089V220.83H1090V221.16H1091V220.75H1092V221.48H1093V223.01H1094V224.76H1095V225.55H1096V226.04H1097V225.57H1098V224.72H1099V224.5H1100V224.68H1101V227.81H1102V225.79H1103V227.17H1104V227.95H1105V228.39H1106V226.11H1107V227.95H1108V228.49H1109V228.39H1110V228.74H1111V229.12H1112V228.25H1113V227.04H1114V227.09H1115V228.28H1116V228.02H1117V228.64H1118V228.98H1119V228.11H1120V228.04H1121V230.63H1122V230.25H1123V229.69H1124V229.39H1125V226.52H1126V225.65H1127V224.48H1128V224.47H1129V225.22H1130V227.27H1131V227.67H1132V228.26H1133V227.18H1134V230.32H1135V228.95H1136V229.73H1137V230.5H1138V231.08H1139V231.4H1140V232.1H1141V232.18H1142V232.85H1143V232.28H1144V232.79H1145V233.28H1146V233.76H1147V234.12H1148V234.64H1149V235.07H1150V234.75H1151V235.9H1152V236.17H1153V236.08H1154V236.48H1155V236.87H1156V234.68H1157V230.31H1158V227.77H1159V225.1H1160V220.72H1161V219.98H1162V218.99H1163V216.22H1164V217.54H1165V217.07H1166V217.81H1167V219.54H1168V220.49H1169V222.06H1170V223.47H1171V224.05H1172V222.16H1173V224.07H1174V225.06H1175V223.83H1176V224.17H1177V225.04H1178V225.42H1179V225.83H1180V224.62H1181V225.21H1182V226.5H1183V225.47H1184V227.86H1185V226.13H1186V228.12H1187V229.29H1188V227.93H1189V230.35H1190V229.69H1191V229.6H1192V229.94H1193V230.23H1194V229.88H1195V228.42H1196V227.52H1197V226.8H1198V225.83H1199V227.62H1200V227.67H1201V226.84H1202V225.87H1203V227.69H1204V228.79H1205V228.39H1206V228H1207V229.42H1208V230.47H1209V230.51H1210V232.64H1211V232.28H1212V232.34H1213V232.64H1214V232.15H1215V232.2H1216V232.41H1217V232.73H1218V234.72H1219V234.89H1220V233.61H1221V234.72H1222V235.01H1223V235.06H1224V234.25H1225V234.44H1226V235.59H1227V234.98H1228V235.23H1229V235.43H1230V235.41H1231V235.08H1232V235.01H1233V234.77H1234V233.97H1235V231.79H1236V229.81H1237V227.13H1238V225.97H1239V225.22H1240V224.81H1241V226.14H1242V223.39H1243V223.64H1244V224.72H1245V224.97H1246V221.76H1247V221.87H1248V222.34H1249V222.34H1250V222.44H1251V221.25H1252V220.8H1253V222.45H1254V222.31H1255V222.11H1256V223.1H1257V223.63H1258V223.59H1259V223.82H1260V224.19H1261V225.04H1262V226.39H1263V228.48H1264V230.22H1265V229.61H1266V231.17H1267V230.95H1268V231.1H1269V229.49H1270V229.79H1271V229.5H1272V227.51H1273V227.28H1274V224.29H1275V223.48H1276V224.77H1277V222.28H1278V226.85H1279V225.07H1280V229.06H1281V229.99H1282V230.98H1283V230.74H1284V230.7H1285V229.88H1286V229.74H1287V230.05H1288V230.35H1289V228.01H1290V227.95H1291V227.63H1292V227.59H1293V229.22H1294V229.2H1295V226.52H1296V228.81H1297V228.95H1298V228.86H1299V228.88H1300V228.77H1301V230.31H1302V230.95H1303V230.4H1304V230.77H1305V231.09H1306V231.8H1307V232.59H1308V232.3H1309V233.02H1310V231.88H1311V229.58H1312V227.94H1313V226.53H1314V225.1H1315V221.21H1316V218.78H1317V218.87H1318V218.29H1319V217.58H1320V220.93H1321V218.95H1322V219.14H1323V219.1H1324V222.03H1325V223.27H1326V221.93H1327V224.26H1328V225H1329V225.4H1330V223.93H1331V223.72H1332V225H1333V224.06H1334V225.06H1335V223.15H1336V223.31H1337V223.34H1338V223.48H1339V224.11H1340V224.72H1341V227.73H1342V228.14H1343V228.38H1344V227.19H1345V224.65H1346V225.19H1347V226.02H1348V226.21H1349V227.97H1350V224.67H1351V226.22H1352V225.4H1353V223.73H1354V223.18H1355V224.01H1356V224.63H1357V224.48H1358V223.93H1359V224.04H1360V225.97H1361V226.52H1362V225.05H1363V225.58H1364V226.13H1365V226.77H1366V226.34H1367V227.93H1368V229.98H1369V228.62H1370V228.93H1371V228.62H1372V228.9H1373V229.45H1374V231.32H1375V231.7H1376V232.22H1377V232.84H1378V232.91H1379V231.84H1380V231.14H1381V231.46H1382V231.55H1383V231.54H1384V231.96H1385V231.76H1386V229.55H1387V226.89H1388V224.55H1389V223.85H1390V222.12H1391V219.65H1392V219.84H1393V219.95H1394V220.96H1395V219.21H1396V222.16H1397V220.49H1398V221.23H1399V221.52H1400V224.38H1401V222.87H1402V223.69H1403V223.84H1404V222.36H1405V225.18H1406V222.22H1407V222.02H1408V225.21H1409V225.6H1410V224.24H1411V224.68H1412V226.93H1413V226.02H1414V228.02H1415V227.02H1416V228.9H1417V227.83H1418V228.94H1419V228.51H1420V226.66H1421V228.13H1422V227.94H1423V227.74H1424V226.51H1425V226.38H1426V224.63H1427V225.97H1428V225.37H1429V224.8H1430V225.8H1431V223.57H1432V221.99H1433V223.54H1434V223.35H1435V224.42H1436V224.92H1437V226.25H1438V226.79H1439V227.27H1440V227.87H1441V228.38H1442V227.91H1443V228.7H1444V227.78H1445V227.59H1446V228.24H1447V229.21H1448V229.43H1449V231.09H1450V230.87H1451V230.48H1452V230.64H1453V230.3H1454V230.77H1455V230.78H1456V230.71H1457V230.56H1458V230.41H1459V230.31H1460V230.08H1461V228.16H1462V227.83H1463V227.86H1464V226.92H1465V227.45H1466V226.86H1467V225.75H1468V222.79H1469V222.82H1470V223.17H1471V223.43H1472V222.5H1473V221.18H1474V220.21H1475V221.95H1476V220.76H1477V224.02H1478V224.16H1479V223.35H1480V223.67H1481V223.34H1482V222.46H1483V223.43H1484V223.45H1485V224.4H1486V224.91H1487V226.17H1488V224.45H1489V225.16H1490V227.03H1491V224.95H1492V225.32H1493V225.19H1494V225.42H1495V225.05H1496V225.32H1497V224.77H1498V225.6H1499V227.19H1500V227.87H1501V228.19H1502V229.04H1503V229.17H1504V229.01H1505V228.66H1506V229.1H1507V229.02H1508V228H1509V227.52H1510V227.09H1511V226.41H1512V228.01H1513V225.89H1514V226.23H1515V228.67H1516V228.93H1517V229.26H1518V227.38H1519V227.55H1520V228.56H1521V229.68H1522V228.81H1523V228.36H1524V228.75H1525V227.8H1526V227.89H1527V227.13H1528V228.8H1529V230.47H1530V229.95H1531V229.58H1532V229.01H1533V226.06H1534V225.93H1535V225.06H1536V227.15H1537V226.49H1538V223.19H1539V223H1540V223.85H1541V222.91H1542V221.86H1543V221.44H1544V219.61H1545V219.7H1546V218.99H1547V214.24H1548V217.38H1549V214.53H1550V218.03H1551V218.46H1552V218.38H1553V218.87H1554V218.86H1555V219.71H1556V220.98H1557V221.5H1558V221.21H1559V224.95H1560V223.04H1561V223.61H1562V223.54H1563V224.82H1564V225.23H1565V225.7H1566V225.92H1567V225.54H1568V227.77H1569V227.44H1570V227.72H1571V227.37H1572V225.09H1573V225.37H1574V227.99H1575V228.08H1576V227.9H1577V227.89H1578V225.69H1579V227.16H1580V226.7H1581V226.53H1582V224.6H1583V223.71H1584V223.4H1585V224.46H1586V223.66H1587V223.05H1588V224.61H1589V225.13H1590V224.51H1591V224.34H1592V223.83H1593V225.22H1594V224.32H1595V224.92H1596V226.11H1597V226.5H1598V225.33H1599V225.44H1600V225.7H1601V226.42H1602V227.41H1603V226.3H1604V225.94H1605V226.03H1606V226.47H1607V225.82H1608V226.05H1609V227.74H1610V228.58H1611V228.68H1612V226.84H1613V226.92H1614V227.01H1615V228.25H1616V226H1617V225.51H1618V227.28H1619V228.48H1620V222.98H1621V223.95H1622V224.47H1623V223.63H1624V220.38H1625V220.2H1626V221.5H1627V222.6H1628V222.73H1629V222H1630V222.49H1631V221.48H1632V221.22H1633V216.94H1634V220.56H1635V219.96H1636V215.71H1637V216.27H1638V219.61H1639V222.06H1640V222.44H1641V223.3H1642V222.67H1643V222.75H1644V223.01H1645V223.29H1646V224.26H1647V223.81H1648V223.99H1649V226.05H1650V224.22H1651V224.5H1652V226.17H1653V226.92H1654V227.55H1655V226.53H1656V226.31H1657V225.45H1658V222.6H1659V225.05H1660V222.32H1661V223.19H1662V224.52H1663V223.37H1664V226.73H1665V226.26H1666V228.03H1667V225.96H1668V226.11H1669V225.95H1670V226.01H1671V229.21H1672V228.94H1673V228.76H1674V227.95H1675V228.03H1676V226.01H1677V226.35H1678V225.92H1679V224.93H1680V227.16H1681V227.09H1682V227.46H1683V225.23H1684V225.64H1685V225.73H1686V229.04H1687V227.98H1688V227.82H1689V225.56H1690V225.49H1691V225H1692V227.68H1693V227.42H1694V226.84H1695V223.86H1696V223.19H1697V222.33H1698V218.72H1699V219.23H1700V218.52H1701V221.22H1702V218.94H1703V217.09H1704V216.59H1705V214.86H1706V215.41H1707V218.94H1708V219.66H1709V220.24H1710V221.84H1711V222.86H1712V223.09H1713V221.18H1714V224.79H1715V222.26H1716V225.6H1717V223.76H1718V223.96H1719V223.6H1720V222.68H1721V221.03H1722V224.69H1723V224.15H1724V223.77H1725V224.12H1726V221.43H1727V221.85H1728V223.02H1729V223.56H1730V224.5H1731V226.71H1732V226.35H1733V226.17H1734V226.77H1735V226.39H1736V227.08H1737V225.98H1738V223.06H1739V225.41H1740V224.32H1741V222.46H1742V222.68H1743V223.27H1744V225.87H1745V226.18H1746V224.51H1747V224.66H1748V223.76H1749V226.53H1750V227.76H1751V227.9H1752V227.07H1753V227.42H1754V227.56H1755V227.76H1756V227.88H1757V228.36H1758V228.13H1759V229.73H1760V230.19H1761V230.59H1762V230.95H1763V231.74H1764V232.01H1765V232.21H1766V232H1767V232.23H1768V232.82H1769V233.3H1770V233.68H1771V232.31H1772V231.21H1773V229.09H1774V226.49H1775V224.61H1776V221.88H1777V224.93H1778V224.57H1779V224.48H1780V224.17H1781V224.57H1782V224.51H1783V224.59H1784V224.54H1785V221.55H1786V220.67H1787V219.23H1788V218.04H1789V218.22H1790V216.83H1791V220.57H1792V221.49H1793V222.22H1794V221.78H1795V223.78H1796V224.78H1797V221.65H1798V225.44H1799V222.52H1800V223.9H1801V224.47H1802V224.91H1803V224.93H1804V223.9H1805V224H1806V227.2H1807V226.67H1808V225.85H1809V225.72H1810V226.99H1811V226.73H1812V226.27H1813V225.65H1814V225.07H1815V225.17H1816V223.61H1817V226.2H1818V227.24H1819V226.37H1820V226.66H1821V228.17H1822V228.35H1823V228.39H1824V227.83H1825V227.68H1826V228.36H1827V226.43H1828V226.83H1829V227.26H1830V226.56H1831V227.35H1832V228.02H1833V228.24H1834V228.94H1835V231.1H1836V231.38H1837V231.58H1838V231.73H1839V229.49H1840V230.6H1841V229.45H1842V229.89H1843V229.43H1844V229.48H1845V232.12H1846V230.67H1847V231.98H1848V231.72H1849V231.71H1850V231.32H1851V231.49H1852V229.57H1853V227.41H1854V226.19H1855V225.2H1856V219.17H1857V218.52H1858V217.76H1859V217.33H1860V219.19H1861V221.39H1862V221.24H1863V219.83H1864V219.6H1865V217.71H1866V220.72H1867V219.01H1868V218.99H1869V218.51H1870V216.63H1871V217.72H1872V217.94H1873V216.41H1874V221.39H1875V220.01H1876V220.92H1877V220.81H1878V221.56H1879V223.06H1880V223.62H1881V225.64H1882V225.77H1883V225.8H1884V224.64H1885V225.26H1886V223.21H1887V222.97H1888V221.96H1889V222.57H1890V223.66H1891V224.39H1892V224.87H1893V225.95H1894V225.73H1895V227.23H1896V228.1H1897V226.79H1898V227.1H1899V229.43H1900V229.74H1901V229.03H1902V229.44H1903V229.87H1904V230.27H1905V230.53H1906V229.48H1907V230.05H1908V229.4H1909V229.66H1910V229.69H1911V229.6H1912V229.99H1913V228.96H1914V230.25H1915V229.66H1916V229.02H1917V225.56H1918V225.18H1919V224.41H1920V223.98H1921V223.12H1922V223.01H1923V220.71H1924V219.52H1925V219.97H1926V219.57H1927V219.66H1928V218.84H1929V216.89H1930V217.28H1931V217.99H1932V218.5H1933V220.82H1934V220.89H1935V220.36H1936V220.61H1937V218.86H1938V218.44H1939V223.47H1940V224.56H1941V222.04H1942V222.84H1943V223.56H1944V226.68H1945V225.85H1946V227H1947V227.4H1948V228.73H1949V228.51H1950V228.97H1951V227.83H1952V228.28H1953V228.26H1954V228.54H1955V230.48H1956V229.65H1957V230.02H1958V231.03H1959V229.64H1960V229.7H1961V230.82H1962V231.14H1963V231.85H1964V230.75H1965V231.51H1966V231.72H1967V232.19H1968V232.24H1969V232.39H1970V232.5H1971V232.69H1972V232.86H1973V232.4H1974V232.31H1975V233.6H1976V232.74H1977V233.51H1978V234.27H1979V233.6H1980V233.73H1981V234.28H1982V234.23H1983V235.75H1984V235.36H1985V234.89H1986V236.06H1987V236.34H1988V236.59H1989V236.44H1990V236.61H1991V236.45H1992V237.23H1993V236.58H1994V237.52H1995V237.6H1996V237.69H1997V237.77H1998V237.88H1999V237.99H2000V238.04H2001V238.11H2002V238.17H2003V238.21H2004V238.49H2005V238.54H2006V238.73H2007V238.84H2008V238.69H2009V238.97H2010V238.68H2011V238.89H2012V239.06H2013V239.03H2014V239.26H2015V239.04H2016V239.14H2017V239.18H2018V239.21H2019V239.51H2020V239.53H2021V239.4H2022V239.44H2023V239.47H2024V239.37H2025V239.62H2026V239.64H2027V239.46H2028V239.63H2029V239.71H2030V239.57H2031V239.57H2032V239.54H2033V239.42H2034V239.34H2035V239.51H2036V239.51H2037V239.25H2038V239.21H2039V239.32H2040V239.17H2041V238.73H2042V238.84H2043V238.68H2044V238.56H2045V238.44H2046V238.21H2047V238.24H2048V238.09H2049V237.99H2050V237.61H2051V237.59H2052V237.76H2053V237.94H2054V238.25H2055V238.47H2056V238.7H2057V238.98H2058V239.23H2059V239.46H2060V239.6H2061V239.53H2062V239.45H2063V239.2H2064V239.24H2065V239.05H2066V238.78H2067V238.66H2068V238.92H2069V238.59H2070V238.77H2071V238.42H2072V238.3H2073V238.68H2074V238.62H2075V238.78H2076V238.89H2077V238.86H2078V238.94H2079V239.06H2080V239.29H2081V238.79H2082V238.7H2083V238.84H2084V238.39H2085V238.21H2086V238.44H2087V238.86H2088V239.01H2089V239.21H2090V239.38H2091V239.42H2092V239.59H2093V239.91H2094V239.98H2095V239.98H2096V239.99H2097V240.03H2098V240.02H2099V240.15H2100V240.18H2101V240.11H2102V240.2H2103V240.21H2104V240.15H2105V240.14H2106V240.17H2107V240.24H2108V240.27H2109V240.24H2110V240.27H2111V240.28H2112V240.3H2113V240.3H2114V240.3H2115V240.3H2116V240.3H2117V240.3H2118V240.3H2119V240.3H2120V240.3H2121V240.3H2122V240.3H2123V240.3H2124V240.3H2125V240.3H2126V240.3H2127V240.3H2128V240.3H2129V240.3H2130V240.3H2131V240.3H2132V240.3H2133V240.3H2134V240.3H2135V240.3H2136V240.3H2137V240.3H2138V240.3H2139V240.3H2140V240.3H2141V240.3H2142V240.3H2143V240.3H2144V240.3H2145V240.3H2146V240.3H2147V240.3H2148V240.3H2149V240.3H2150V240.3H2151V240.3H2152V240.3H2153V240.3H2154V240.3H2155V240.3H2156V240.3H2157V240.3H2158V240.3H2159V240.3H2160V240.3H2161V240.3H2162V240.3H2163V240.3H2164V240.3H2165V240.3H2166V240.3H2167V240.3H2168V240.3H2169V240.3H2170V240.3H2171V240.3H2172V240.3H2173V240.3H2174V240.3H2175V240.3H2176V240.3H2177V240.3H2178V240.3H2179V240.3H2180V240.3H2181V240.3H2182V240.3H2183V240.3H2184V240.3H2185V240.3H2186V240.3H2187V240.3H2188V240.3H2189V240.3H2190V240.3H2191V240.3H2192V240.3H2193V240.3H2194V240.3H2195V240.3H2196V240.3H2197V240.3H2198V240.3H2199V240.3H2200V240.3H2201V240.3H2202V240.3H2203V240.3H2204V240.3H2205V240.3H2206V240.3H2207V240.3H2208V240.3H2209V240.3H2210V240.3H2211V240.3H2212V240.3H2213V240.3H2214V240.3H2215V240.3H2216V240.3H2217V240.3H2218V240.3H2219V240.3H2220V240.3H2221V240.3H2222V240.3H2223V240.3H2224V240.3H2225V240.3H2226V240.3H2227V240.3H2228V240.3H2229V240.3H2230V240.3H2231V240.3H2232V240.3H2233V240.3H2234V240.3H2235V240.3H2236V240.3H2237V240.3H2238V240.3H2239V240.3H2240V240.3H2241V240.3H2242V240.3H2243V240.3H2244V240.3H2245V240.3H2246V240.3H2247V240.3H2248V240.3H2249V240.3H2250V240.3H2251V240.3H2252V240.3H2253V240.3H2254V240.3H2255V240.3H2256V240.8V241.3H2255V241.3H2254V241.3H2253V241.3H2252V241.3H2251V241.3H2250V241.3H2249V241.3H2248V241.3H2247V241.3H2246V241.3H2245V241.3H2244V241.3H2243V241.3H2242V241.3H2241V241.3H2240V241.3H2239V241.3H2238V241.3H2237V241.3H2236V241.3H2235V241.3H2234V241.3H2233V241.3H2232V241.3H2231V241.3H2230V241.3H2229V241.3H2228V241.3H2227V241.3H2226V241.3H2225V241.3H2224V241.3H2223V241.3H2222V241.3H2221V241.3H2220V241.3H2219V241.3H2218V241.3H2217V241.3H2216V241.3H2215V241.3H2214V241.3H2213V241.3H2212V241.3H2211V241.3H2210V241.3H2209V241.3H2208V241.3H2207V241.3H2206V241.3H2205V241.3H2204V241.3H2203V241.3H2202V241.3H2201V241.3H2200V241.3H2199V241.3H2198V241.3H2197V241.3H2196V241.3H2195V241.3H2194V241.3H2193V241.3H2192V241.3H2191V241.3H2190V241.3H2189V241.3H2188V241.3H2187V241.3H2186V241.3H2185V241.3H2184V241.3H2183V241.3H2182V241.3H2181V241.3H2180V241.3H2179V241.3H2178V241.3H2177V241.3H2176V241.3H2175V241.3H2174V241.3H2173V241.3H2172V241.3H2171V241.3H2170V241.3H2169V241.3H2168V241.3H2167V241.3H2166V241.3H2165V241.3H2164V241.3H2163V241.3H2162V241.3H2161V241.3H2160V241.3H2159V241.3H2158V241.3H2157V241.3H2156V241.3H2155V241.3H2154V241.3H2153V241.3H2152V241.3H2151V241.3H2150V241.3H2149V241.3H2148V241.3H2147V241.3H2146V241.3H2145V241.3H2144V241.3H2143V241.3H2142V241.3H2141V241.3H2140V241.3H2139V241.3H2138V241.3H2137V241.3H2136V241.3H2135V241.3H2134V241.3H2133V241.3H2132V241.3H2131V241.3H2130V241.3H2129V241.3H2128V241.3H2127V241.3H2126V241.3H2125V241.3H2124V241.3H2123V241.3H2122V241.3H2121V241.3H2120V241.3H2119V241.3H2118V241.3H2117V241.3H2116V241.3H2115V241.3H2114V241.3H2113V241.3H2112V241.3H2111V241.3H2110V241.3H2109V241.3H2108V241.3H2107V241.3H2106V241.35H2105V241.33H2104V241.4H2103V241.42H2102V241.43H2101V241.49H2100V241.34H2099V241.35H2098V241.36H2097V241.5H2096V241.5H2095V241.51H2094V241.72H2093V241.99H2092V242.23H2091V242.46H2090V242.84H2089V242.75H2088V243.03H2087V243.74H2086V244.05H2085V243.36H2084V243.41H2083V243.3H2082V243H2081V242.67H2080V242.78H2079V242.99H2078V243.12H2077V243.22H2076V243.31H2075V243.07H2074V243.69H2073V243.83H2072V243.51H2071V243.51H2070V243.7H2069V243.33H2068V243.2H2067V243.08H2066V243.22H2065V242.8H2064V242.62H2063V242.7H2062V242.49H2061V242.32H2060V242.48H2059V242.81H2058V243.11H2057V243.43H2056V243.7H2055V244.15H2054V243.98H2053V244.39H2052V244.73H2051V245.04H2050V244.81H2049V244.55H2048V244.15H2047V243.96H2046V244.3H2045V243.52H2044V243.36H2043V243.17H2042V242.96H2041V242.76H2040V242.55H2039V242.43H2038V242.47H2037V242.48H2036V242.47H2035V242.48H2034V242.49H2033V242.55H2032V242.6H2031V242.44H2030V242.69H2029V242.75H2028V242.37H2027V242.34H2026V242.29H2025V242.43H2024V242.28H2023V242.21H2022V242.27H2021V242.26H2020V242.26H2019V242.26H2018V242.35H2017V242.22H2016V242.42H2015V242.51H2014V242.68H2013V242.77H2012V242.92H2011V243.03H2010V243.08H2009V242.81H2008V242.86H2007V243.06H2006V242.89H2005V242.94H2004V243.01H2003V243.8H2002V243.91H2001V243.63H2000V244.03H1999V243.85H1998V243.99H1997V243.99H1996V244.01H1995V244.1H1994V243.94H1993V244.46H1992V244.91H1991V245.09H1990V244.93H1989V245.1H1988V244.94H1987V245.15H1986V245.39H1985V246.32H1984V246.25H1983V246.42H1982V245.66H1981V247.01H1980V247.27H1979V246.58H1978V247.74H1977V247.08H1976V246.71H1975V246.84H1974V247.15H1973V247.24H1972V247.7H1971V248.84H1970V248.67H1969V249.04H1968V248.69H1967V248.9H1966V248.35H1965V248.47H1964V248.89H1963V249.36H1962V249.64H1961V248.92H1960V249.08H1959V251.53H1958V250.82H1957V251.42H1956V251.31H1955V252.56H1954V253.08H1953V252.85H1952V252.57H1951V252.6H1950V252.86H1949V253.06H1948V254.48H1947V252.52H1946V252.51H1945V253.31H1944V254.86H1943V253.01H1942V255.09H1941V253.6H1940V255.96H1939V256.56H1938V257.32H1937V257.84H1936V254.59H1935V257.51H1934V258.49H1933V258.43H1932V258.47H1931V255.93H1930V258.41H1929V259.48H1928V261.99H1927V261.79H1926V262.27H1925V261.62H1924V261.54H1923V261.99H1922V262.01H1921V261.32H1920V259.85H1919V256.91H1918V256.52H1917V252.21H1916V253.6H1915V251.95H1914V250.36H1913V250.14H1912V248.95H1911V247.86H1910V247.35H1909V249.17H1908V249.73H1907V250.27H1906V250.89H1905V251.02H1904V250.06H1903V250.8H1902V250.47H1901V251.32H1900V251.61H1899V252.78H1898V251.05H1897V251.44H1896V250.91H1895V250.87H1894V251.64H1893V251.39H1892V252.28H1891V251.52H1890V250.49H1889V250.98H1888V251.24H1887V252.07H1886V253.2H1885V255.07H1884V255.18H1883V256.18H1882V253.94H1881V257.12H1880V258.25H1879V256.88H1878V258.26H1877V259.59H1876V260.21H1875V264.45H1874V265.47H1873V264.69H1872V264.86H1871V265.22H1870V261.52H1869V261.73H1868V264.34H1867V260.27H1866V262.29H1865V260.17H1864V259.88H1863V259.84H1862V257.72H1861V260.55H1860V260.69H1859V260.42H1858V260.12H1857V259.63H1856V256.24H1855V255.48H1854V252.76H1853V251.35H1852V249.72H1851V248.96H1850V249.14H1849V248.03H1848V247.41H1847V247.46H1846V247.75H1845V247.73H1844V247.82H1843V247.31H1842V247.15H1841V247.87H1840V247.42H1839V248.97H1838V249.36H1837V249.74H1836V250.21H1835V249.56H1834V250.82H1833V251.85H1832V251.2H1831V250.12H1830V251.19H1829V251.21H1828V251.27H1827V253.51H1826V251.83H1825V252.31H1824V253.01H1823V253.84H1822V254.22H1821V256.66H1820V255.53H1819V254.84H1818V254.2H1817V253.17H1816V250.58H1815V250.31H1814V251.02H1813V249.93H1812V251.23H1811V251.8H1810V253.34H1809V253.09H1808V254.09H1807V253.46H1806V253.9H1805V252.6H1804V254.75H1803V254.45H1802V255.57H1801V255.87H1800V256.18H1799V254.95H1798V257.45H1797V256.2H1796V257.4H1795V260.52H1794V260.94H1793V261.98H1792V263.34H1791V262.76H1790V265.79H1789V265.91H1788V262.91H1787V265.68H1786V261.48H1785V261.42H1784V261.01H1783V261.3H1782V263.58H1781V260.58H1780V258.01H1779V256.1H1778V256.27H1777V253.63H1776V254.81H1775V253.86H1774V252.8H1773V251.92H1772V250.77H1771V250.84H1770V249.06H1769V247.99H1768V247.54H1767V247.27H1766V247.55H1765V248.03H1764V248.91H1763V249.58H1762V248.3H1761V249.56H1760V250.05H1759V251.36H1758V250.31H1757V252.01H1756V250.32H1755V251.18H1754V252.71H1753V251.34H1752V251.6H1751V253.38H1750V253.96H1749V253.06H1748V253.17H1747V255.52H1746V256.04H1745V253.37H1744V255.77H1743V254.71H1742V256.33H1741V253.66H1740V256.53H1739V256.54H1738V255.09H1737V255.14H1736V255.35H1735V253.28H1734V253.47H1733V256.11H1732V256.35H1731V255.57H1730V255.04H1729V255.65H1728V256.22H1727V255.25H1726V257.92H1725V257.72H1724V259.62H1723V258.48H1722V260.66H1721V260.93H1720V258.18H1719V259.28H1718V258.09H1717V259.15H1716V256.81H1715V257.28H1714V259.53H1713V259.72H1712V256.74H1711V257.39H1710V259.05H1709V259.58H1708V258.38H1707V259.47H1706V260.25H1705V261.39H1704V259.38H1703V257.43H1702V258.28H1701V256.42H1700V254.93H1699V252.13H1698V251.16H1697V251.41H1696V253.72H1695V253.83H1694V255.11H1693V253.78H1692V255.94H1691V256.88H1690V257.04H1689V257.32H1688V254.61H1687V254.76H1686V254.24H1685V254.39H1684V257.38H1683V257.05H1682V256.96H1681V253.41H1680V253.32H1679V253.66H1678V253.83H1677V252.54H1676V252.15H1675V253.97H1674V253.62H1673V253.41H1672V253.39H1671V253.53H1670V252.41H1669V252.78H1668V252.62H1667V254.47H1666V255.17H1665V256.84H1664V259.28H1663V261.21H1662V262.4H1661V258.49H1660V259.74H1659V259.33H1658V259.13H1657V256.07H1656V255.68H1655V254.74H1654V255.42H1653V255.22H1652V255.54H1651V255.54H1650V255.71H1649V256.7H1648V256.75H1647V255.82H1646V256.1H1645V255.23H1644V254.64H1643V255.36H1642V255.67H1641V256H1640V256.62H1639V258.06H1638V256.56H1637V257.88H1636V258.57H1635V257.35H1634V258.98H1633V260.45H1632V260.93H1631V260.69H1630V260.98H1629V258.56H1628V258.37H1627V259.14H1626V258.06H1625V254.64H1624V254.31H1623V255.89H1622V255.35H1621V254.55H1620V252.09H1619V253.65H1618V253.3H1617V253.45H1616V252.73H1615V250.86H1614V250.84H1613V250.75H1612V251.08H1611V251.84H1610V251.2H1609V251.17H1608V251.16H1607V251.55H1606V251.04H1605V251.28H1604V250.66H1603V252.08H1602V252.96H1601V251.48H1600V253.25H1599V253.3H1598V254.16H1597V253.81H1596V251.38H1595V253.11H1594V253.46H1593V252.62H1592V253.04H1591V254.98H1590V255.01H1589V253.21H1588V253.7H1587V252.59H1586V253.92H1585V254.98H1584V254.07H1583V254.66H1582V253.61H1581V253.63H1580V253.21H1579V253.44H1578V253.42H1577V252.27H1576V254.61H1575V254.13H1574V253.48H1573V253.96H1572V255H1571V255.65H1570V255.05H1569V253.66H1568V253.91H1567V255.23H1566V255.91H1565V257.17H1564V261.77H1563V260.43H1562V261.5H1561V262.8H1560V264.48H1559V262.01H1558V261.74H1557V261.52H1556V265.01H1555V262.78H1554V263.79H1553V263.83H1552V262.65H1551V264.86H1550V262.04H1549V260.99H1548V258.03H1547V261.16H1546V260.36H1545V257.52H1544V256.52H1543V255.76H1542V257.98H1541V256.24H1540V254.7H1539V256.61H1538V253.76H1537V254.97H1536V254.97H1535V254.6H1534V255.19H1533V254.43H1532V252.09H1531V251.58H1530V251.25H1529V253H1528V251.77H1527V251.14H1526V249.54H1525V251.57H1524V252.07H1523V249.76H1522V250.89H1521V250.77H1520V250.16H1519V251.41H1518V251.2H1517V249.93H1516V249.98H1515V251.12H1514V250.21H1513V251.21H1512V250.97H1511V249.97H1510V252.41H1509V252.55H1508V253.12H1507V252.57H1506V252.66H1505V253.61H1504V253.35H1503V253.63H1502V252.71H1501V254.07H1500V254.34H1499V251.66H1498V252.92H1497V253.23H1496V253.28H1495V251.86H1494V252.3H1493V253.02H1492V253.86H1491V254.63H1490V258.78H1489V255.67H1488V256.47H1487V257.51H1486V257.92H1485V257.35H1484V261.04H1483V260.63H1482V259.57H1481V263.33H1480V262.75H1479V262.63H1478V263.7H1477V264.51H1476V262.3H1475V262.44H1474V261.09H1473V262.48H1472V259.01H1471V257.95H1470V257.23H1469V255.69H1468V254.59H1467V253.48H1466V252.54H1465V253.16H1464V250.33H1463V250.32H1462V251.31H1461V251.08H1460V251.15H1459V251.49H1458V251.3H1457V252.62H1456V252.39H1455V250.42H1454V250.59H1453V250.42H1452V250.16H1451V250.25H1450V250.7H1449V251.15H1448V251.51H1447V252.5H1446V252.18H1445V251.65H1444V250.87H1443V253.08H1442V254.15H1441V254.43H1440V254.75H1439V255.07H1438V255.78H1437V254.35H1436V254.77H1435V257.05H1434V256.87H1433V254.84H1432V254.23H1431V254.07H1430V252.28H1429V252.18H1428V252.09H1427V253.25H1426V255.14H1425V255.67H1424V255.36H1423V256.28H1422V256.32H1421V254.57H1420V254.32H1419V253.18H1418V254.44H1417V254.03H1416V254.44H1415V255.08H1414V253.26H1413V253.76H1412V255.69H1411V255.34H1410V257.24H1409V256.92H1408V257.3H1407V258.09H1406V255.86H1405V258.46H1404V258.47H1403V259.15H1402V259.66H1401V258.16H1400V258.86H1399V262.78H1398V263.77H1397V264.68H1396V263.41H1395V266.29H1394V264.25H1393V263.73H1392V263.95H1391V261.75H1390V260.06H1389V256.75H1388V252.79H1387V251.09H1386V250.45H1385V249.78H1384V249.06H1383V249.23H1382V250.23H1381V250.28H1380V250.38H1379V249.95H1378V250.17H1377V251.32H1376V251.47H1375V250.95H1374V249.97H1373V250.21H1372V251.36H1371V251.17H1370V251.45H1369V251.64H1368V251.64H1367V250.48H1366V250.63H1365V250.83H1364V251.06H1363V251.13H1362V251.32H1361V251.43H1360V252.26H1359V254.01H1358V251.68H1357V252.67H1356V252.79H1355V251.01H1354V250.69H1353V250.55H1352V250.54H1351V250.32H1350V252.11H1349V252.5H1348V252.28H1347V253.58H1346V251.37H1345V253.12H1344V253.47H1343V253.9H1342V253.17H1341V253.71H1340V254.11H1339V254.39H1338V254.7H1337V255.81H1336V255.05H1335V255.66H1334V257.06H1333V257.5H1332V255.26H1331V256.56H1330V257.5H1329V258.27H1328V259.45H1327V259.66H1326V257.13H1325V258.25H1324V260.99H1323V261.94H1322V263.56H1321V265.16H1320V266.61H1319V266.61H1318V265.22H1317V263.53H1316V261.5H1315V257.88H1314V258.62H1313V255.46H1312V254.38H1311V252.52H1310V249.43H1309V249.75H1308V248.2H1307V248.74H1306V249.12H1305V249.31H1304V249.43H1303V248.87H1302V249.03H1301V249.48H1300V249.61H1299V249.88H1298V249.4H1297V249.17H1296V249.07H1295V249.09H1294V249.44H1293V249.4H1292V247.76H1291V248.44H1290V248.7H1289V248.88H1288V249.07H1287V249.23H1286V249.47H1285V249.76H1284V251.61H1283V251.91H1282V252.47H1281V251.31H1280V254H1279V253.17H1278V252.44H1277V252.88H1276V253.88H1275V254.09H1274V254.12H1273V254.09H1272V253.56H1271V253.2H1270V252.56H1269V252.73H1268V252.65H1267V252.39H1266V252.14H1265V251.88H1264V250.26H1263V251.85H1262V252.63H1261V254.47H1260V254.37H1259V253.67H1258V253.51H1257V254.64H1256V254.31H1255V252.35H1254V253.59H1253V252.77H1252V252.85H1251V255.29H1250V256.19H1249V257.02H1248V255.68H1247V255.64H1246V257.74H1245V258.32H1244V257.62H1243V255.56H1242V255.28H1241V253.3H1240V254.75H1239V254.41H1238V254.22H1237V251.73H1236V249.78H1235V247.07H1234V246.3H1233V245.59H1232V245.39H1231V245.95H1230V245.87H1229V246.29H1228V246.48H1227V246.06H1226V246.4H1225V246.87H1224V247.46H1223V246.79H1222V247.86H1221V249.27H1220V248.41H1219V249.51H1218V250.49H1217V250.67H1216V249.79H1215V249.02H1214V249.37H1213V250.67H1212V250.99H1211V250.7H1210V251.56H1209V251.86H1208V251.18H1207V251.52H1206V253.38H1205V252.74H1204V253.07H1203V254.75H1202V252.62H1201V253.5H1200V253.33H1199V255.28H1198V253.38H1197V254.23H1196V251.79H1195V253.32H1194V251.39H1193V252.58H1192V253.83H1191V252.73H1190V252.68H1189V252.91H1188V252.93H1187V253.47H1186V253.9H1185V252.09H1184V253.61H1183V253.99H1182V252.09H1181V252.96H1180V254.29H1179V255.52H1178V252.47H1177V253.26H1176V253.92H1175V254.86H1174V256.62H1173V256.86H1172V255.62H1171V255.88H1170V257.39H1169V258.17H1168V259.24H1167V260.16H1166V262.14H1165V260.68H1164V260.03H1163V259.45H1162V258.54H1161V257.4H1160V258.63H1159V257.42H1158V250.46H1157V245.56H1156V244.17H1155V244.11H1154V245.25H1153V245.32H1152V244.95H1151V246.09H1150V246.19H1149V246.63H1148V247.28H1147V247.5H1146V247.75H1145V247.96H1144V248.31H1143V247.98H1142V247.84H1141V248.69H1140V249.15H1139V249.51H1138V249.49H1137V249.67H1136V250.44H1135V250.96H1134V250.22H1133V252.59H1132V253.02H1131V253.63H1130V254.15H1129V254.16H1128V254.01H1127V253.81H1126V251.81H1125V252.12H1124V251.2H1123V251.21H1122V251.19H1121V253.05H1120V250.42H1119V250.52H1118V253.44H1117V253.28H1116V250.31H1115V252.01H1114V250.54H1113V250.58H1112V250.79H1111V251.6H1110V251.04H1109V251.07H1108V251.34H1107V251.43H1106V251.62H1105V252.42H1104V253.47H1103V252.64H1102V252.8H1101V253.28H1100V252.57H1099V253.14H1098V255.76H1097V254.44H1096V255.01H1095V256.74H1094V255.47H1093V256.71H1092V257.66H1091V260.24H1090V259.8H1089V260.21H1088V260.54H1087V259.06H1086V257.97H1085V256.02H1084V254.74H1083V253.79H1082V253.39H1081V251H1080V248.61H1079V246.65H1078V245.98H1077V246.41H1076V245.72H1075V245.94H1074V246.1H1073V246.83H1072V247.03H1071V247.28H1070V247.46H1069V248.06H1068V246.5H1067V246.73H1066V247.91H1065V247.28H1064V248.33H1063V248.53H1062V248.82H1061V249.24H1060V249.55H1059V249.93H1058V250.38H1057V249.07H1056V249.08H1055V249.47H1054V249.72H1053V250.02H1052V251.73H1051V252.28H1050V252.34H1049V252.4H1048V253.12H1047V252.17H1046V252.35H1045V253.99H1044V252.36H1043V253.76H1042V253.25H1041V252.97H1040V252.21H1039V254.1H1038V252.89H1037V251.91H1036V251.89H1035V251.93H1034V252.39H1033V254.85H1032V252.2H1031V253.6H1030V254.07H1029V252.17H1028V252.86H1027V253.53H1026V255.04H1025V256.21H1024V256.47H1023V256.8H1022V257.96H1021V255.71H1020V258.57H1019V258.57H1018V257.93H1017V257.76H1016V256.98H1015V256.83H1014V256.53H1013V253.77H1012V253.31H1011V253.84H1010V253.34H1009V252.81H1008V252.43H1007V252.53H1006V250.36H1005V248.3H1004V246.7H1003V244.18H1002V244.38H1001V245.16H1000V245.31H999V245.65H998V245.65H997V245.02H996V245.21H995V246.39H994V246.75H993V246.92H992V246.56H991V246.13H990V246.52H989V246.64H988V246.17H987V245.99H986V246.49H985V246.46H984V247.5H983V247.2H982V247.42H981V247.59H980V247.69H979V247.88H978V248.8H977V248.01H976V247.99H975V248.06H974V248.15H973V247.86H972V247.98H971V248.02H970V248.56H969V249.33H968V249.29H967V249.37H966V249.69H965V249.61H964V249.58H963V249.65H962V249.87H961V250.04H960V249.85H959V251.21H958V249.73H957V250.14H956V251.32H955V250.85H954V251.03H953V251.75H952V252.85H951V251.89H950V251.96H949V252.45H948V252.64H947V253H946V254.89H945V253.27H944V254.14H943V254.79H942V255.27H941V255.33H940V255.02H939V256.85H938V257.47H937V258.78H936V257.75H935V254.33H934V255.61H933V254.58H932V253.72H931V253.09H930V252.87H929V252.12H928V249.64H927V247.96H926V245.07H925V244.71H924V245.23H923V245.46H922V245.78H921V246.39H920V246.56H919V247.45H918V246.9H917V247.07H916V248.12H915V248.81H914V248.48H913V248.59H912V248.51H911V247.53H910V248.25H909V248.24H908V248.36H907V247.49H906V247.64H905V248.43H904V248.95H903V249.46H902V249.19H901V248.94H900V249.37H899V249.63H898V248.64H897V249.76H896V250.01H895V249.3H894V249.58H893V249.94H892V250.98H891V250.92H890V250.44H889V249.4H888V251.19H887V251.42H886V252.01H885V251.2H884V252.49H883V252.08H882V252.48H881V252.41H880V250.66H879V251.74H878V251.62H877V250.49H876V250.53H875V250.07H874V250.06H873V250.9H872V250.51H871V252.1H870V250.85H869V252H868V252.56H867V252.57H866V252.18H865V252.42H864V253.02H863V252.52H862V253.01H861V252.25H860V252.79H859V253H858V252.9H857V253.23H856V253.67H855V252.67H854V252.43H853V251.87H852V250.77H851V249.31H850V248.75H849V248.16H848V247.4H847V246.61H846V245.93H845V246.29H844V245.77H843V245.86H842V246.23H841V247.14H840V247.51H839V247.34H838V247.82H837V247.96H836V248.08H835V248.19H834V247.99H833V248.76H832V249.08H831V248.77H830V247.7H829V247.74H828V248.77H827V249.57H826V250.04H825V250.51H824V250.28H823V250.89H822V252.5H821V251.59H820V252.31H819V253.1H818V255.17H817V255.95H816V257.26H815V256.09H814V256.56H813V258.33H812V257H811V256.46H810V252.8H809V252.33H808V252.73H807V251.76H806V248.77H805V250.75H804V250.58H803V250.34H802V250.61H801V252.51H800V252.76H799V252.76H798V250.83H797V251.55H796V251.26H795V251.33H794V252.82H793V252.92H792V251.58H791V250.98H790V252.51H789V252.73H788V252.38H787V253.66H786V253.72H785V254.06H784V254.37H783V254.21H782V253.04H781V252.02H780V252.04H779V251.72H778V251.74H777V251.72H776V252.56H775V251.41H774V251.64H773V248.73H772V247.31H771V245.03H770V244.39H769V244.84H768V244.74H767V245.23H766V245.47H765V245.63H764V245.92H763V246.16H762V245.92H761V246.11H760V246.82H759V246.95H758V247.1H757V246.98H756V247.37H755V247.1H754V246.95H753V247.46H752V248.08H751V248.17H750V249.19H749V248.93H748V248.36H747V249.88H746V250.28H745V250.76H744V249.7H743V250.06H742V251.8H741V250.06H740V251.86H739V252.13H738V249.76H737V250.04H736V251.96H735V250.11H734V249.55H733V249.27H732V249.08H731V251.36H730V251.52H729V250.99H728V250.94H727V251.5H726V250.98H725V252.31H724V252.64H723V253.76H722V254.29H721V253.74H720V254.47H719V256.5H718V257.4H717V255.71H716V257.9H715V258.11H714V258.03H713V259.46H712V259.91H711V256.82H710V256.51H709V256.48H708V255.29H707V254.45H706V253.81H705V250.78H704V249.86H703V251.34H702V249.89H701V250.07H700V249.84H699V250.11H698V250.33H697V251.09H696V252.66H695V251.22H694V251.65H693V251.41H692V250.35H691V250.23H690V249.5H689V249.9H688V250.11H687V250.44H686V250.79H685V251.49H684V251.5H683V251.28H682V251.23H681V249.94H680V249.92H679V249.87H678V249.69H677V251.89H676V250H675V250.48H674V251.56H673V250.68H672V251.15H671V253.36H670V253.62H669V252.72H668V252.88H667V252.9H666V253.04H665V251.22H664V250.99H663V252.72H662V250.33H661V251.21H660V250.9H659V250.45H658V249.05H657V248.58H656V247.06H655V245.14H654V244.98H653V245.76H652V245.88H651V245.84H650V245.16H649V246.07H648V245.65H647V246.32H646V245.91H645V246.03H644V245.71H643V245.71H642V245.76H641V246.74H640V246.62H639V246.39H638V246.31H637V246.66H636V246.61H635V245.92H634V246.02H633V247.18H632V246.04H631V247.08H630V246.16H629V246.11H628V246.2H627V246.04H626V246.08H625V246.04H624V246.12H623V246.23H622V246.28H621V245.98H620V246.09H619V246.76H618V246.15H617V246.8H616V246.65H615V246.64H614V246.42H613V247.07H612V248.13H611V248.09H610V248.14H609V248.71H608V249.37H607V251.59H606V251.44H605V250.81H604V250.55H603V250.24H602V250H601V248.83H600V248.37H599V247.86H598V248.32H597V249.12H596V249.83H595V250.26H594V251.46H593V250.55H592V252H591V251.12H590V251.23H589V251.07H588V251.52H587V251.59H586V251.73H585V252.38H584V251.81H583V252.89H582V251.32H581V249.92H580V249.09H579V247.39H578V245.91H577V246.45H576V246.11H575V246.76H574V246.43H573V245.58H572V245.59H571V245.54H570V245.94H569V245.89H568V245.91H567V245.5H566V246.14H565V247.15H564V247.7H563V248.55H562V247.73H561V249.27H560V249.95H559V248.91H558V250.28H557V250.95H556V251.42H555V252.68H554V253.17H553V253.82H552V254.35H551V254.6H550V254.8H549V255.37H548V253.73H547V253.54H546V254.97H545V253.19H544V254.03H543V253.49H542V254.06H541V253.59H540V251.08H539V250.33H538V249.81H537V249.06H536V248.46H535V248.63H534V249.1H533V249.16H532V247.65H531V247.05H530V247.13H529V247.6H528V246.95H527V247.66H526V247.65H525V248.09H524V247.46H523V247.84H522V248.24H521V249.83H520V250.89H519V251.54H518V250.7H517V251.23H516V250.64H515V251.24H514V250.97H513V251.82H512V253.4H511V253.61H510V252.35H509V254.92H508V252.21H507V252.61H506V254.47H505V254.67H504V255.18H503V253.25H502V250.79H501V248.62H500V246.44H499V245.92H498V247.15H497V245.61H496V245.76H495V245.83H494V245.96H493V245.97H492V245.92H491V246.01H490V246.28H489V246.46H488V246.45H487V246.24H486V246.22H485V245.7H484V246.19H483V245.56H482V245.41H481V245.4H480V245.21H479V246.12H478V246.15H477V245.47H476V245.18H475V245.29H474V245.32H473V245.85H472V245.24H471V245.17H470V245.07H469V245.45H468V245.47H467V245.37H466V245.42H465V245.16H464V244.78H463V244.75H462V244.94H461V244.62H460V244.83H459V245.7H458V245.65H457V245.28H456V245.91H455V245.86H454V246.05H453V246.55H452V246.65H451V246.81H450V247.44H449V247.88H448V248.11H447V248.18H446V249.48H445V248.54H444V249H443V249.86H442V248.74H441V250.56H440V250.57H439V250.68H438V249.65H437V249.73H436V251.04H435V251.88H434V252.21H433V252.27H432V252.09H431V251.61H430V251.07H429V250.84H428V250.27H427V249.31H426V247.65H425V247.22H424V246.94H423V246.58H422V247.62H421V247.35H420V246.18H419V247.22H418V247.23H417V246.11H416V246.56H415V246.8H414V248.88H413V249.17H412V249.74H411V250.19H410V250.5H409V249.42H408V249.4H407V249.88H406V249.13H405V249.33H404V249.3H403V248.56H402V249.68H401V249.57H400V248.76H399V248.93H398V248.81H397V248.96H396V249.11H395V249.15H394V250.03H393V248.55H392V250.5H391V250.49H390V250.68H389V250.98H388V250.65H387V251.21H386V252.05H385V251.36H384V251.92H383V252.34H382V251.58H381V251.93H380V251.55H379V250.44H378V249.84H377V248.98H376V248.21H375V247.31H374V246.95H373V245.92H372V246.77H371V246.87H370V247.36H369V246.8H368V246.87H367V247.27H366V247.44H365V248.64H364V248.56H363V248.72H362V249.15H361V250.17H360V250.63H359V250.01H358V250.63H357V250.65H356V251H355V251.65H354V251.65H353V251.91H352V251.77H351V251.17H350V250.98H349V251.43H348V250.66H347V249.31H346V248.36H345V248.23H344V247.9H343V247.11H342V246.82H341V246.83H340V246.55H339V245.78H338V245.68H337V245.62H336V246.02H335V245.99H334V245.89H333V245.96H332V245.72H331V245.55H330V245.82H329V245.37H328V245.37H327V244.93H326V245.15H325V245.14H324V245.01H323V244.65H322V244.66H321V244.57H320V245.09H319V245.14H318V244.36H317V244.36H316V244.96H315V244.64H314V244.18H313V244.25H312V244.84H311V245H310V245.08H309V245.64H308V245.75H307V245.32H306V245.37H305V245.9H304V245.94H303V245.22H302V245.41H301V245.5H300V246.1H299V246.18H298V246.28H297V246.39H296V245.88H295V246.07H294V246.1H293V246.14H292V246.28H291V246.78H290V248.01H289V248.24H288V248.37H287V248.9H286V248.36H285V249.89H284V250.37H283V251.29H282V252.82H281V252.19H280V253.36H279V256.22H278V257.1H277V255.48H276V253.17H275V252.32H274V253.4H273V253.32H272V251.26H271V249.02H270V249.97H269V248.09H268V248.25H267V247.09H266V247.6H265V245.94H264V245.89H263V246.84H262V246.38H261V246.53H260V247.39H259V247.42H258V246.9H257V246.77H256V246.24H255V245.89H254V245.66H253V245.61H252V245.39H251V245.14H250V245.66H249V246.62H248V247.08H247V247.83H246V248.99H245V248.81H244V249.51H243V248.43H242V247.86H241V246.86H240V247.17H239V246.59H238V246.28H237V246.07H236V246H235V245.87H234V246.01H233V246.31H232V246.21H231V246.27H230V246.67H229V246.97H228V247.27H227V247.53H226V247.79H225V249.29H224V249.52H223V248.75H222V249.19H221V250.45H220V250.92H219V251.44H218V249.85H217V249.44H216V249.08H215V248.52H214V249.55H213V249.14H212V249H211V248.19H210V248.97H209V248.89H208V247.47H207V248.03H206V249.01H205V249.46H204V249.72H203V250.75H202V250.5H201V249.92H200V250.48H199V250.97H198V251.98H197V251.7H196V251.73H195V249.91H194V249.86H193V250.13H192V249.78H191V249.47H190V249.41H189V250.22H188V248.12H187V248.37H186V248.18H185V247.94H184V247.25H183V248.21H182V248.09H181V247.81H180V247.3H179V247.9H178V247.11H177V247.04H176V246.6H175V245.6H174V246.26H173V245.62H172V245.25H171V245.08H170V244.67H169V244.81H168V244.79H167V244.96H166V244.73H165V244.7H164V244.65H163V244.34H162V244.66H161V244.37H160V244.33H159V244.28H158V244.7H157V244.97H156V245.14H155V244.57H154V244.66H153V244.81H152V246.11H151V245.69H150V245.77H149V245.88H148V246.52H147V246.4H146V246.69H145V246.82H144V246.9H143V247H142V247.7H141V247.88H140V247.31H139V247.51H138V247.99H137V248.26H136V248.07H135V248.94H134V249.15H133V248.45H132V249.04H131V249.44H130V250.42H129V250.84H128V251.88H127V251.35H126V251.9H125V253.41H124V252.28H123V254.28H122V251.53H121V251.57H120V251.87H119V251.5H118V250.38H117V247.03H116V246.2H115V245.96H114V244.95H113V244.33H112V244.6H111V244.49H110V244.68H109V244.5H108V244.69H107V244.83H106V244.63H105V244.65H104V245.32H103V245.31H102V245.23H101V245.25H100V245.09H99V245.24H98V244.89H97V244.83H96V243.94H95V244.05H94V244.27H93V244.21H92V244.14H91V243.93H90V243.84H89Z" fill="#a9aab5" />
<rect x="89" y="211" width="4.6" height="60" fill="#f0b02a" />
<rect x="2250" y="211" width="4.6" height="60" fill="#f0b02a" />
<line x1="1259.2" y1="210" x2="1259.2" y2="271.4" stroke="#e0705a" stroke-width="2" />
<rect x="1125.8" y="323" width="710.8" height="229.3" fill="rgba(62,139,211,0.182)" />
<rect x="1125.8" y="565" width="710.8" height="229.3" fill="rgba(62,139,211,0.182)" />
<rect x="1125.8" y="552.3" width="710.8" height="12.7" fill="rgba(62,139,211,0.12)" />
<line x1="1126.1" y1="323" x2="1126.1" y2="794.3" stroke="#4a7eb2" stroke-width="1.7" />
<line x1="1836.5" y1="323" x2="1836.5" y2="794.3" stroke="#4a7eb2" stroke-width="1.7" />
<line x1="591.1" y1="323" x2="591.1" y2="794.3" stroke="#c42ccb" stroke-width="2.2" />
<line x1="1289.9" y1="318" x2="1289.9" y2="794.3" stroke="#c63c3a" stroke-width="2" />
<path d="M1282.2,298.3 h13.8 q1,0 1,1 v14.6 l-5.6,7.6 q-1.6,1.6 -3.2,0 l-5.6,-7.6 v-14.6 q0,-1 1,-1 Z" fill="#dc3430" />
<line x1="213.8" y1="301.6" x2="213.8" y2="323" stroke="#c9cad2" stroke-width="1.8" />
<line x1="251.1" y1="317.4" x2="251.1" y2="323" stroke="#c9cad2" stroke-width="1.6" />
<line x1="288.4" y1="317.4" x2="288.4" y2="323" stroke="#c9cad2" stroke-width="1.6" />
<line x1="325.7" y1="317.4" x2="325.7" y2="323" stroke="#c9cad2" stroke-width="1.6" />
<line x1="363" y1="317.4" x2="363" y2="323" stroke="#c9cad2" stroke-width="1.6" />
<line x1="400.3" y1="317.4" x2="400.3" y2="323" stroke="#c9cad2" stroke-width="1.6" />
<line x1="437.6" y1="317.4" x2="437.6" y2="323" stroke="#c9cad2" stroke-width="1.6" />
<line x1="474.9" y1="317.4" x2="474.9" y2="323" stroke="#c9cad2" stroke-width="1.6" />
<line x1="512.2" y1="317.4" x2="512.2" y2="323" stroke="#c9cad2" stroke-width="1.6" />
<line x1="549.5" y1="317.4" x2="549.5" y2="323" stroke="#c9cad2" stroke-width="1.6" />
<line x1="586.8" y1="301.6" x2="586.8" y2="323" stroke="#c9cad2" stroke-width="1.8" />
<line x1="624.1" y1="317.4" x2="624.1" y2="323" stroke="#c9cad2" stroke-width="1.6" />
<line x1="661.4" y1="317.4" x2="661.4" y2="323" stroke="#c9cad2" stroke-width="1.6" />
<line x1="698.7" y1="317.4" x2="698.7" y2="323" stroke="#c9cad2" stroke-width="1.6" />
<line x1="736" y1="317.4" x2="736" y2="323" stroke="#c9cad2" stroke-width="1.6" />
<line x1="773.3" y1="317.4" x2="773.3" y2="323" stroke="#c9cad2" stroke-width="1.6" />
<line x1="810.6" y1="317.4" x2="810.6" y2="323" stroke="#c9cad2" stroke-width="1.6" />
<line x1="847.9" y1="317.4" x2="847.9" y2="323" stroke="#c9cad2" stroke-width="1.6" />
<line x1="885.2" y1="317.4" x2="885.2" y2="323" stroke="#c9cad2" stroke-width="1.6" />
<line x1="922.5" y1="317.4" x2="922.5" y2="323" stroke="#c9cad2" stroke-width="1.6" />
<line x1="959.8" y1="301.6" x2="959.8" y2="323" stroke="#c9cad2" stroke-width="1.8" />
<line x1="997.1" y1="317.4" x2="997.1" y2="323" stroke="#c9cad2" stroke-width="1.6" />
<line x1="1034.4" y1="317.4" x2="1034.4" y2="323" stroke="#c9cad2" stroke-width="1.6" />
<line x1="1071.7" y1="317.4" x2="1071.7" y2="323" stroke="#c9cad2" stroke-width="1.6" />
<line x1="1109" y1="317.4" x2="1109" y2="323" stroke="#c9cad2" stroke-width="1.6" />
<line x1="1146.3" y1="317.4" x2="1146.3" y2="323" stroke="#c9cad2" stroke-width="1.6" />
<line x1="1183.6" y1="317.4" x2="1183.6" y2="323" stroke="#c9cad2" stroke-width="1.6" />
<line x1="1220.9" y1="317.4" x2="1220.9" y2="323" stroke="#c9cad2" stroke-width="1.6" />
<line x1="1258.2" y1="317.4" x2="1258.2" y2="323" stroke="#c9cad2" stroke-width="1.6" />
<line x1="1295.5" y1="317.4" x2="1295.5" y2="323" stroke="#c9cad2" stroke-width="1.6" />
<line x1="1332.8" y1="301.6" x2="1332.8" y2="323" stroke="#c9cad2" stroke-width="1.8" />
<line x1="1370.1" y1="317.4" x2="1370.1" y2="323" stroke="#c9cad2" stroke-width="1.6" />
<line x1="1407.4" y1="317.4" x2="1407.4" y2="323" stroke="#c9cad2" stroke-width="1.6" />
<line x1="1444.7" y1="317.4" x2="1444.7" y2="323" stroke="#c9cad2" stroke-width="1.6" />
<line x1="1482" y1="317.4" x2="1482" y2="323" stroke="#c9cad2" stroke-width="1.6" />
<line x1="1519.3" y1="317.4" x2="1519.3" y2="323" stroke="#c9cad2" stroke-width="1.6" />
<line x1="1556.6" y1="317.4" x2="1556.6" y2="323" stroke="#c9cad2" stroke-width="1.6" />
<line x1="1593.9" y1="317.4" x2="1593.9" y2="323" stroke="#c9cad2" stroke-width="1.6" />
<line x1="1631.2" y1="317.4" x2="1631.2" y2="323" stroke="#c9cad2" stroke-width="1.6" />
<line x1="1668.5" y1="317.4" x2="1668.5" y2="323" stroke="#c9cad2" stroke-width="1.6" />
<line x1="1705.8" y1="301.6" x2="1705.8" y2="323" stroke="#c9cad2" stroke-width="1.8" />
<line x1="1743.1" y1="317.4" x2="1743.1" y2="323" stroke="#c9cad2" stroke-width="1.6" />
<line x1="1780.4" y1="317.4" x2="1780.4" y2="323" stroke="#c9cad2" stroke-width="1.6" />
<line x1="1817.7" y1="317.4" x2="1817.7" y2="323" stroke="#c9cad2" stroke-width="1.6" />
<line x1="1855" y1="317.4" x2="1855" y2="323" stroke="#c9cad2" stroke-width="1.6" />
<line x1="1892.3" y1="317.4" x2="1892.3" y2="323" stroke="#c9cad2" stroke-width="1.6" />
<line x1="1929.6" y1="317.4" x2="1929.6" y2="323" stroke="#c9cad2" stroke-width="1.6" />
<line x1="1966.9" y1="317.4" x2="1966.9" y2="323" stroke="#c9cad2" stroke-width="1.6" />
<line x1="2004.2" y1="317.4" x2="2004.2" y2="323" stroke="#c9cad2" stroke-width="1.6" />
<line x1="2041.5" y1="317.4" x2="2041.5" y2="323" stroke="#c9cad2" stroke-width="1.6" />
<line x1="2078.8" y1="301.6" x2="2078.8" y2="323" stroke="#c9cad2" stroke-width="1.8" />
<line x1="2116.1" y1="317.4" x2="2116.1" y2="323" stroke="#c9cad2" stroke-width="1.6" />
<line x1="2153.4" y1="317.4" x2="2153.4" y2="323" stroke="#c9cad2" stroke-width="1.6" />
<line x1="2190.7" y1="317.4" x2="2190.7" y2="323" stroke="#c9cad2" stroke-width="1.6" />
<line x1="213.5" y1="322.5" x2="2206" y2="322.5" stroke="#666a74" stroke-width="1.2" />
<line x1="203.4" y1="336.4" x2="212.2" y2="336.4" stroke="#8f919b" stroke-width="1.4" />
<line x1="203.4" y1="374.3" x2="212.2" y2="374.3" stroke="#8f919b" stroke-width="1.4" />
<line x1="203.4" y1="405.8" x2="212.2" y2="405.8" stroke="#8f919b" stroke-width="1.4" />
<line x1="203.4" y1="437.4" x2="212.2" y2="437.4" stroke="#8f919b" stroke-width="1.4" />
<line x1="203.4" y1="469.1" x2="212.2" y2="469.1" stroke="#8f919b" stroke-width="1.4" />
<line x1="203.4" y1="501" x2="212.2" y2="501" stroke="#8f919b" stroke-width="1.4" />
<line x1="203.4" y1="538.9" x2="212.2" y2="538.9" stroke="#8f919b" stroke-width="1.4" />
<line x1="203.4" y1="578.4" x2="212.2" y2="578.4" stroke="#8f919b" stroke-width="1.4" />
<line x1="203.4" y1="616.3" x2="212.2" y2="616.3" stroke="#8f919b" stroke-width="1.4" />
<line x1="203.4" y1="647.8" x2="212.2" y2="647.8" stroke="#8f919b" stroke-width="1.4" />
<line x1="203.4" y1="679.4" x2="212.2" y2="679.4" stroke="#8f919b" stroke-width="1.4" />
<line x1="203.4" y1="711.1" x2="212.2" y2="711.1" stroke="#8f919b" stroke-width="1.4" />
<line x1="203.4" y1="743" x2="212.2" y2="743" stroke="#8f919b" stroke-width="1.4" />
<line x1="203.4" y1="780.9" x2="212.2" y2="780.9" stroke="#8f919b" stroke-width="1.4" />
<path d="M107.2,429.9 V446.9 H124.4 V429.9" fill="none" stroke="#8a8c96" stroke-width="1.3"/>
<line x1="107.2" y1="429.9" x2="124.4" y2="429.9" stroke="#8a8c96" stroke-width="1.3" />
<rect x="104.6" y="427.4" width="5.3" height="5.3" fill="#f0b02a" />
<rect x="121.7" y="427.4" width="5.3" height="5.3" fill="#8a8c96" />
<polygon points="137.6,435.1 146.8,435.1 142.2,428.7" fill="#b4b6c0" />
<polygon points="137.6,439.3 146.8,439.3 142.2,445.9" fill="#b4b6c0" />
<path d="M107.2,671.9 V688.9 H124.4 V671.9" fill="none" stroke="#8a8c96" stroke-width="1.3"/>
<line x1="107.2" y1="671.9" x2="124.4" y2="671.9" stroke="#8a8c96" stroke-width="1.3" />
<rect x="104.6" y="669.4" width="5.3" height="5.3" fill="#8a8c96" />
<rect x="121.7" y="669.4" width="5.3" height="5.3" fill="#f0b02a" />
<polygon points="137.6,677.1 146.8,677.1 142.2,670.7" fill="#b4b6c0" />
<polygon points="137.6,681.3 146.8,681.3 142.2,687.9" fill="#b4b6c0" />
<rect x="2329.2" y="227.7" width="52.8" height="6.4" fill="#38373d" />
<rect x="2329.2" y="240.3" width="52.8" height="418.8" fill="#3d3c42" />
<rect x="2329.2" y="385.4" width="52.8" height="273.7" fill="#3fcf3f" />
<rect x="2329.2" y="360.8" width="52.8" height="24.9" fill="#ffd966" />
<rect x="2329.2" y="321.3" width="52.8" height="3" fill="#d9534f" />
<rect x="2329.2" y="398.4" width="52.8" height="2.6" fill="#fff" />
<rect x="2401" y="227.7" width="53" height="6.4" fill="#38373d" />
<rect x="2401" y="240.3" width="53" height="418.8" fill="#3d3c42" />
<rect x="2401" y="385.4" width="53" height="273.7" fill="#3fcf3f" />
<rect x="2401" y="367.2" width="53" height="18.5" fill="#ffd966" />
<rect x="2401" y="312.1" width="53" height="3" fill="#d9534f" />
<rect x="2401" y="403.1" width="53" height="2.6" fill="#fff" />
<line x1="2320" y1="241.2" x2="2329.2" y2="241.2" stroke="#8f919b" stroke-width="1.4" />
<line x1="2320" y1="283.5" x2="2329.2" y2="283.5" stroke="#8f919b" stroke-width="1.4" />
<line x1="2320" y1="324.9" x2="2329.2" y2="324.9" stroke="#8f919b" stroke-width="1.4" />
<line x1="2320" y1="366.3" x2="2329.2" y2="366.3" stroke="#8f919b" stroke-width="1.4" />
<line x1="2320" y1="407.4" x2="2329.2" y2="407.4" stroke="#8f919b" stroke-width="1.4" />
<line x1="2320" y1="450.5" x2="2329.2" y2="450.5" stroke="#8f919b" stroke-width="1.4" />
<line x1="2320" y1="500.4" x2="2329.2" y2="500.4" stroke="#8f919b" stroke-width="1.4" />
<line x1="2320" y1="553.2" x2="2329.2" y2="553.2" stroke="#8f919b" stroke-width="1.4" />
<line x1="2320" y1="604" x2="2329.2" y2="604" stroke="#8f919b" stroke-width="1.4" />
<line x1="2320" y1="657.2" x2="2329.2" y2="657.2" stroke="#8f919b" stroke-width="1.4" />
<line x1="2287" y1="785.7" x2="2449" y2="901" stroke="#4f5059" stroke-width="1.6" />
<line x1="2287" y1="901" x2="2449" y2="785.7" stroke="#4f5059" stroke-width="1.6" />
<line x1="2287" y1="843.3" x2="2449" y2="843.3" stroke="#4f5059" stroke-width="1.6" />
<rect x="2343.52" y="822.13" width="18.41" height="11.16" rx="6.45" ry="3.35" fill="none" stroke="#f2cd58" stroke-width="1.7" stroke-opacity="0.92"/>
<rect x="2359.52" y="840.06" width="8.93" height="18.12" rx="3.12" ry="5.44" fill="none" stroke="#f2cd58" stroke-width="1.7" stroke-opacity="0.92"/>
<rect x="2359.42" y="793.06" width="9.12" height="11.45" rx="3.19" ry="3.44" fill="none" stroke="#f2cd58" stroke-width="1.7" stroke-opacity="0.92"/>
<rect x="2378.05" y="831.09" width="9.98" height="13.57" rx="3.49" ry="4.07" fill="none" stroke="#f2cd58" stroke-width="1.7" stroke-opacity="0.92"/>
<rect x="2381.51" y="850.2" width="17.23" height="16.35" rx="6.03" ry="4.9" fill="none" stroke="#f2cd58" stroke-width="1.7" stroke-opacity="0.92"/>
<rect x="2352.41" y="886.28" width="21.74" height="14.63" rx="7.61" ry="4.39" fill="none" stroke="#f2cd58" stroke-width="1.7" stroke-opacity="0.92"/>
<rect x="2347.8" y="798.04" width="12.94" height="23.06" rx="4.53" ry="6.92" fill="none" stroke="#f2cd58" stroke-width="1.7" stroke-opacity="0.92"/>
<rect x="2360.33" y="805.27" width="18.22" height="15.96" rx="6.38" ry="4.79" fill="none" stroke="#f2cd58" stroke-width="1.7" stroke-opacity="0.92"/>
<rect x="2346.43" y="843.67" width="8.95" height="13.3" rx="3.13" ry="3.99" fill="none" stroke="#f2cd58" stroke-width="1.7" stroke-opacity="0.92"/>
<rect x="2361.46" y="854.04" width="13.03" height="19.37" rx="4.56" ry="5.81" fill="none" stroke="#f2cd58" stroke-width="1.7" stroke-opacity="0.92"/>
<rect x="2350.01" y="830.18" width="20.71" height="21.18" rx="7.25" ry="6.36" fill="none" stroke="#f2cd58" stroke-width="1.7" stroke-opacity="0.92"/>
<rect x="2361.93" y="807.65" width="16.4" height="24" rx="5.74" ry="7.2" fill="none" stroke="#f2cd58" stroke-width="1.7" stroke-opacity="0.92"/>
<rect x="2350.5" y="862.73" width="23.68" height="11.89" rx="8.29" ry="3.57" fill="none" stroke="#f2cd58" stroke-width="1.7" stroke-opacity="0.92"/>
<rect x="2374.73" y="828.32" width="10.43" height="17.82" rx="3.65" ry="5.35" fill="none" stroke="#f2cd58" stroke-width="1.7" stroke-opacity="0.92"/>
<rect x="2358.72" y="789.38" width="20.23" height="19.17" rx="7.08" ry="5.75" fill="none" stroke="#f2cd58" stroke-width="1.7" stroke-opacity="0.92"/>
<rect x="2355.21" y="873.67" width="19.12" height="19.51" rx="6.69" ry="5.85" fill="none" stroke="#f2cd58" stroke-width="1.7" stroke-opacity="0.92"/>
<rect x="2357.59" y="841.01" width="21.44" height="25.11" rx="7.5" ry="7.53" fill="none" stroke="#f2cd58" stroke-width="1.7" stroke-opacity="0.92"/>
<rect x="2371.92" y="832.27" width="8.97" height="21.22" rx="3.14" ry="6.37" fill="none" stroke="#f2cd58" stroke-width="1.7" stroke-opacity="0.92"/>
<rect x="2378.67" y="853.08" width="21.15" height="14.55" rx="7.4" ry="4.37" fill="none" stroke="#f2cd58" stroke-width="1.7" stroke-opacity="0.92"/>
<rect x="2371.63" y="825.27" width="8.36" height="17.39" rx="2.93" ry="5.22" fill="none" stroke="#f2cd58" stroke-width="1.7" stroke-opacity="0.92"/>
<rect x="2349.22" y="800.83" width="8.94" height="22.29" rx="3.13" ry="6.69" fill="none" stroke="#f2cd58" stroke-width="1.7" stroke-opacity="0.92"/>
<rect x="2351.43" y="796.09" width="14.26" height="23.94" rx="4.99" ry="7.18" fill="none" stroke="#f2cd58" stroke-width="1.7" stroke-opacity="0.92"/>
<rect x="2356.04" y="791.07" width="16.79" height="24.13" rx="5.88" ry="7.24" fill="none" stroke="#f2cd58" stroke-width="1.7" stroke-opacity="0.92"/>
<rect x="2381.98" y="869.42" width="12.45" height="16.64" rx="4.36" ry="4.99" fill="none" stroke="#f2cd58" stroke-width="1.7" stroke-opacity="0.92"/>
<rect x="2373.28" y="825.03" width="23.32" height="12.41" rx="8.16" ry="3.72" fill="none" stroke="#f2cd58" stroke-width="1.7" stroke-opacity="0.92"/>
<rect x="2351.56" y="803.92" width="11.73" height="17.76" rx="4.11" ry="5.33" fill="none" stroke="#f2cd58" stroke-width="1.7" stroke-opacity="0.92"/>
<rect x="2355.95" y="846.15" width="8.07" height="16.7" rx="2.82" ry="5.01" fill="none" stroke="#f2cd58" stroke-width="1.7" stroke-opacity="0.92"/>
<rect x="2359.58" y="821.77" width="23.25" height="21.05" rx="8.14" ry="6.31" fill="none" stroke="#f2cd58" stroke-width="1.7" stroke-opacity="0.92"/>
<rect x="2365.35" y="841.63" width="18.82" height="10.86" rx="6.59" ry="3.26" fill="none" stroke="#f2cd58" stroke-width="1.7" stroke-opacity="0.92"/>
<rect x="2374.28" y="874.47" width="21.99" height="22.77" rx="7.7" ry="6.83" fill="none" stroke="#f2cd58" stroke-width="1.7" stroke-opacity="0.92"/>
<rect x="2359.31" y="824.56" width="9.66" height="20.15" rx="3.38" ry="6.04" fill="none" stroke="#f2cd58" stroke-width="1.7" stroke-opacity="0.92"/>
<rect x="2349.91" y="794.99" width="11.34" height="12.6" rx="3.97" ry="3.78" fill="none" stroke="#f2cd58" stroke-width="1.7" stroke-opacity="0.92"/>
<rect x="2344.6" y="823.14" width="8" height="12.42" rx="2.8" ry="3.73" fill="none" stroke="#f2cd58" stroke-width="1.7" stroke-opacity="0.92"/>
<rect x="2357.95" y="793.25" width="8.41" height="23.99" rx="2.94" ry="7.2" fill="none" stroke="#f2cd58" stroke-width="1.7" stroke-opacity="0.92"/>
<path d="M2372.44,792.89 L2372.9,795.8 L2374.83,796.16 L2351.69,803.09 L2353.41,801.75 L2355.61,801.17 L2378.86,803.86 L2384.02,804.95 L2377.69,811.4 L2349.47,808.29 L2348.72,809.28 L2348.3,816.7 L2389.58,816.72 L2383.75,816.45 L2383.37,820.6 L2346.12,822.35 L2348.14,820.73 L2341.56,827.01 L2394.82,827.65 L2394.53,828.96 L2386.96,829.34 L2347.61,828.12 L2352.04,831.34 L2349.18,835.53 L2397.09,835.77 L2396.99,840.72 L2397.38,838.7 L2350.29,839.58 L2350.75,841.16 L2345.33,847.05 L2396.49,846.23 L2394.2,849.87 L2386.94,850.74 L2342.21,853.19 L2344.45,853.07 L2352.06,856.65 L2390.78,858.43 L2399.27,857.71 L2391.98,862.73 L2345.54,859.78 L2353.49,861.38 L2343.5,867.03 L2389.26,868.86 L2400.3,869.55 L2392.23,870.61 L2354.21,869.12 L2343.4,874.64 L2349.35,878.06 L2393.93,879.4 L2399.21,877.15 L2391.86,879.35 L2353.69,882.82 L2353.6,883.53 L2355.42,888.19 L2392.72,887.19 L2394.34,891.58 L2391.35,893.37 L2356.33,892.77 L2357.59,891.4 L2359.79,894.1" fill="none" stroke="#f2cd58" stroke-width="1.4" stroke-opacity="0.8" stroke-linejoin="round"/>
<path d="M2360.03,796.8 L2357.83,796.55 L2353.61,798.76 L2375.75,800.25 L2378.46,803.55 L2376.08,803.92 L2353.75,803.93 L2348.61,807.03 L2349.79,810.25 L2386.99,810.07 L2385.03,812.15 L2384.89,814.99 L2348.57,815.74 L2347.77,819.9 L2344.68,821.23 L2393.4,819.24 L2389.6,825.05 L2393.99,821.92 L2350.21,825.47 L2351,825.97 L2351.15,830.25 L2394.38,833.33 L2386.32,833.96 L2393.07,832.23 L2341.19,838.89 L2350,840.51 L2347.82,839.43 L2397.99,843.22 L2387.33,842.52 L2392.1,843.68 L2351.07,845.27 L2344.35,845.18 L2346.7,849.42 L2386.22,850.48 L2394.28,853.28 L2387.13,857.83 L2344.25,859.46 L2353.33,856.93 L2354.33,861.72 L2390.43,859.54 L2392.56,865.94 L2397.89,863.74 L2353.51,869.41 L2348.16,869.81 L2354.59,867.67 L2396.8,871.59 L2388.91,876.38 L2396.4,877.27 L2355.28,879.31 L2355.66,881.06 L2350.76,879.63 L2395.95,884.87 L2392.38,881.79 L2395.91,884.16 L2356.77,885.41 L2358.63,887.36 L2356.91,889.69 L2393.66,891.32 L2389.89,892.36 L2387.42,893.11" fill="none" stroke="#f2cd58" stroke-width="1.4" stroke-opacity="0.8" stroke-linejoin="round"/>
<path d="M2370.96,792.09 L2375.43,797.02 L2373.78,798.27 L2351.12,797.77 L2350.86,801.44 L2352.43,805.57 L2379.27,805.31 L2382.78,809.88 L2380.64,810.69 L2347.75,811.22 L2350.12,811.2 L2353.27,811.61 L2380.93,816.99 L2383.68,815.23 L2382.41,821.01 L2342.04,821.7 L2348.74,820.84 L2348.2,823.86 L2385.75,825.49 L2387.28,830.3 L2396.69,829.52 L2349.06,833.74 L2348.37,831.8 L2352.54,833.66 L2390.81,836.1 L2387.39,837.83 L2384.98,838.09 L2352,840.62 L2352.78,840.07 L2349.5,843.04 L2393.17,846.53 L2395.47,849.01 L2395.18,852.05 L2349,850.45 L2341.39,851.1 L2344.94,855.77 L2387.01,858.64 L2398.23,859.1 L2396.32,861.92 L2353.18,861.91 L2348.57,865.48 L2344.8,867.14 L2394.98,869.26 L2396.42,869.77 L2390.66,867.51 L2354.18,871.2 L2354.7,875.76 L2348.93,876.22 L2396.44,878.25 L2394.81,875.9 L2398.99,882.08 L2350.27,882.52 L2348.38,881.41 L2347.52,884.24 L2389.27,886.03 L2396.03,887.38 L2394.81,893.72 L2356.4,891.87 L2358,895.39 L2356.99,896.7" fill="none" stroke="#f2cd58" stroke-width="1.4" stroke-opacity="0.8" stroke-linejoin="round"/>
<line x1="2363.6" y1="788" x2="2363.6" y2="842" stroke="#f2cd58" stroke-width="2.8" />
<line x1="2369.2" y1="800" x2="2369.2" y2="870" stroke="#f2cd58" stroke-width="1.8" />
<line x1="2344" y1="836" x2="2356" y2="836" stroke="#f2cd58" stroke-width="1.8" />
<line x1="2388" y1="828" x2="2401" y2="828" stroke="#f2cd58" stroke-width="1.8" />
<rect x="2284.9" y="910.2" width="166" height="13.2" fill="#45454b" />
<rect x="2368" y="912" width="54" height="10.6" fill="#3fcf3f" />
<line x1="2286.7" y1="923.3" x2="2286.7" y2="931.8" stroke="#a8aab3" stroke-width="1.4" />
<line x1="2368" y1="923.3" x2="2368" y2="931.8" stroke="#a8aab3" stroke-width="1.4" />
<line x1="2449" y1="923.3" x2="2449" y2="931.8" stroke="#a8aab3" stroke-width="1.4" />
<rect x="1324.3" y="1026" width="260.4" height="153.6" fill="#232227" />
<rect x="1324.3" y="1026" width="260.4" height="52" fill="#33282b" />
<line x1="1411.2" y1="1026" x2="1411.2" y2="1179.6" stroke="#3c3c43" stroke-width="1.2" />
<line x1="1497.8" y1="1026" x2="1497.8" y2="1179.6" stroke="#3c3c43" stroke-width="1.2" />
<line x1="1324.3" y1="1040.7" x2="1584.7" y2="1040.7" stroke="#3c3c43" stroke-width="1.2" />
<line x1="1324.3" y1="1069" x2="1584.7" y2="1069" stroke="#3c3c43" stroke-width="1.2" />
<line x1="1324.3" y1="1097.5" x2="1584.7" y2="1097.5" stroke="#3c3c43" stroke-width="1.2" />
<line x1="1324.3" y1="1125.8" x2="1584.7" y2="1125.8" stroke="#3c3c43" stroke-width="1.2" />
<line x1="1324.3" y1="1153.7" x2="1584.7" y2="1153.7" stroke="#3c3c43" stroke-width="1.2" />
<line x1="1324.3" y1="1026" x2="1324.3" y2="1179.6" stroke="#4a4a52" stroke-width="1.2" />
<line x1="1584.7" y1="1026" x2="1584.7" y2="1179.6" stroke="#4a4a52" stroke-width="1.2" />
<line x1="1324.3" y1="1065.6" x2="1584.7" y2="1065.6" stroke="#e04a44" stroke-width="1.4" />
<path d="M1325.32,1179.44 L1335.37,1179.44 L1335.89,1114.99 L1337.43,1089.21 L1338.98,1082.77 L1341.56,1078.9 L1343.36,1063.43 L1345.43,1061.37 L1347.23,1066.01 L1350.58,1073.23 L1354.45,1069.1 L1359.09,1063.43 L1362.7,1064.98 L1367.34,1071.17 L1371.98,1065.49 L1376.36,1061.37 L1380.23,1067.3 L1384.1,1073.74 L1389.25,1067.3 L1393.12,1062.92 L1398.28,1064.72 L1403.43,1061.37 L1407.3,1069.1 L1410.65,1060.85 L1413.74,1069.1 L1416.84,1076.32 L1420.19,1071.17 L1423.54,1064.72 L1426.63,1060.34 L1430.5,1065.49 L1434.37,1060.85 L1438.23,1069.1 L1442.1,1063.43 L1444.68,1060.85 L1447.77,1069.1 L1451.9,1072.45 L1454.99,1067.3 L1458.86,1057.76 L1462.21,1059.56 L1466.59,1063.43 L1470.46,1061.37 L1474.33,1067.3 L1478.19,1064.72 L1481.29,1076.32 L1483.86,1066.01 L1487.22,1061.37 L1491.08,1064.72 L1493.66,1060.85 L1496.24,1066.52 L1500.11,1063.43 L1503.97,1066.01 L1507.84,1062.14 L1511.71,1067.3 L1515.57,1063.43 L1519.44,1061.37 L1523.31,1066.01 L1527.17,1063.43 L1531.04,1068.07 L1534.91,1060.85 L1538,1067.3 L1541.35,1060.34 L1545.22,1067.3 L1548.31,1071.17 L1551.67,1063.43 L1555.53,1067.3 L1559.4,1060.85 L1563.27,1072.45 L1567.13,1062.92 L1571,1068.59 L1574.87,1064.72 L1578.22,1062.92 L1581.31,1069.1 L1583.89,1063.43" fill="none" stroke="#ffd966" stroke-width="1.7" stroke-linejoin="round"/>
<path d="M1325.32,1179.44 L1335.89,1179.44 L1336.4,1130.46 L1338.47,1104.68 L1341.56,1090.5 L1345.43,1081.48 L1350.58,1075.81 L1355.74,1071.68 L1362.18,1069.1 L1369.92,1068.07 L1380.23,1067.56 L1393.12,1066.52 L1406.01,1066.01 L1418.9,1066.52 L1431.79,1065.49 L1444.68,1066.01 L1457.57,1064.98 L1470.46,1063.43 L1483.35,1062.92 L1496.24,1063.43 L1509.13,1063.95 L1522.02,1064.46 L1534.91,1064.72 L1547.8,1064.98 L1560.69,1065.24 L1573.58,1065.49 L1583.89,1065.24" fill="none" stroke="#4e8fc9" stroke-width="1.9" stroke-linejoin="round"/>
<line x1="1582.6" y1="1062" x2="1584.6" y2="1070" stroke="#e04a44" stroke-width="2.2" />
<rect x="1590.9" y="1026" width="24.8" height="154" fill="#2e2f36" />
<rect x="1622" y="1026" width="25" height="154" fill="#2e2f36" />
<rect x="1590.9" y="1063.4" width="24.8" height="116.6" fill="#ffd966" />
<rect x="1590.9" y="1057.2" width="24.8" height="1.6" fill="#ffd966" />
<rect x="1622" y="1065.2" width="25" height="114.8" fill="#4585c1" />
<rect x="1622" y="1062" width="25" height="1.6" fill="#4585c1" />
<line x1="1647" y1="1040.7" x2="1656" y2="1040.7" stroke="#8f919b" stroke-width="1.4" />
<line x1="1647" y1="1069" x2="1656" y2="1069" stroke="#8f919b" stroke-width="1.4" />
<line x1="1647" y1="1097.5" x2="1656" y2="1097.5" stroke="#8f919b" stroke-width="1.4" />
<line x1="1647" y1="1125.8" x2="1656" y2="1125.8" stroke="#8f919b" stroke-width="1.4" />
<line x1="1647" y1="1153.7" x2="1656" y2="1153.7" stroke="#8f919b" stroke-width="1.4" />
<line x1="1325.3" y1="1180" x2="1325.3" y2="1190" stroke="#8f919b" stroke-width="1.6" />
<line x1="1411.2" y1="1180" x2="1411.2" y2="1190" stroke="#8f919b" stroke-width="1.6" />
<line x1="1497" y1="1180" x2="1497" y2="1190" stroke="#8f919b" stroke-width="1.6" />
<line x1="1582.6" y1="1180" x2="1582.6" y2="1190" stroke="#8f919b" stroke-width="1.6" />
<circle cx="1665.6" cy="1217.6" r="7.7" fill="none" stroke="#000" stroke-width="3"/>
<rect x="1663.6" y="1207.4" width="4" height="5.2" fill="#d6d7dc" />
<rect x="1694.6" y="1209.2" width="6.2" height="17" fill="#000" />
<rect x="1704.6" y="1209.2" width="6.2" height="17" fill="#000" />
<path d="M2003.06,1192.76 L2003.06,1073.02 L2014.03,1066.71 L2028.04,1059.24 L2042.04,1052.71 L2056.05,1048.04 L2070.06,1046.41 L2079.39,1048.04 L2088.73,1051.54 L2095.73,1053.87 L2102.74,1052.01 L2109.74,1051.54 L2116.74,1055.04 L2123.74,1064.38 L2128.41,1069.51 L2135.42,1072.55 L2141.25,1077.22 L2148.25,1076.52 L2154.09,1077.92 L2158.76,1078.85 L2163.43,1074.88 L2166.93,1071.38 L2170.43,1059.71 L2173.93,1055.51 L2178.6,1058.54 L2184.44,1057.38 L2186.77,1060.88 L2189.1,1071.38 L2196.11,1083.05 L2198.44,1086.09 L2200.77,1086.19 L2203.11,1086.23 L2205.44,1087.72 L2207.78,1087.64 L2210.11,1093.9 L2212.45,1094.26 L2214.78,1091.03 L2217.11,1093.57 L2219.45,1093.56 L2221.78,1097.11 L2224.12,1094.09 L2226.45,1098.23 L2228.79,1099.85 L2231.12,1101.76 L2233.45,1102.89 L2235.79,1101.65 L2238.12,1105.1 L2240.46,1107.56 L2242.79,1110.03 L2245.13,1110.17 L2247.46,1112.23 L2249.79,1114.82 L2252.13,1113.19 L2254.46,1116.9 L2256.8,1114.03 L2259.13,1114.57 L2261.47,1112.74 L2263.8,1115.73 L2266.13,1118.45 L2268.47,1121.57 L2270.8,1123.13 L2273.14,1120.4 L2275.47,1123.59 L2277.81,1126.24 L2281.31,1123.9 L2284.23,1128.12 L2287.14,1129.74 L2290.06,1131.42 L2292.98,1134.87 L2295.9,1135.79 L2298.81,1134.41 L2301.15,1130.19 L2303.48,1130.91 L2306.4,1128.69 L2309.32,1129.27 L2312.82,1135.57 L2315.15,1136.9 L2317.49,1136.74 L2319.82,1136.22 L2322.16,1132.96 L2324.49,1132.07 L2325.66,1141.41 L2328.58,1137.12 L2331.49,1137.91 L2333.83,1135.59 L2336.16,1134.49 L2338.5,1135.57 L2341.41,1135.87 L2344.33,1139.08 L2347.25,1143.49 L2350.17,1144.91 L2353.67,1140.24 L2356.59,1141.24 L2359.51,1146.08 L2362.07,1143.57 L2364.64,1137.21 L2366.74,1143.54 L2368.84,1146.08 L2371.18,1142.18 L2373.51,1143.74 L2377.01,1153.08 L2379.35,1151 L2381.68,1150.75 L2384.01,1148.13 L2386.35,1146.08 L2388.68,1147.84 L2391.02,1155.42 L2393.94,1153.01 L2396.85,1151.91 L2399.19,1156.68 L2401.52,1154.95 L2403.86,1160.08 L2406.19,1160.24 L2408.52,1157.42 L2410.86,1159.62 L2413.19,1160.37 L2415.53,1162.69 L2417.86,1161.25 L2420.2,1161.1 L2422.53,1164.75 L2424.86,1160.6 L2427.2,1162.42 L2430,1155.42 L2432.1,1156.93 L2434.2,1163.59 L2437.7,1171.76 L2441.2,1176.42 L2442.84,1175.26 L2442.84,1192.76 Z" fill="#ffd966" stroke="#ffd966" stroke-width="0.8" stroke-linejoin="round"/>
<line x1="1994" y1="1027" x2="2003" y2="1027" stroke="#8f919b" stroke-width="1.4" />
<line x1="1994" y1="1061.6" x2="2003" y2="1061.6" stroke="#8f919b" stroke-width="1.4" />
<line x1="1994" y1="1095.9" x2="2003" y2="1095.9" stroke="#8f919b" stroke-width="1.4" />
<line x1="1994" y1="1130.2" x2="2003" y2="1130.2" stroke="#8f919b" stroke-width="1.4" />
<line x1="1994" y1="1164" x2="2003" y2="1164" stroke="#8f919b" stroke-width="1.4" />
<line x1="2061.4" y1="1192.8" x2="2061.4" y2="1201.8" stroke="#8f919b" stroke-width="1.6" />
<line x1="2147.6" y1="1192.8" x2="2147.6" y2="1201.8" stroke="#8f919b" stroke-width="1.6" />
<line x1="2248.2" y1="1192.8" x2="2248.2" y2="1201.8" stroke="#8f919b" stroke-width="1.6" />
<line x1="2348.5" y1="1192.8" x2="2348.5" y2="1201.8" stroke="#8f919b" stroke-width="1.6" />
<line x1="2435.4" y1="1192.8" x2="2435.4" y2="1201.8" stroke="#8f919b" stroke-width="1.6" />
<path d="M750.05,1024.06 A7.8,7.8 0 1 1 741.55,1024.06" fill="none" stroke="#000" stroke-width="3" stroke-linecap="round"/>
<line x1="745.8" y1="1021.15" x2="745.8" y2="1030.1" stroke="#000" stroke-width="3" stroke-linecap="round"/>
<rect x="788" y="1021.8" width="16.4" height="17.4" fill="none" stroke="#000" stroke-width="2.2"/>
<rect x="792.6" y="1018.4" width="7.4" height="5.4" fill="#000" />
<path d="M846.4,1021.36 Q846.4,1019.4 848.36,1019.4 L853.85,1019.4 L856.2,1021.95 L863.26,1021.95 Q865.02,1021.95 865.02,1023.71 L865.02,1025.28 L852.67,1025.28 Q850.71,1025.28 849.73,1027.24 L846.4,1034.3 Z" fill="#000" />
<path d="M851.89,1026.85 L868.94,1026.85 L864.63,1035.47 Q864.04,1036.55 862.67,1036.55 L846.99,1036.55 Z" fill="#000" />
<path d="M897.8,1020.2 q0,-2 2,-2 h15.8 l3.8,3.8 v15.8 q0,2 -2,2 h-17.6 q-2,0 -2,-2 Z" fill="#000" />
<rect x="901.7" y="1021.2" width="14.2" height="7.6" fill="#d3d4da" />
<rect x="905.1" y="1032.6" width="5" height="7.4" fill="#d3d4da" />
<rect x="911.6" y="1034.6" width="2.5" height="3.5" fill="#d3d4da" />
<path d="M959.4,1021.4 h15.2 v9.6 q0,4 -4,4 h-7.2 q-4,0 -4,-4 Z" fill="#000" />
<path d="M974.6,1023 h2.2 a3.2,3.2 0 0 1 0,6.6 h-2.2" fill="none" stroke="#000" stroke-width="2"/>
<path d="M956.6,1036.6 h22 q-1,2.8 -4,2.8 h-14 q-3,0 -4,-2.8 Z" fill="#000" />
<polygon points="1050,1025.2 1063.2,1025.2 1056.6,1032.8" fill="#d9302c" />
<rect x="727.3" y="1074" width="9.8" height="3.6" fill="#b4b6c0" />
<rect x="727.3" y="1082.2" width="9.8" height="3.6" fill="#b4b6c0" />
<rect x="727.3" y="1090.4" width="9.8" height="3.6" fill="#b4b6c0" />
<path d="M767.43,1076.75 A9.6,9.6 0 1 1 756.97,1076.75" fill="none" stroke="#f0b02a" stroke-width="3.9" stroke-linecap="round"/>
<line x1="762.2" y1="1073.05" x2="762.2" y2="1084.3" stroke="#f0b02a" stroke-width="3.9" stroke-linecap="round"/>
<g transform="translate(782.2,1073.6)"><path d="M4.4,13 V10.4 A8.8,8.8 0 0 1 22,10.4 V13" fill="none" stroke="#c9cad2" stroke-width="2.8"/><rect x="2.6" y="10.8" width="5.6" height="8.6" rx="1" fill="#c9cad2"/><rect x="18.2" y="10.8" width="5.6" height="8.6" rx="1" fill="#c9cad2"/><rect x="0" y="12.6" width="2.2" height="5" rx="1" fill="#c9cad2"/><rect x="24.2" y="12.6" width="2.2" height="5" rx="1" fill="#c9cad2"/></g>
<rect x="1114.69" y="1081.9" width="20.22" height="5.4" rx="1.19" fill="#e8433a" transform="rotate(45 1124.8 1084.6)"/>
<rect x="1114.69" y="1081.9" width="20.22" height="5.4" rx="1.19" fill="#e8433a" transform="rotate(-45 1124.8 1084.6)"/>
<rect x="1147" y="1079.3" width="21.6" height="6.6" fill="#d4d5dc" rx="1.2"/>
<rect x="1154.5" y="1071.8" width="6.6" height="21.6" fill="#d4d5dc" rx="1.2"/>
<rect x="727.3" y="1117.8" width="9.8" height="3.6" fill="#b4b6c0" />
<rect x="727.3" y="1126" width="9.8" height="3.6" fill="#b4b6c0" />
<rect x="727.3" y="1134.2" width="9.8" height="3.6" fill="#b4b6c0" />
<path d="M767.43,1120.55 A9.6,9.6 0 1 1 756.97,1120.55" fill="none" stroke="#f0b02a" stroke-width="3.9" stroke-linecap="round"/>
<line x1="762.2" y1="1116.86" x2="762.2" y2="1128.1" stroke="#f0b02a" stroke-width="3.9" stroke-linecap="round"/>
<g transform="translate(782.2,1117.4)"><path d="M4.4,13 V10.4 A8.8,8.8 0 0 1 22,10.4 V13" fill="none" stroke="#c9cad2" stroke-width="2.8"/><rect x="2.6" y="10.8" width="5.6" height="8.6" rx="1" fill="#c9cad2"/><rect x="18.2" y="10.8" width="5.6" height="8.6" rx="1" fill="#c9cad2"/><rect x="0" y="12.6" width="2.2" height="5" rx="1" fill="#c9cad2"/><rect x="24.2" y="12.6" width="2.2" height="5" rx="1" fill="#c9cad2"/></g>
<rect x="1114.69" y="1125.7" width="20.22" height="5.4" rx="1.19" fill="#e8433a" transform="rotate(45 1124.8 1128.4)"/>
<rect x="1114.69" y="1125.7" width="20.22" height="5.4" rx="1.19" fill="#e8433a" transform="rotate(-45 1124.8 1128.4)"/>
<rect x="1147" y="1123.1" width="21.6" height="6.6" fill="#d4d5dc" rx="1.2"/>
<rect x="1154.5" y="1115.6" width="6.6" height="21.6" fill="#d4d5dc" rx="1.2"/>
<rect x="727.3" y="1161.6" width="9.8" height="3.6" fill="#b4b6c0" />
<rect x="727.3" y="1169.8" width="9.8" height="3.6" fill="#b4b6c0" />
<rect x="727.3" y="1178" width="9.8" height="3.6" fill="#b4b6c0" />
<path d="M767.43,1164.35 A9.6,9.6 0 1 1 756.97,1164.35" fill="none" stroke="#f0b02a" stroke-width="3.9" stroke-linecap="round"/>
<line x1="762.2" y1="1160.65" x2="762.2" y2="1171.9" stroke="#f0b02a" stroke-width="3.9" stroke-linecap="round"/>
<g transform="translate(782.2,1161.2)"><path d="M4.4,13 V10.4 A8.8,8.8 0 0 1 22,10.4 V13" fill="none" stroke="#c9cad2" stroke-width="2.8"/><rect x="2.6" y="10.8" width="5.6" height="8.6" rx="1" fill="#c9cad2"/><rect x="18.2" y="10.8" width="5.6" height="8.6" rx="1" fill="#c9cad2"/><rect x="0" y="12.6" width="2.2" height="5" rx="1" fill="#c9cad2"/><rect x="24.2" y="12.6" width="2.2" height="5" rx="1" fill="#c9cad2"/></g>
<rect x="1114.69" y="1169.5" width="20.22" height="5.4" rx="1.19" fill="#e8433a" transform="rotate(45 1124.8 1172.2)"/>
<rect x="1114.69" y="1169.5" width="20.22" height="5.4" rx="1.19" fill="#e8433a" transform="rotate(-45 1124.8 1172.2)"/>
<rect x="1147" y="1166.9" width="21.6" height="6.6" fill="#d4d5dc" rx="1.2"/>
<rect x="1154.5" y="1159.4" width="6.6" height="21.6" fill="#d4d5dc" rx="1.2"/>
<rect x="1146.8" y="1210.3" width="21.6" height="6.6" fill="#fff" rx="1.2"/>
<rect x="1154.3" y="1202.8" width="6.6" height="21.6" fill="#fff" rx="1.2"/>
<path d="M114,126.4 h11.3 v7.5 h7.5 v14.1 h-18.8 Z" fill="#000" />
<polygon points="126.6,126.4 132.8,132.6 126.6,132.6" fill="#000" />
<polygon points="146.6,134 159.4,134 153,141.4" fill="#d9302c" />
<path d="M181,130 Q181,128 183,128 L188.6,128 L191,130.6 L198.2,130.6 Q200,130.6 200,132.4 L200,134 L187.4,134 Q185.4,134 184.4,136 L181,143.2 Z" fill="#000" />
<path d="M186.6,135.6 L204,135.6 L199.6,144.4 Q199,145.5 197.6,145.5 L181.6,145.5 Z" fill="#000" />
<path d="M232.6,128.8 q0,-2 2,-2 h15.8 l3.8,3.8 v15.8 q0,2 -2,2 h-17.6 q-2,0 -2,-2 Z" fill="#000" />
<rect x="236.5" y="129.8" width="14.2" height="7.6" fill="#d3d4da" />
<rect x="239.9" y="141.2" width="5" height="7.4" fill="#d3d4da" />
<rect x="246.4" y="143.2" width="2.5" height="3.5" fill="#d3d4da" />
<g fill="none" stroke="#74767e" stroke-width="2.1"><ellipse cx="299.6" cy="132.6" rx="3.4" ry="2.9" transform="rotate(25 299.6 132.6)"/><ellipse cx="299.6" cy="142.6" rx="3.4" ry="2.9" transform="rotate(-25 299.6 142.6)"/></g>
<path d="M302.4,134.4 L317.6,143.6 L316.4,145.6 L305,140.4 Z M302.4,140.8 L317.6,131.6 L316.4,129.6 L305,134.8 Z" fill="none" stroke="#74767e" stroke-width="1.5" stroke-linejoin="round"/>
<g fill="none" stroke="#74767e" stroke-width="2"><path d="M351,127.2 h7.4 v5.4 M351,127.2 l-5,5 v9.4 h6.8 M346,132.2 h5 v-5"/><path d="M359.6,134 h7 v13.2 h-12 v-8.2 l5,-5 v5 h-5"/></g>
<rect x="395.2" y="126.4" width="14" height="18.6" fill="#6f7179" />
<rect x="398" y="126.4" width="8.4" height="2.2" fill="#9fa1a8" />
<path d="M404.6,133.6 h7 l4.8,4.8 v9 h-11.8 Z" fill="#cfd0d6" stroke="#74767e" stroke-width="1.9"/><path d="M411.6,133.6 v4.8 h4.8" fill="none" stroke="#74767e" stroke-width="1.7"/>
<g transform="translate(454,126.8) scale(1,1)"><polygon points="0,0.4 0,10.6 10.4,10.6" fill="#000"/><path d="M5.6,5.4 C11,0.8 19.6,1.2 22.2,8.4 C23.6,12.6 22,17 18.8,19.8" fill="none" stroke="#000" stroke-width="6.2"/></g>
<polygon points="489.4,134.2 503,134.2 496.2,141.4" fill="#d9302c" />
<g transform="translate(548,126.8) scale(-1,1)"><polygon points="0,0.4 0,10.6 10.4,10.6" fill="#707279"/><path d="M5.6,5.4 C11,0.8 19.6,1.2 22.2,8.4 C23.6,12.6 22,17 18.8,19.8" fill="none" stroke="#707279" stroke-width="6.2"/></g>
<polygon points="558.8,134.2 571.4,134.2 565.1,141.2" fill="#74767e" />
<circle cx="618.1" cy="137.5" r="10.9" fill="#000" />
<rect x="671.3" y="127.3" width="5.6" height="20.2" fill="#000" />
<polygon points="688.5,127.3 688.5,147.5 676.9,137.4" fill="#000" />
<polygon points="730.4,128 730.4,147 720,137.5" fill="#000" />
<polygon points="741.5,128 741.5,147 731,137.5" fill="#000" />
<polygon points="771.9,127.5 771.9,147.5 783.5,137.5" fill="#000" />
<polygon points="801.9,134.1 815,134.1 808.45,141.1" fill="#d9302c" />
<path d="M845.24,132.37 A7.4,7.4 0 1 1 842.56,139.74" fill="none" stroke="#000" stroke-width="3.8"/>
<polygon points="839.4,128.4 848.2,129.6 841,136.6" fill="#000" />
<rect x="888.1" y="126.3" width="21.9" height="21.9" fill="#000" />
<rect x="938.1" y="126.3" width="8.2" height="21.9" fill="#000" />
<rect x="952.1" y="126.3" width="7.9" height="21.9" fill="#000" />
<polygon points="988.1,127.5 988.1,147.5 999,137.5" fill="#000" />
<polygon points="999.2,127.5 999.2,147.5 1010,137.5" fill="#000" />
<polygon points="1040,127.1 1040,147.8 1051.3,137.5" fill="#000" />
<rect x="1051.3" y="127.1" width="5.6" height="20.7" fill="#000" />
<path d="M1097,128 C1099.6,133.5 1099.6,141.5 1097,147 C1099.4,143 1102,140 1106.6,137.5 C1102,135 1099.4,132 1097,128 Z" fill="#000" />
<path d="M1104.6,128 C1107.2,133.5 1107.2,141.5 1104.6,147 C1107,143 1109.6,140 1114.2,137.5 C1109.6,135 1107,132 1104.6,128 Z" fill="#000" />
<path d="M1112.2,128 C1114.8,133.5 1114.8,141.5 1112.2,147 C1114.6,143 1117.2,140 1121.8,137.5 C1117.2,135 1114.6,132 1112.2,128 Z" fill="#000" />
<path d="M1116,135.6 L1125.8,137.5 L1116,139.4 Z" fill="#000" />
<rect x="1099" y="136.6" width="20" height="1.8" fill="#000" />
<rect x="1147.4" y="127" width="27.9" height="20.6" fill="#000" />
<path d="M1150.4,136.4 C1160,136.4 1166,135 1172.6,129.6" fill="none" stroke="#dcdde3" stroke-width="1.5"/>
<path d="M1150.4,141 C1160,141 1166,139.6 1172.6,134.2" fill="none" stroke="#dcdde3" stroke-width="1.5"/>
<path d="M1150.4,145.6 C1160,145.6 1166,144.2 1172.6,138.8" fill="none" stroke="#dcdde3" stroke-width="1.5"/>
<path d="M1210.8,127.4 L1211,143.6 L1215,140.2 L1218.2,147.2 L1221.6,145.6 L1218.4,138.8 L1223.8,138.4 Z" fill="#000" />
<path d="M1220.6,128.6 H1233.6 V146.2 H1224.2" fill="none" stroke="#000" stroke-width="2.8"/>
<rect x="1211.6" y="145.4" width="2.4" height="2.2" fill="#000" />
<circle cx="1276.4" cy="135.2" r="6.3" fill="none" stroke="#000" stroke-width="2.6"/>
<line x1="1271.4" y1="140.2" x2="1261.4" y2="146.2" stroke="#000" stroke-width="3.4" />
<polygon points="1295.3,134.1 1308.5,134.1 1301.9,141.3" fill="#d9302c" />
<polygon points="2215.6,341.2 2230.4,341.2 2223,334.4" fill="#000" />
<circle cx="2221.4" cy="714.6" r="6.2" fill="none" stroke="#000" stroke-width="2.6"/>
<line x1="2226" y1="719.2" x2="2231" y2="724.2" stroke="#000" stroke-width="3.4" stroke-linecap="round"/>
<rect x="2218.2" y="713.7" width="6.4" height="1.8" fill="#000" />
<rect x="2220.5" y="711.4" width="1.8" height="6.4" fill="#000" />
<circle cx="2221.4" cy="746" r="6.2" fill="none" stroke="#000" stroke-width="2.6"/>
<line x1="2226" y1="750.6" x2="2231" y2="755.6" stroke="#000" stroke-width="3.4" stroke-linecap="round"/>
<rect x="2218.2" y="745.1" width="6.4" height="1.8" fill="#000" />
<polygon points="2215.4,776.4 2230.8,776.4 2223.1,783.2" fill="#000" />
<polygon points="232.4,802.6 232.4,818 224,810.3" fill="#000" />
<circle cx="2127.2" cy="808.8" r="6.2" fill="none" stroke="#000" stroke-width="2.6"/>
<line x1="2131.8" y1="813.4" x2="2136.8" y2="818.4" stroke="#000" stroke-width="3.4" stroke-linecap="round"/>
<rect x="2124" y="807.9" width="6.4" height="1.8" fill="#000" />
<rect x="2126.3" y="805.6" width="1.8" height="6.4" fill="#000" />
<circle cx="2158.6" cy="808.8" r="6.2" fill="none" stroke="#000" stroke-width="2.6"/>
<line x1="2163.2" y1="813.4" x2="2168.2" y2="818.4" stroke="#000" stroke-width="3.4" stroke-linecap="round"/>
<rect x="2155.4" y="807.9" width="6.4" height="1.8" fill="#000" />
<polygon points="2187.6,802.4 2187.6,818.4 2196.4,810.4" fill="#000" />
<g transform="translate(2212.4,799.4)"><line x1="2.9" y1="18.81" x2="11.39" y2="10.32" stroke="#000" stroke-width="4.84" stroke-linecap="round"/><path d="M19.16,5.95 A4.3,4.3 0 1 1 15.76,2.55" fill="none" stroke="#000" stroke-width="4.62"/></g>
<g transform="translate(671.2,873.8) scale(0.68,0.68)"><polygon points="0,0.4 0,10.6 10.4,10.6" fill="#000"/><path d="M5.6,5.4 C11,0.8 19.6,1.2 22.2,8.4 C23.6,12.6 22,17 18.8,19.8" fill="none" stroke="#000" stroke-width="6.2"/></g>
<g transform="translate(725.87,873.8) scale(-0.68,0.68)"><polygon points="0,0.4 0,10.6 10.4,10.6" fill="#74767e"/><path d="M5.6,5.4 C11,0.8 19.6,1.2 22.2,8.4 C23.6,12.6 22,17 18.8,19.8" fill="none" stroke="#74767e" stroke-width="6.2"/></g>
<g transform="translate(671.2,908.6) scale(0.68,0.68)"><polygon points="0,0.4 0,10.6 10.4,10.6" fill="#000"/><path d="M5.6,5.4 C11,0.8 19.6,1.2 22.2,8.4 C23.6,12.6 22,17 18.8,19.8" fill="none" stroke="#000" stroke-width="6.2"/></g>
<g transform="translate(725.87,908.6) scale(-0.68,0.68)"><polygon points="0,0.4 0,10.6 10.4,10.6" fill="#74767e"/><path d="M5.6,5.4 C11,0.8 19.6,1.2 22.2,8.4 C23.6,12.6 22,17 18.8,19.8" fill="none" stroke="#74767e" stroke-width="6.2"/></g>
<g transform="translate(2280.6,686.4)"><line x1="2.9" y1="18.81" x2="11.39" y2="10.32" stroke="#a3a5ae" stroke-width="4.84" stroke-linecap="round"/><path d="M19.16,5.95 A4.3,4.3 0 1 1 15.76,2.55" fill="none" stroke="#a3a5ae" stroke-width="4.62"/></g>
<g transform="translate(1315.4,1223.6)"><line x1="2.9" y1="18.81" x2="11.39" y2="10.32" stroke="#a3a5ae" stroke-width="4.84" stroke-linecap="round"/><path d="M19.16,5.95 A4.3,4.3 0 1 1 15.76,2.55" fill="none" stroke="#a3a5ae" stroke-width="4.62"/></g>
<g transform="translate(1956.6,1223.6)"><line x1="2.9" y1="18.81" x2="11.39" y2="10.32" stroke="#a3a5ae" stroke-width="4.84" stroke-linecap="round"/><path d="M19.16,5.95 A4.3,4.3 0 1 1 15.76,2.55" fill="none" stroke="#a3a5ae" stroke-width="4.62"/></g>
<rect x="2451.44" y="188.71" width="16.33" height="3.78" rx="0.83" fill="#fff" transform="rotate(45 2459.6 190.6)"/>
<rect x="2451.44" y="188.71" width="16.33" height="3.78" rx="0.83" fill="#fff" transform="rotate(-45 2459.6 190.6)"/>
<rect x="2451.84" y="741.71" width="16.33" height="3.78" rx="0.83" fill="#fff" transform="rotate(45 2460 743.6)"/>
<rect x="2451.84" y="741.71" width="16.33" height="3.78" rx="0.83" fill="#fff" transform="rotate(-45 2460 743.6)"/>
<rect x="1271.84" y="980.71" width="16.33" height="3.78" rx="0.83" fill="#fff" transform="rotate(45 1280 982.6)"/>
<rect x="1271.84" y="980.71" width="16.33" height="3.78" rx="0.83" fill="#fff" transform="rotate(-45 1280 982.6)"/>
<rect x="1912.84" y="980.51" width="16.33" height="3.78" rx="0.83" fill="#fff" transform="rotate(45 1921 982.4)"/>
<rect x="1912.84" y="980.51" width="16.33" height="3.78" rx="0.83" fill="#fff" transform="rotate(-45 1921 982.4)"/>
<rect x="2447.04" y="980.51" width="16.33" height="3.78" rx="0.83" fill="#fff" transform="rotate(45 2455.2 982.4)"/>
<rect x="2447.04" y="980.51" width="16.33" height="3.78" rx="0.83" fill="#fff" transform="rotate(-45 2455.2 982.4)"/>
<rect x="297.88" y="188.15" width="19.44" height="4.5" rx="0.99" fill="#000" transform="rotate(45 307.6 190.4)"/>
<rect x="297.88" y="188.15" width="19.44" height="4.5" rx="0.99" fill="#000" transform="rotate(-45 307.6 190.4)"/>
<rect x="300.33" y="980.3" width="18.14" height="4.2" rx="0.92" fill="#fff" transform="rotate(45 309.4 982.4)"/>
<rect x="300.33" y="980.3" width="18.14" height="4.2" rx="0.92" fill="#fff" transform="rotate(-45 309.4 982.4)"/>
<rect x="488.73" y="980.3" width="18.14" height="4.2" rx="0.92" fill="#000" transform="rotate(45 497.8 982.4)"/>
<rect x="488.73" y="980.3" width="18.14" height="4.2" rx="0.92" fill="#000" transform="rotate(-45 497.8 982.4)"/>
<rect x="663.13" y="980.3" width="18.14" height="4.2" rx="0.92" fill="#fff" transform="rotate(45 672.2 982.4)"/>
<rect x="663.13" y="980.3" width="18.14" height="4.2" rx="0.92" fill="#fff" transform="rotate(-45 672.2 982.4)"/>
<polygon points="403,1028.4 417.6,1028.4 410.3,1017.8" fill="#2b2d38" />
</svg>
<div id="lc">
<div class="t" style="top:70.26px;font-size:41.2px;line-height:41.2px;color:#b5b2b7;font-weight:700;left:479.5px;width:1600px;text-align:center;transform:scale(0.5,.5);transform-origin:50% 0;">Acoustica Premium Edition</div>
<div class="t" style="top:181.05px;font-size:38.4px;line-height:38.4px;color:#000;left:126.3px;transform:scale(0.5,.5);transform-origin:0 0;">Theme Music.wav*</div>
<div class="t" style="top:300.44px;font-size:31.8px;line-height:31.8px;color:#c9cad2;left:219px;transform:scale(0.5,.5);transform-origin:0 0;">00:00:00:000</div>
<div class="t" style="top:300.44px;font-size:31.8px;line-height:31.8px;color:#c9cad2;left:592px;transform:scale(0.5,.5);transform-origin:0 0;">00:00:10:000</div>
<div class="t" style="top:300.44px;font-size:31.8px;line-height:31.8px;color:#c9cad2;left:965px;transform:scale(0.5,.5);transform-origin:0 0;">00:00:20:000</div>
<div class="t" style="top:300.44px;font-size:31.8px;line-height:31.8px;color:#c9cad2;left:1338px;transform:scale(0.5,.5);transform-origin:0 0;">00:00:30:000</div>
<div class="t" style="top:300.44px;font-size:31.8px;line-height:31.8px;color:#c9cad2;left:1711px;transform:scale(0.5,.5);transform-origin:0 0;">00:00:40:000</div>
<div class="t" style="top:300.44px;font-size:31.8px;line-height:31.8px;color:#c9cad2;left:2084px;transform:scale(0.5,.5);transform-origin:0 0;">00:00:50:000</div>
<div class="t" style="top:327.3px;font-size:32.6px;line-height:32.6px;color:#c9cad2;right:2363px;transform:scale(0.5,.5);transform-origin:100% 0;">-1</div>
<div class="t" style="top:365.2px;font-size:32.6px;line-height:32.6px;color:#c9cad2;right:2363px;transform:scale(0.5,.5);transform-origin:100% 0;">-5</div>
<div class="t" style="top:396.7px;font-size:32.6px;line-height:32.6px;color:#c9cad2;right:2363px;transform:scale(0.5,.5);transform-origin:100% 0;">-11</div>
<div class="t" style="top:428.3px;font-size:32.6px;line-height:32.6px;color:#c9cad2;right:2363px;transform:scale(0.5,.5);transform-origin:100% 0;">-<span style="font-size:47px;line-height:20px;position:relative;top:3.4px">∞</span></div>
<div class="t" style="top:460px;font-size:32.6px;line-height:32.6px;color:#c9cad2;right:2363px;transform:scale(0.5,.5);transform-origin:100% 0;">-11</div>
<div class="t" style="top:491.9px;font-size:32.6px;line-height:32.6px;color:#c9cad2;right:2363px;transform:scale(0.5,.5);transform-origin:100% 0;">-5</div>
<div class="t" style="top:529.8px;font-size:32.6px;line-height:32.6px;color:#c9cad2;right:2363px;transform:scale(0.5,.5);transform-origin:100% 0;">-1</div>
<div class="t" style="top:569.3px;font-size:32.6px;line-height:32.6px;color:#c9cad2;right:2363px;transform:scale(0.5,.5);transform-origin:100% 0;">-1</div>
<div class="t" style="top:607.2px;font-size:32.6px;line-height:32.6px;color:#c9cad2;right:2363px;transform:scale(0.5,.5);transform-origin:100% 0;">-5</div>
<div class="t" style="top:638.7px;font-size:32.6px;line-height:32.6px;color:#c9cad2;right:2363px;transform:scale(0.5,.5);transform-origin:100% 0;">-11</div>
<div class="t" style="top:670.3px;font-size:32.6px;line-height:32.6px;color:#c9cad2;right:2363px;transform:scale(0.5,.5);transform-origin:100% 0;">-<span style="font-size:47px;line-height:20px;position:relative;top:3.4px">∞</span></div>
<div class="t" style="top:702px;font-size:32.6px;line-height:32.6px;color:#c9cad2;right:2363px;transform:scale(0.5,.5);transform-origin:100% 0;">-11</div>
<div class="t" style="top:733.9px;font-size:32.6px;line-height:32.6px;color:#c9cad2;right:2363px;transform:scale(0.5,.5);transform-origin:100% 0;">-5</div>
<div class="t" style="top:771.8px;font-size:32.6px;line-height:32.6px;color:#c9cad2;right:2363px;transform:scale(0.5,.5);transform-origin:100% 0;">-1</div>
<div class="t" style="top:329.22px;font-size:34.2px;line-height:34.2px;color:#fff;left:595.8px;transform:scale(0.5,.5);transform-origin:0 0;">Part A</div>
<div class="t" style="top:329.22px;font-size:34.2px;line-height:34.2px;color:#fff;left:1131.2px;transform:scale(0.5,.5);transform-origin:0 0;">Pads</div>
<div class="t" style="top:840.52px;font-size:36.8px;line-height:36.8px;color:#fff;left:239.2px;transform:scale(0.5,.5);transform-origin:0 0;">From:</div>
<div class="t" style="top:840.52px;font-size:36.8px;line-height:36.8px;color:#fff;left:382.6px;transform:scale(0.5,.5);transform-origin:0 0;">To:</div>
<div class="t" style="top:840.52px;font-size:36.8px;line-height:36.8px;color:#fff;left:526px;transform:scale(0.5,.5);transform-origin:0 0;">Duration:</div>
<div class="t" style="top:872.92px;font-size:36.8px;line-height:36.8px;color:#fff;left:120.4px;transform:scale(0.5,.5);transform-origin:0 0;">Selection:</div>
<div class="t" style="top:907.32px;font-size:36.8px;line-height:36.8px;color:#fff;left:120.4px;transform:scale(0.5,.5);transform-origin:0 0;">View:</div>
<div class="t" style="top:873.22px;font-size:36.8px;line-height:36.8px;color:#000;left:-500.6px;width:1600px;text-align:center;transform:scale(0.5,.5);transform-origin:50% 0;">00:00:00:000</div>
<div class="t" style="top:873.22px;font-size:36.8px;line-height:36.8px;color:#000;left:-356.7px;width:1600px;text-align:center;transform:scale(0.5,.5);transform-origin:50% 0;">00:00:00:000</div>
<div class="t" style="top:873.22px;font-size:36.8px;line-height:36.8px;color:#000;left:-213.4px;width:1600px;text-align:center;transform:scale(0.5,.5);transform-origin:50% 0;">00:00:00:000</div>
<div class="t" style="top:873.22px;font-size:36.8px;line-height:36.8px;color:#000;left:186.1px;width:1600px;text-align:center;transform:scale(0.5,.5);transform-origin:50% 0;">00:00:28:886</div>
<div class="t" style="top:907.42px;font-size:36.8px;line-height:36.8px;color:#000;left:-500.6px;width:1600px;text-align:center;transform:scale(0.5,.5);transform-origin:50% 0;">00:00:00:000</div>
<div class="t" style="top:907.42px;font-size:36.8px;line-height:36.8px;color:#000;left:-356.7px;width:1600px;text-align:center;transform:scale(0.5,.5);transform-origin:50% 0;">00:00:53:493</div>
<div class="t" style="top:907.42px;font-size:36.8px;line-height:36.8px;color:#000;left:-213.4px;width:1600px;text-align:center;transform:scale(0.5,.5);transform-origin:50% 0;">00:00:53:493</div>
<div class="t" style="top:872.92px;font-size:36.8px;line-height:36.8px;color:#fff;left:757px;transform:scale(0.5,.5);transform-origin:0 0;">Cursor position:</div>
<div class="t" style="top:907.32px;font-size:36.8px;line-height:36.8px;color:#fff;left:757px;transform:scale(0.5,.5);transform-origin:0 0;">44100 Hz, 2 channels, 16 bit PCM</div>
<div class="t" style="top:972.59px;font-size:39px;line-height:39px;color:#fff;left:124.8px;transform:scale(0.5,.5);transform-origin:0 0;">Media File Browser</div>
<div class="t" style="top:972.59px;font-size:39px;line-height:39px;color:#000;left:382.6px;transform:scale(0.5,.5);transform-origin:0 0;">Region List</div>
<div class="t" style="top:972.59px;font-size:39px;line-height:39px;color:#fff;left:571.2px;transform:scale(0.5,.5);transform-origin:0 0;">Label List</div>
<div class="t" style="top:1013.32px;font-size:36.8px;line-height:36.8px;color:#fff;left:94.3px;transform:scale(0.5,.5);transform-origin:0 0;">Name</div>
<div class="t" style="top:1013.32px;font-size:36.8px;line-height:36.8px;color:#fff;left:309.4px;transform:scale(0.5,.5);transform-origin:0 0;">Begin</div>
<div class="t" style="top:1013.32px;font-size:36.8px;line-height:36.8px;color:#fff;left:434.5px;transform:scale(0.5,.5);transform-origin:0 0;">End</div>
<div class="t" style="top:1013.32px;font-size:36.8px;line-height:36.8px;color:#fff;left:559.3px;transform:scale(0.5,.5);transform-origin:0 0;">Duration</div>
<div class="t" style="top:1052.32px;font-size:36.8px;line-height:36.8px;color:#000;left:94.3px;transform:scale(0.5,.5);transform-origin:0 0;">Pads</div>
<div class="t" style="top:1052.32px;font-size:36.8px;line-height:36.8px;color:#000;left:309.4px;transform:scale(0.5,.5);transform-origin:0 0;">00:00:24:487</div>
<div class="t" style="top:1052.32px;font-size:36.8px;line-height:36.8px;color:#000;left:434.5px;transform:scale(0.5,.5);transform-origin:0 0;">00:00:43:547</div>
<div class="t" style="top:1052.32px;font-size:36.8px;line-height:36.8px;color:#000;left:559.3px;transform:scale(0.5,.5);transform-origin:0 0;">00:00:19:060</div>
<div class="t" style="top:973.32px;font-size:36.8px;line-height:36.8px;color:#fff;left:724.5px;transform:scale(0.5,.5);transform-origin:0 0;">Processing Chain</div>
<div class="t" style="top:1019.39px;font-size:39px;line-height:39px;color:#000;left:990px;transform:scale(0.5,.5);transform-origin:0 0;">Apply</div>
<div class="t" style="top:1008.12px;font-size:42px;line-height:42px;color:#8d8f9b;font-weight:700;left:1092.8px;transform:scale(0.5,.5);transform-origin:0 0;">SRC off</div>
<div class="t" style="top:1032.11px;font-size:34px;line-height:34px;color:#fff;left:1092.8px;transform:scale(0.5,.5);transform-origin:0 0;">44100 Hz</div>
<div class="t" style="top:1010.31px;font-size:34px;line-height:34px;color:#fff;left:442.3px;width:1600px;text-align:center;transform:scale(0.5,.5);transform-origin:50% 0;">Output</div>
<div class="t" style="top:1030.31px;font-size:34px;line-height:34px;color:#fff;left:442.3px;width:1600px;text-align:center;transform:scale(0.5,.5);transform-origin:50% 0;">level (dB)</div>
<div class="t" style="top:1073.91px;font-size:39.2px;line-height:39.2px;color:#fff;left:821.4px;transform:scale(0.5,.5);transform-origin:0 0;">Dynamics</div>
<div class="t" style="top:1117.71px;font-size:39.2px;line-height:39.2px;color:#fff;left:821.4px;transform:scale(0.5,.5);transform-origin:0 0;">Equalize 2</div>
<div class="t" style="top:1161.51px;font-size:39.2px;line-height:39.2px;color:#fff;left:821.4px;transform:scale(0.5,.5);transform-origin:0 0;">Limit</div>
<div class="t" style="top:1217.19px;font-size:37.6px;line-height:37.6px;color:#000;left:442.4px;width:1600px;text-align:center;transform:scale(0.5,.5);transform-origin:50% 0;">0.0</div>
<div class="t" style="top:973.32px;font-size:36.8px;line-height:36.8px;color:#fff;left:1308.6px;transform:scale(0.5,.5);transform-origin:0 0;">Loudness Meter</div>
<div class="t" style="top:1031.6px;font-size:32.6px;line-height:32.6px;color:#c9cad2;left:1659.2px;transform:scale(0.5,.5);transform-origin:0 0;">-10</div>
<div class="t" style="top:1059.9px;font-size:32.6px;line-height:32.6px;color:#c9cad2;left:1659.2px;transform:scale(0.5,.5);transform-origin:0 0;">-20</div>
<div class="t" style="top:1088.4px;font-size:32.6px;line-height:32.6px;color:#c9cad2;left:1659.2px;transform:scale(0.5,.5);transform-origin:0 0;">-30</div>
<div class="t" style="top:1116.7px;font-size:32.6px;line-height:32.6px;color:#c9cad2;left:1659.2px;transform:scale(0.5,.5);transform-origin:0 0;">-40</div>
<div class="t" style="top:1144.6px;font-size:32.6px;line-height:32.6px;color:#c9cad2;left:1659.2px;transform:scale(0.5,.5);transform-origin:0 0;">-50</div>
<div class="t" style="top:1191.9px;font-size:32.6px;line-height:32.6px;color:#c9cad2;left:523.5px;width:1600px;text-align:center;transform:scale(0.5,.5);transform-origin:50% 0;">-30</div>
<div class="t" style="top:1191.9px;font-size:32.6px;line-height:32.6px;color:#c9cad2;left:609.6px;width:1600px;text-align:center;transform:scale(0.5,.5);transform-origin:50% 0;">-20</div>
<div class="t" style="top:1191.9px;font-size:32.6px;line-height:32.6px;color:#c9cad2;left:695.6px;width:1600px;text-align:center;transform:scale(0.5,.5);transform-origin:50% 0;">-10</div>
<div class="t" style="top:1191.9px;font-size:32.6px;line-height:32.6px;color:#c9cad2;left:782.6px;width:1600px;text-align:center;transform:scale(0.5,.5);transform-origin:50% 0;">0</div>
<div class="t" style="top:1222.9px;font-size:32.6px;line-height:32.6px;color:#c9cad2;left:653px;width:1600px;text-align:center;transform:scale(0.5,.5);transform-origin:50% 0;">Time (s)</div>
<div class="t" style="left:1097.4px;top:1086.4px;width:1200px;text-align:center;font-size:31.2px;line-height:32px;color:#c9cad2;transform:rotate(-90deg) scale(.5);">Loudness (LUFS)</div>
<div class="t" style="top:1018.11px;font-size:34px;line-height:34px;color:#fff;left:1021px;width:1600px;text-align:center;transform:scale(0.5,.5);transform-origin:50% 0;">Momentary (LUFS)</div>
<div class="t" style="top:1037.58px;font-size:53.2px;line-height:53.2px;color:#ffd966;font-weight:700;letter-spacing:1px;left:1021.4px;width:1600px;text-align:center;transform:scale(0.5,.5);transform-origin:50% 0;">-18.2 (-15.7)</div>
<div class="t" style="top:1080.51px;font-size:34px;line-height:34px;color:#fff;left:1021px;width:1600px;text-align:center;transform:scale(0.5,.5);transform-origin:50% 0;">Short-term (LUFS)</div>
<div class="t" style="top:1100.68px;font-size:53.2px;line-height:53.2px;color:#4a8ac4;font-weight:700;letter-spacing:1px;left:1021.4px;width:1600px;text-align:center;transform:scale(0.5,.5);transform-origin:50% 0;">-18.7 (-17.5)</div>
<div class="t" style="top:1142.91px;font-size:34px;line-height:34px;color:#fff;left:1021px;width:1600px;text-align:center;transform:scale(0.5,.5);transform-origin:50% 0;">Integrated (LUFS)</div>
<div class="t" style="top:1162.18px;font-size:53.2px;line-height:53.2px;color:#fff;font-weight:700;letter-spacing:1px;left:1021px;width:1600px;text-align:center;transform:scale(0.5,.5);transform-origin:50% 0;">-18.6</div>
<div class="t" style="top:1205.51px;font-size:34px;line-height:34px;color:#fff;left:1021px;width:1600px;text-align:center;transform:scale(0.5,.5);transform-origin:50% 0;">Loudness Range (LU)</div>
<div class="t" style="top:1224.58px;font-size:53.2px;line-height:53.2px;color:#fff;font-weight:700;letter-spacing:1px;left:1019.8px;width:1600px;text-align:center;transform:scale(0.5,.5);transform-origin:50% 0;">2.1</div>
<div class="t" style="top:973.32px;font-size:36.8px;line-height:36.8px;color:#fff;left:1949.8px;transform:scale(0.5,.5);transform-origin:0 0;">Spectrum Analyzer</div>
<div class="t" style="top:1017.9px;font-size:32.6px;line-height:32.6px;color:#c9cad2;right:571.2px;transform:scale(0.5,.5);transform-origin:100% 0;">0</div>
<div class="t" style="top:1052.5px;font-size:32.6px;line-height:32.6px;color:#c9cad2;right:571.2px;transform:scale(0.5,.5);transform-origin:100% 0;">-20</div>
<div class="t" style="top:1086.8px;font-size:32.6px;line-height:32.6px;color:#c9cad2;right:571.2px;transform:scale(0.5,.5);transform-origin:100% 0;">-40</div>
<div class="t" style="top:1121.1px;font-size:32.6px;line-height:32.6px;color:#c9cad2;right:571.2px;transform:scale(0.5,.5);transform-origin:100% 0;">-60</div>
<div class="t" style="top:1154.9px;font-size:32.6px;line-height:32.6px;color:#c9cad2;right:571.2px;transform:scale(0.5,.5);transform-origin:100% 0;">-80</div>
<div class="t" style="top:1204.1px;font-size:32.6px;line-height:32.6px;color:#c9cad2;left:1260.6px;width:1600px;text-align:center;transform:scale(0.5,.5);transform-origin:50% 0;">50</div>
<div class="t" style="top:1204.1px;font-size:32.6px;line-height:32.6px;color:#c9cad2;left:1347.4px;width:1600px;text-align:center;transform:scale(0.5,.5);transform-origin:50% 0;">200</div>
<div class="t" style="top:1204.1px;font-size:32.6px;line-height:32.6px;color:#c9cad2;left:1447.6px;width:1600px;text-align:center;transform:scale(0.5,.5);transform-origin:50% 0;">1000</div>
<div class="t" style="top:1204.1px;font-size:32.6px;line-height:32.6px;color:#c9cad2;left:1548.4px;width:1600px;text-align:center;transform:scale(0.5,.5);transform-origin:50% 0;">5000</div>
<div class="t" style="top:1204.1px;font-size:32.6px;line-height:32.6px;color:#c9cad2;left:1633.6px;width:1600px;text-align:center;transform:scale(0.5,.5);transform-origin:50% 0;">20000</div>
<div class="t" style="top:182.12px;font-size:36.8px;line-height:36.8px;color:#fff;left:2273.4px;transform:scale(0.5,.5);transform-origin:0 0;">Level Meter</div>
<div class="t" style="top:232.1px;font-size:32.6px;line-height:32.6px;color:#c9cad2;right:244.4px;transform:scale(0.5,.5);transform-origin:100% 0;">0</div>
<div class="t" style="top:274.4px;font-size:32.6px;line-height:32.6px;color:#c9cad2;right:244.4px;transform:scale(0.5,.5);transform-origin:100% 0;">-4</div>
<div class="t" style="top:315.8px;font-size:32.6px;line-height:32.6px;color:#c9cad2;right:244.4px;transform:scale(0.5,.5);transform-origin:100% 0;">-8</div>
<div class="t" style="top:357.2px;font-size:32.6px;line-height:32.6px;color:#c9cad2;right:244.4px;transform:scale(0.5,.5);transform-origin:100% 0;">-12</div>
<div class="t" style="top:398.3px;font-size:32.6px;line-height:32.6px;color:#c9cad2;right:244.4px;transform:scale(0.5,.5);transform-origin:100% 0;">-16</div>
<div class="t" style="top:441.4px;font-size:32.6px;line-height:32.6px;color:#c9cad2;right:244.4px;transform:scale(0.5,.5);transform-origin:100% 0;">-20</div>
<div class="t" style="top:491.3px;font-size:32.6px;line-height:32.6px;color:#c9cad2;right:244.4px;transform:scale(0.5,.5);transform-origin:100% 0;">-40</div>
<div class="t" style="top:544.1px;font-size:32.6px;line-height:32.6px;color:#c9cad2;right:244.4px;transform:scale(0.5,.5);transform-origin:100% 0;">-60</div>
<div class="t" style="top:594.9px;font-size:32.6px;line-height:32.6px;color:#c9cad2;right:244.4px;transform:scale(0.5,.5);transform-origin:100% 0;">-80</div>
<div class="t" style="top:648.1px;font-size:32.6px;line-height:32.6px;color:#c9cad2;right:244.4px;transform:scale(0.5,.5);transform-origin:100% 0;">-100</div>
<div class="t" style="top:667.12px;font-size:36.8px;line-height:36.8px;color:#fff;left:1555.4px;width:1600px;text-align:center;transform:scale(0.5,.5);transform-origin:50% 0;">-7.90</div>
<div class="t" style="top:667.12px;font-size:36.8px;line-height:36.8px;color:#fff;left:1627.8px;width:1600px;text-align:center;transform:scale(0.5,.5);transform-origin:50% 0;">-6.94</div>
<div class="t" style="top:692.26px;font-size:36px;line-height:36px;color:#fff;left:2325.6px;transform:scale(0.5,.5);transform-origin:0 0;">True peak: -6.54</div>
<div class="t" style="top:734.31px;font-size:37.3px;line-height:37.3px;color:#fff;left:2272.9px;transform:scale(0.5,.5);transform-origin:0 0;">Correlation Meter</div>
<div class="t" style="top:935.5px;font-size:32.6px;line-height:32.6px;color:#c9cad2;left:1485px;width:1600px;text-align:center;transform:scale(0.5,.5);transform-origin:50% 0;">-1</div>
<div class="t" style="top:935.5px;font-size:32.6px;line-height:32.6px;color:#c9cad2;left:1568px;width:1600px;text-align:center;transform:scale(0.5,.5);transform-origin:50% 0;">0</div>
<div class="t" style="top:935.5px;font-size:32.6px;line-height:32.6px;color:#c9cad2;left:1649px;width:1600px;text-align:center;transform:scale(0.5,.5);transform-origin:50% 0;">1</div>
</div>
<div class="t" id="wm" style="left:431.7px;top:545px;font-size:208.6px;line-height:200px;font-weight:700;color:rgba(255,255,255,.26);transform:scaleX(.9636);transform-origin:0 0;">LSYPSTUDIO.COM</div>
</div></div>
</body></html>
